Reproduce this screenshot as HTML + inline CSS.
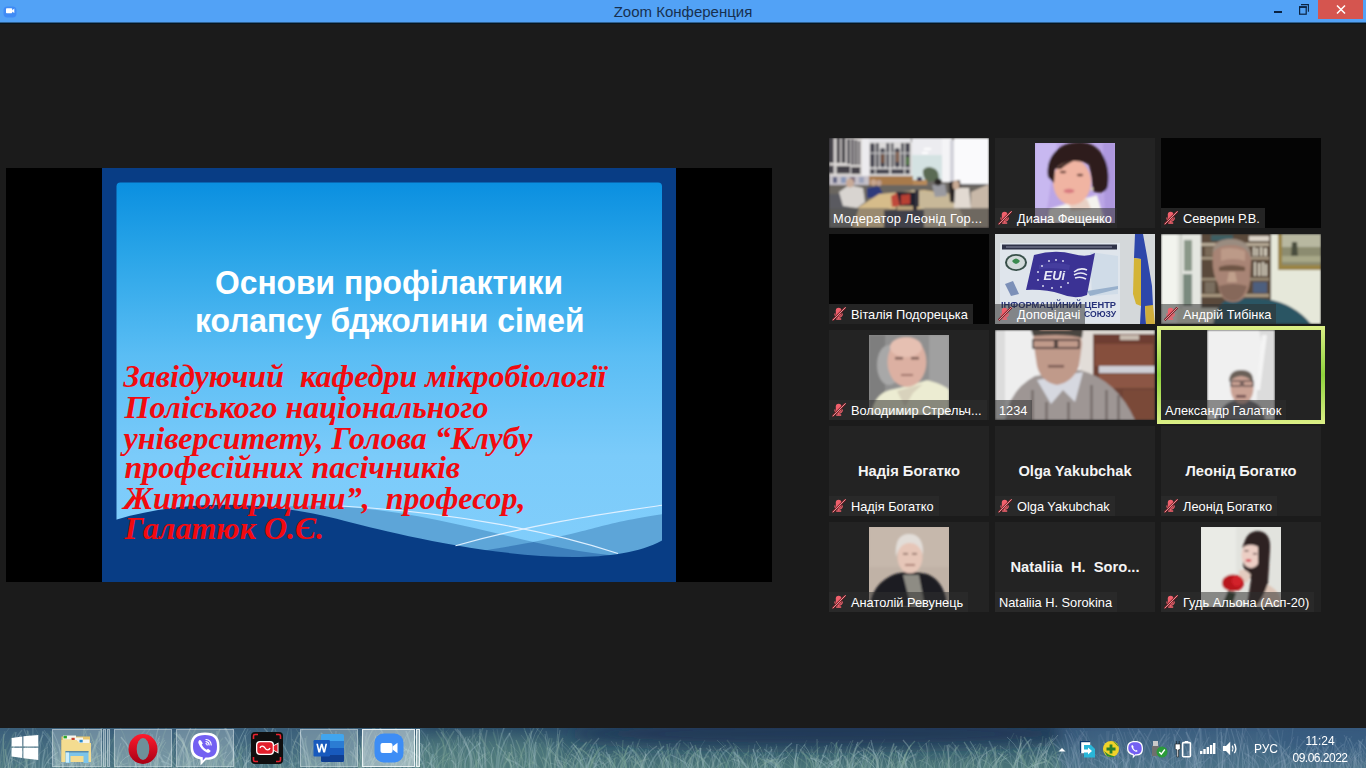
<!DOCTYPE html><html><head><meta charset="utf-8"><style>*{margin:0;padding:0;box-sizing:border-box}
html,body{width:1366px;height:768px;overflow:hidden;background:#1b1b1b;font-family:"Liberation Sans",sans-serif}
.abs{position:absolute}
#title{left:0;top:0;width:1366px;height:22px;background:#52a2f6}
#titleline{left:0;top:22px;width:1366px;height:2px;background:linear-gradient(#30608f 0,#30608f 50%,#061620 50%)}
#ttxt{left:0;top:4px;width:1366px;text-align:center;font-size:15px;color:#17304f;line-height:16px}
#share{left:6px;top:168px;width:766px;height:414px;background:#000}
.tile{position:absolute;width:160px;height:90px;background:#232323;overflow:hidden}
.ph{position:absolute;overflow:hidden}
.lbl{position:absolute;left:0;top:70px;height:20px;background:rgba(48,48,48,.53);color:#fff;font-size:12.8px;line-height:21px;padding-left:22px;padding-right:5px;white-space:nowrap}
.lbl.nomic{padding-left:4px}
.mic{position:absolute;left:3px;top:3px}
.bigname{position:absolute;left:0;top:35.6px;width:160px;text-align:center;color:#f4f4f4;font-weight:bold;font-size:14.7px;line-height:19px}
#active{left:1157px;top:326px;width:168px;height:98px;background:linear-gradient(#dcef86,#8fd33c 50%,#dcef86)}
#taskbar{left:0;top:728px;width:1366px;height:40px;background:#3d6878}
.tbx{position:absolute;top:729px;height:38px;background:rgba(222,234,240,.3);border:1px solid rgba(230,240,245,.42)}
.tbx.act{border:1.5px solid rgba(245,250,252,.85);background:rgba(225,236,238,.5)}
.tray{color:#fff;font-size:12px;line-height:14px}

.lbl.nobg{background:none;letter-spacing:0.22px}
.lbl.blk{background:#242424}
</style></head><body>
<div id="title" class="abs"></div>
<div id="titleline" class="abs"></div>
<div id="ttxt" class="abs">Zoom Конференция</div>
<svg class="abs" style="left:0;top:0" width="24" height="22" viewBox="0 0 24 22">
<rect x="3.5" y="6.5" width="13" height="11" rx="4" fill="#3f8bf5"/>
<rect x="6" y="8.2" width="6.2" height="5" rx="0.8" fill="#fff"/>
<path d="M12 10.5 L14.3 8.6 L14.3 13 L12 11.5 Z" fill="#fff"/>
</svg>
<div class="abs" style="left:1274px;top:11px;width:8px;height:2px;background:#0a2342"></div>
<svg class="abs" style="left:1296px;top:2px" width="14" height="14" viewBox="0 0 14 14">
<rect x="3.6" y="4.9" width="6.6" height="7.3" fill="none" stroke="#0a2342" stroke-width="1.2"/>
<rect x="3" y="4.3" width="7.8" height="1.6" fill="#0a2342"/>
<path d="M5 2.6 H12.4 V9.8" fill="none" stroke="#0a2342" stroke-width="1.1"/>
</svg>
<div class="abs" style="left:1318px;top:0;width:45px;height:19px;background:#d5554f"></div>
<svg class="abs" style="left:1318px;top:0" width="45" height="19" viewBox="0 0 45 19">
<path d="M19 5.5 L27 13.5 M27 5.5 L19 13.5" stroke="#fff" stroke-width="1.5"/>
</svg>

<div id="share" class="abs"></div>
<svg class="abs" style="left:102px;top:168px" width="574" height="414" viewBox="102 168 574 414">
<defs>
<linearGradient id="sg" gradientUnits="userSpaceOnUse" x1="0" y1="182" x2="0" y2="568">
<stop offset="0" stop-color="#0a8fe0"/>
<stop offset="0.19" stop-color="#2aa5e8"/>
<stop offset="0.45" stop-color="#5abdf4"/>
<stop offset="0.71" stop-color="#7bcbfa"/>
<stop offset="1" stop-color="#82cefb"/>
</linearGradient>
</defs>
<rect x="102" y="168" width="574" height="414" fill="#083d85"/>
<rect x="116.5" y="182.5" width="545.5" height="385" rx="4" fill="url(#sg)"/>
<path d="M287.0 506.4 C416.7 499.6 522.5 549.2 620.0 556.0 L640 600 L280 600 Z" fill="#5da5d8"/>
<path d="M455.0 555.0 C607.0 532.0 576.2 527.5 662.0 514.3 L662 600 L455 600 Z" fill="#5da5d8"/>
<clipPath id="cb1"><path d="M287.0 506.4 C416.7 499.6 522.5 549.2 620.0 556.0 L640 600 L280 600 Z"/></clipPath>
<path d="M455.0 555.0 C607.0 532.0 576.2 527.5 662.0 514.3 L662 600 L455 600 Z" fill="#3d7fbc" clip-path="url(#cb1)"/>
<path d="M116.0 519.7 C198.8 495.1 286.3 504.9 344.0 520.7 C386.6 531.4 583.9 583.0 662.0 540.5 L662 582 L116 582 Z" fill="#083d85"/>
<path d="M341.0 506.0 C451.8 512.1 549.6 531.0 618.0 553.5" stroke="#dff0ff" stroke-width="1.1" fill="none"/>
<path d="M455.5 545.7 C536.4 523.0 606.9 513.4 662.0 505.2" stroke="#dff0ff" stroke-width="1.1" fill="none"/>
<text x="215" y="294" textLength="348" lengthAdjust="spacingAndGlyphs" font-family="Liberation Sans" font-weight="bold" font-size="32.5" fill="#fff">Основи профілактики</text>
<text x="195" y="331.7" textLength="389.5" lengthAdjust="spacingAndGlyphs" font-family="Liberation Sans" font-weight="bold" font-size="32.5" fill="#fff">колапсу бджолини сімей</text>
<g font-family="Liberation Serif" font-weight="bold" font-style="italic" font-size="32" fill="#f20a0f">
<text x="123.5" y="387" xml:space="preserve">Завідуючий  кафедри мікробіології</text>
<text x="124.5" y="417.5">Поліського національного</text>
<text x="123.5" y="448.5">університету, Голова “Клубу</text>
<text x="124.5" y="478">професійних пасічників</text>
<text x="123.5" y="508.5" xml:space="preserve">Житомирщини”,  професор,</text>
<text x="124.5" y="539">Галатюк О.Є.</text>
</g>
</svg>

<div class="tile" style="left:829px;top:138px"><svg class="ph" style="left:0;top:0" width="160" height="90" viewBox="0 0 160 90">
<filter id="bmod" x="0" y="0" width="1" height="1"><feGaussianBlur stdDeviation="0.9"/></filter>
<g filter="url(#bmod)">
<rect width="160" height="90" fill="#6e6a66"/>
<rect x="0" y="0" width="33" height="38" fill="#dcd8d6"/>
<g fill="#44424a">
<rect x="0" y="0" width="4.7" height="25"/><rect x="7.6" y="0" width="3.5" height="25"/><rect x="12.6" y="0" width="3.8" height="25"/><rect x="18.2" y="1" width="2.9" height="25"/><rect x="22.3" y="1" width="2.3" height="26"/><rect x="25.8" y="2" width="2.3" height="25"/><rect x="29.3" y="3" width="1.8" height="24"/>
<rect x="0" y="27.5" width="4.7" height="8"/><rect x="7.6" y="28" width="13.5" height="7.5"/><rect x="22.3" y="29" width="9" height="7"/>
</g>
<rect x="33" y="0" width="7" height="38" fill="#ecebee"/>
<rect x="40" y="0" width="42" height="4" fill="#e4e4e8"/>
<rect x="40" y="4" width="43" height="34" fill="#dcdada"/>
<g fill="#4a4a52">
<rect x="41" y="5" width="4.7" height="24.5" rx="2"/><rect x="46.9" y="5" width="2.9" height="24.5"/>
<rect x="51" y="10" width="5.2" height="19.5" rx="2.5"/><rect x="57.4" y="5" width="2.9" height="24.5"/>
<rect x="62.1" y="5" width="2.3" height="24.5"/><rect x="65.6" y="10" width="5.3" height="19.5" rx="2.5"/><rect x="72" y="5" width="3" height="24.5"/><rect x="76.2" y="5" width="4.8" height="24.5"/>
<rect x="41" y="31" width="4.7" height="5"/><rect x="46.9" y="31" width="13.4" height="5"/><rect x="62.1" y="31" width="12.9" height="5"/><rect x="76.2" y="31" width="4.8" height="5"/>
</g>
<rect x="40" y="14.5" width="41" height="1.2" fill="#d0d0d0"/>
<rect x="52" y="16" width="3.5" height="9" fill="#7a5a48"/><rect x="66.5" y="14" width="3.8" height="10" fill="#8a6a5a"/><rect x="76.5" y="19" width="4" height="8" fill="#5a7a50"/>
<rect x="83" y="0" width="30" height="17" fill="#ececf0"/>
<rect x="83" y="17" width="30" height="25" fill="#d4e2e2"/>
<rect x="95" y="10" width="7" height="2" fill="#fff"/><rect x="93" y="14" width="6" height="2" fill="#fff"/>
<path d="M94 32 Q98 27 104 30 Q110 31 110 42 L98 44 Q93 38 94 32Z" fill="#5a6a52"/>
<rect x="113" y="0" width="10" height="44" fill="#f4f4f6"/>
<rect x="121" y="2" width="4" height="42" fill="#d2d2da"/>
<rect x="125" y="0" width="35" height="46" fill="#fafafc"/>
<rect x="0" y="38" width="40" height="9" fill="#c4c0c8"/>
<rect x="4" y="39" width="4" height="6" fill="#5a5e80"/><rect x="12" y="39" width="5" height="6" fill="#8a98b8"/><rect x="21" y="39" width="5" height="6" fill="#7a6a7a"/><rect x="30" y="39" width="5" height="6" fill="#9aa0b8"/>
<rect x="40" y="38" width="44" height="9" fill="#a87a4c"/>
<rect x="84" y="42" width="14" height="6" fill="#b88a5a"/><rect x="88" y="39" width="5" height="4" fill="#40405a"/>
<rect x="126" y="46" width="34" height="10" fill="#3a4052"/>
<rect x="0" y="47" width="160" height="43" fill="#6a6660"/>
<rect x="0" y="56" width="20" height="34" fill="#5a5a60"/>
<path d="M10 54 L20 47 L34 50 L36 64 L28 70 L14 68 Z" fill="#d8d4d0"/>
<ellipse cx="21" cy="45" rx="4" ry="4.5" fill="#c8aa98"/>
<path d="M38 50 L50 48 L54 56 L48 60 L38 60 Z" fill="#2e3a7c"/>
<ellipse cx="44.5" cy="44.5" rx="3" ry="3.2" fill="#c8a68e"/><ellipse cx="50" cy="45" rx="2.6" ry="3" fill="#c0a090"/>
<path d="M27 71 L50 56 L95 52 L122 56 L134 71 Z" fill="#d6bc8a"/>
<path d="M82 52 L122 56 L134 71 L92 71Z" fill="#c8b898"/>
<rect x="67" y="54" width="21" height="20" fill="#24242e"/>
<path d="M62 58 L68 55 L71 68 L63 69Z" fill="#c04a3a"/><path d="M72 57 L81 56 L81 66 L72 67Z" fill="#b84030"/>
<rect x="68" y="68" width="16" height="6" fill="#b8a078"/>
<rect x="86" y="52" width="4" height="17" fill="#30303a"/>
<path d="M103 47 L116 46 L118 58 L106 59Z" fill="#9a9aa0"/>
<ellipse cx="109" cy="44" rx="3.5" ry="3.5" fill="#2a2626"/>
<path d="M120 44 L131 42 L133 66 L121 64Z" fill="#282020"/>
<path d="M126 50 L140 50 L142 70 L125 70Z" fill="#e2dad2"/>
<ellipse cx="127" cy="47" rx="3.5" ry="4.5" fill="#c8aa94"/>
<path d="M142 54 L160 46 V72 L142 72Z" fill="#c8b8a8"/>
<rect x="0" y="72" width="160" height="18" fill="#7a7266"/>
<path d="M0 70 H30 L22 90 H0Z" fill="#585858"/>
<path d="M30 70 H60 L56 90 H24Z" fill="#9a8a70"/>
<rect x="55" y="72" width="40" height="18" fill="#40404a"/>
<path d="M95 70 H130 L140 90 H95Z" fill="#8a8274"/>
<path d="M130 70 H160 V90 H140Z" fill="#6e6860"/>
</g>
</svg>
<div class="lbl nomic nobg">Модератор Леонід Гор...</div></div>
<div class="tile" style="left:995px;top:138px"><svg class="ph" style="left:40px;top:5px" width="80" height="80" viewBox="0 0 80 80">
<filter id="bdi" x="-0.1" y="-0.1" width="1.2" height="1.2"><feGaussianBlur stdDeviation="0.9"/></filter>
<rect width="80" height="80" fill="#bba6e6"/>
<g filter="url(#bdi)">
<path d="M0 0 H22 L10 80 H0Z" fill="#c8b8f0"/>
<path d="M68 0 H80 V80 H70 Z" fill="#ae98de"/>
<path d="M14 66 Q40 58 62 52 L70 80 H12 Z" fill="#f4f3ee"/>
<path d="M34 60 L52 56 L56 66 L36 68Z" fill="#e8d0c4"/>
<ellipse cx="37" cy="39" rx="19" ry="23" fill="#f0b4a2"/>
<path d="M13 34 C10 12 26 -2 46 -1 C66 0 76 20 73 42 C72 50 64 51 58 48 C57 38 56 30 54 22 C46 16 30 16 20 26 L19 40 Z" fill="#2e1e1c"/>
<path d="M20 26 Q30 18 40 17 Q30 22 26 26Z" fill="#3a2824"/>
<ellipse cx="28" cy="29" rx="3.2" ry="1.3" fill="#6a4038"/><ellipse cx="45" cy="32" rx="3.2" ry="1.3" fill="#6a4038"/>
<ellipse cx="34" cy="48" rx="5.5" ry="2.2" fill="#d87a80"/>
<circle cx="57" cy="46" r="1.4" fill="#e8d8b8"/>
</g>
</svg>
<div class="lbl"><svg class="mic" viewBox="0 0 14 14" width="14" height="14"><rect x="3.8" y="0.8" width="5.6" height="8.4" rx="2.8" fill="#f0606c"/><path d="M2.8 6.5 Q2.8 10 6.6 10.2 Q10.4 10 10.4 6.5" stroke="#f0606c" stroke-width="1.1" fill="none"/><rect x="5.9" y="9.5" width="1.5" height="2.2" fill="#f0606c"/><rect x="4.2" y="11.3" width="5" height="1.5" fill="#f0606c"/><path d="M0.6 13.3 L13.6 0.3" stroke="#7a1820" stroke-width="2.2"/><path d="M0.6 13.3 L13.6 0.3" stroke="#f4b4b8" stroke-width="0.9"/></svg>Диана Фещенко</div></div>
<div class="tile" style="left:1161px;top:138px"><div style="position:absolute;inset:0;background:#040404"></div><div class="lbl blk"><svg class="mic" viewBox="0 0 14 14" width="14" height="14"><rect x="3.8" y="0.8" width="5.6" height="8.4" rx="2.8" fill="#f0606c"/><path d="M2.8 6.5 Q2.8 10 6.6 10.2 Q10.4 10 10.4 6.5" stroke="#f0606c" stroke-width="1.1" fill="none"/><rect x="5.9" y="9.5" width="1.5" height="2.2" fill="#f0606c"/><rect x="4.2" y="11.3" width="5" height="1.5" fill="#f0606c"/><path d="M0.6 13.3 L13.6 0.3" stroke="#7a1820" stroke-width="2.2"/><path d="M0.6 13.3 L13.6 0.3" stroke="#f4b4b8" stroke-width="0.9"/></svg>Северин Р.В.</div></div>
<div class="tile" style="left:829px;top:234px"><div style="position:absolute;inset:0;background:#030303"></div><div class="lbl blk"><svg class="mic" viewBox="0 0 14 14" width="14" height="14"><rect x="3.8" y="0.8" width="5.6" height="8.4" rx="2.8" fill="#f0606c"/><path d="M2.8 6.5 Q2.8 10 6.6 10.2 Q10.4 10 10.4 6.5" stroke="#f0606c" stroke-width="1.1" fill="none"/><rect x="5.9" y="9.5" width="1.5" height="2.2" fill="#f0606c"/><rect x="4.2" y="11.3" width="5" height="1.5" fill="#f0606c"/><path d="M0.6 13.3 L13.6 0.3" stroke="#7a1820" stroke-width="2.2"/><path d="M0.6 13.3 L13.6 0.3" stroke="#f4b4b8" stroke-width="0.9"/></svg>Віталія Подорецька</div></div>
<div class="tile" style="left:995px;top:234px"><svg class="ph" style="left:0;top:0" width="160" height="90" viewBox="0 0 160 90">
<filter id="beu" x="0" y="0" width="1" height="1"><feGaussianBlur stdDeviation="0.6"/></filter>
<g filter="url(#beu)">
<rect width="160" height="90" fill="#d4d8da"/>
<rect x="5" y="9" width="120" height="80" fill="#dfe5ec"/>
<rect x="7" y="10.5" width="115" height="5" fill="#2e3248"/>
<rect x="11" y="12" width="106" height="2" fill="#7a7e98" opacity=".6"/>
<path d="M95 18 L123 22 L123 60 L97 62 Z" fill="#d0dce8"/>
<path d="M92 57 L123 52 L123 55 L95 62Z" fill="#98b0cc"/>
<path d="M10 50 L18 47 L24 60 L16 62Z" fill="#7c90b8"/>
<ellipse cx="21" cy="28.5" rx="11" ry="8.5" fill="#38504a"/>
<ellipse cx="21" cy="28.5" rx="9" ry="6.8" fill="#d2dada"/>
<path d="M17 27 Q21 22 25 27 Q21 33 17 27Z" fill="#3a8a50"/>
<path d="M39 21 Q60 15 78 20 Q92 24 100 19 L92 61 Q80 66 66 60 Q50 55 31 56 Z" fill="#3a3394"/>
<path d="M44 31 Q60 27 75 31 L74 36 Q60 33 44 35Z" fill="#4d48a8" opacity=".5"/>
<text x="48.5" y="46" font-family="Liberation Sans" font-weight="bold" font-style="italic" font-size="13" fill="#e8e8f4">EUi</text>
<path d="M79 38 Q85 33 92 36 M79 41 Q86 37 92 41 M80 44 Q86 42 91 45" stroke="#e8e8f4" stroke-width="1.5" fill="none"/>
<g fill="#d8d8ee"><circle cx="54" cy="27" r="1"/><circle cx="61" cy="26" r="1"/><circle cx="68" cy="27" r="1"/><circle cx="47" cy="32" r="1"/><circle cx="43" cy="38" r="1"/><circle cx="43" cy="46" r="1"/><circle cx="48" cy="52" r="1"/><circle cx="57" cy="54" r="1"/><circle cx="66" cy="53" r="1"/><circle cx="73" cy="49" r="1"/></g>
<rect x="6" y="66.5" width="115" height="7" fill="#dfe5ec"/>
<text x="6" y="74" font-family="Liberation Sans" font-weight="bold" font-size="9" textLength="115" lengthAdjust="spacingAndGlyphs" fill="#26327a">ІНФОРМАЦІЙНИЙ ЦЕНТР</text>
<text x="89" y="83" font-family="Liberation Sans" font-weight="bold" font-size="9" textLength="32" lengthAdjust="spacingAndGlyphs" fill="#26327a">СОЮЗУ</text>
<path d="M140 0 H148 L152 22 L157 52 L158 72 L150 72 L151 90 H145 L146 72 L146 25 L139 24 Z" fill="#2e46aa"/>
<path d="M139 24 L146 25 L146 72 L141 70 L138 60Z" fill="#d4b436"/>
<path d="M150 72 L158 71 L160 90 H151Z" fill="#d0ae3a"/>
</g>
</svg>
<div class="lbl"><svg class="mic" viewBox="0 0 14 14" width="14" height="14"><rect x="3.8" y="0.8" width="5.6" height="8.4" rx="2.8" fill="#f0606c"/><path d="M2.8 6.5 Q2.8 10 6.6 10.2 Q10.4 10 10.4 6.5" stroke="#f0606c" stroke-width="1.1" fill="none"/><rect x="5.9" y="9.5" width="1.5" height="2.2" fill="#f0606c"/><rect x="4.2" y="11.3" width="5" height="1.5" fill="#f0606c"/><path d="M0.6 13.3 L13.6 0.3" stroke="#7a1820" stroke-width="2.2"/><path d="M0.6 13.3 L13.6 0.3" stroke="#f4b4b8" stroke-width="0.9"/></svg>Доповідачі</div></div>
<div class="tile" style="left:1161px;top:234px"><svg class="ph" style="left:0;top:0" width="160" height="90" viewBox="0 0 160 90">
<filter id="ban" x="0" y="0" width="1" height="1"><feGaussianBlur stdDeviation="0.9"/></filter>
<g filter="url(#ban)">
<rect width="160" height="90" fill="#e2e4d4"/>
<rect x="0" y="0" width="16" height="90" fill="#f2f4ee"/>
<rect x="16" y="0" width="24" height="75" fill="#e4e6e0"/>
<rect x="19" y="0" width="2" height="75" fill="#c8ccc4"/>
<rect x="23" y="6" width="8" height="31" fill="#8a9888"/><rect x="22" y="40" width="9" height="32" fill="#7a8a7e"/>
<rect x="40" y="0" width="70" height="74" fill="#5a4a3a"/>
<rect x="40" y="9" width="68" height="3" fill="#b8ac98"/><rect x="40" y="23" width="68" height="2.5" fill="#a89a84"/><rect x="40" y="44" width="68" height="2.5" fill="#9a8c76"/><rect x="40" y="60" width="68" height="3" fill="#a89880"/>
<rect x="50" y="1" width="22" height="6" fill="#3e5e64"/><rect x="88" y="2" width="20" height="5" fill="#dcd4c8"/>
<g fill="#cfc8b8"><rect x="92" y="13" width="2" height="9"/><rect x="95" y="14" width="2" height="8"/><rect x="99" y="13" width="2.5" height="9"/><rect x="103" y="14" width="3" height="8"/><rect x="93" y="28" width="2" height="14"/><rect x="97" y="29" width="2.5" height="13"/><rect x="101" y="28" width="2" height="14"/><rect x="104" y="30" width="2" height="12"/></g>
<rect x="92" y="48" width="14" height="11" fill="#4e5e7e"/>
<rect x="44" y="13" width="10" height="9" fill="#7a6a58"/><rect x="44" y="48" width="10" height="11" fill="#7a6e5e"/>
<rect x="110" y="0" width="50" height="90" fill="#e6e8da"/>
<rect x="117" y="0" width="43" height="36" fill="#9a8444"/>
<rect x="121" y="0" width="39" height="31" fill="#8c8c70"/>
<rect x="121" y="0" width="39" height="13" fill="#b8b8a0"/>
<path d="M131 8 L136 8 L137 24 L130 24Z" fill="#4a4e3c"/>
<rect x="121" y="22" width="39" height="6" fill="#a8a888"/>
<path d="M52 90 Q56 66 72 64 L96 64 Q130 66 150 90Z" fill="#2a5464"/>
<path d="M52 17 Q52 5 71 5 Q91 6 90 27 L89 48 Q86 68 72 68 Q59 68 57 50 Q50 38 52 17Z" fill="#a88474"/>
<path d="M52 19 Q52 5 71 5 Q91 6 90 25 Q86 11 71 11 Q56 11 52 19Z" fill="#9a8c80"/>
<path d="M60 15 Q72 12 84 17 L84 27 Q72 23 60 27Z" fill="#bc9a88"/>
<path d="M58 33 Q70 29 84 33 L84 37 L58 37Z" fill="#6e5444"/>
<path d="M68 38 L74 38 L76 48 L66 48Z" fill="#c0a08c"/>
<path d="M58 52 Q72 48 86 52 Q82 67 72 67 Q61 67 58 52Z" fill="#86685a"/>
</g>
</svg>
<div class="lbl"><svg class="mic" viewBox="0 0 14 14" width="14" height="14"><rect x="3.8" y="0.8" width="5.6" height="8.4" rx="2.8" fill="#f0606c"/><path d="M2.8 6.5 Q2.8 10 6.6 10.2 Q10.4 10 10.4 6.5" stroke="#f0606c" stroke-width="1.1" fill="none"/><rect x="5.9" y="9.5" width="1.5" height="2.2" fill="#f0606c"/><rect x="4.2" y="11.3" width="5" height="1.5" fill="#f0606c"/><path d="M0.6 13.3 L13.6 0.3" stroke="#7a1820" stroke-width="2.2"/><path d="M0.6 13.3 L13.6 0.3" stroke="#f4b4b8" stroke-width="0.9"/></svg>Андрій Тибінка</div></div>
<div class="tile" style="left:829px;top:330px"><svg class="ph" style="left:40px;top:5px" width="80" height="80" viewBox="0 0 80 80">
<filter id="bvo" x="-0.1" y="-0.1" width="1.2" height="1.2"><feGaussianBlur stdDeviation="1"/></filter>
<rect width="80" height="80" fill="#909090"/>
<g filter="url(#bvo)">
<rect x="0" y="0" width="16" height="80" fill="#7e7e7e"/>
<rect x="60" y="0" width="20" height="55" fill="#a0a0a0"/>
<ellipse cx="20" cy="30" rx="12" ry="20" fill="#a8a8a8"/>
<path d="M2 80 Q5 60 20 55 L38 51 L58 45 Q76 50 80 55 V80Z" fill="#ececd2"/>
<path d="M28 56 L36 72 L44 58 L54 49 Z" fill="#d8d2bc"/>
<ellipse cx="38" cy="27" rx="19.5" ry="25" fill="#dcb0a2"/>
<ellipse cx="37" cy="12" rx="16" ry="10" fill="#e6c0b2"/>
<rect x="26" y="22" width="8" height="2.4" fill="#7a5a52"/><rect x="42" y="22" width="8" height="2.4" fill="#7a5a52"/>
<rect x="32" y="39" width="12" height="2" fill="#a0746a"/>
</g>
</svg>
<div class="lbl"><svg class="mic" viewBox="0 0 14 14" width="14" height="14"><rect x="3.8" y="0.8" width="5.6" height="8.4" rx="2.8" fill="#f0606c"/><path d="M2.8 6.5 Q2.8 10 6.6 10.2 Q10.4 10 10.4 6.5" stroke="#f0606c" stroke-width="1.1" fill="none"/><rect x="5.9" y="9.5" width="1.5" height="2.2" fill="#f0606c"/><rect x="4.2" y="11.3" width="5" height="1.5" fill="#f0606c"/><path d="M0.6 13.3 L13.6 0.3" stroke="#7a1820" stroke-width="2.2"/><path d="M0.6 13.3 L13.6 0.3" stroke="#f4b4b8" stroke-width="0.9"/></svg>Володимир Стрельч...</div></div>
<div class="tile" style="left:995px;top:330px"><svg class="ph" style="left:0;top:0" width="160" height="90" viewBox="0 0 160 90">
<filter id="b12" x="0" y="0" width="1" height="1"><feGaussianBlur stdDeviation="1.1"/></filter>
<g filter="url(#b12)">
<rect width="160" height="90" fill="#eeeeee"/>
<rect x="0" y="0" width="10" height="90" fill="#dcdcdc"/>
<rect x="85" y="0" width="15" height="45" fill="#e2ddd8"/>
<rect x="98" y="0" width="62" height="90" fill="#6e4234"/>
<rect x="98" y="0" width="62" height="4" fill="#e0dcd6"/>
<rect x="100" y="4" width="58" height="10" fill="#6e3e30"/>
<rect x="125" y="5" width="19" height="5" fill="#c8bcb0"/>
<rect x="100" y="14" width="58" height="22" fill="#86503e"/>
<rect x="104" y="36" width="56" height="7" fill="#cfcfd6"/>
<rect x="104" y="44" width="56" height="14" fill="#8c5644"/>
<rect x="128" y="60" width="32" height="30" fill="#7a4838"/>
<path d="M10 90 Q14 60 40 46 L85 40 Q122 50 140 90Z" fill="#9e9694"/>
<path d="M42 50 L56 74 L68 60 L80 72 L88 42 Z" fill="#d6d8e0"/>
<g fill="#766c6a" opacity=".8"><rect x="36" y="60" width="3" height="30"/><rect x="50" y="72" width="3" height="18"/><rect x="72" y="72" width="3" height="18"/><rect x="95" y="55" width="3" height="35"/><rect x="110" y="60" width="3" height="30"/><rect x="122" y="65" width="3" height="25"/></g>
<path d="M38 10 Q38 -4 62 -3 Q87 -2 87 14 L84 36 Q78 52 62 55 Q46 52 42 36 Z" fill="#c09a8a"/>
<path d="M36 0 H88 L87 8 Q72 3 38 6Z" fill="#4a4440"/>
<path d="M38 10 H60 L60 18 H38Z M62 10 H84 L84 18 H62Z" fill="none" stroke="#3a3030" stroke-width="1.6"/>
<rect x="53" y="35" width="16" height="2.5" fill="#7a5a52"/>
</g>
</svg>
<div class="lbl nomic">1234</div></div>
<div class="abs" id="active"></div>
<div class="tile" style="left:1161px;top:330px"><svg class="ph" style="left:46px;top:0" width="68" height="90" viewBox="0 0 68 90">
<filter id="bga" x="0" y="0" width="1" height="1"><feGaussianBlur stdDeviation="1"/></filter>
<g filter="url(#bga)">
<rect width="68" height="90" fill="#f0f0f0"/>
<rect x="0" y="0" width="68" height="40" fill="#f0f0f0"/>
<path d="M52 0 H68 V90 H50 Q48 50 56 20Z" fill="#dcdcdc"/>
<path d="M55 5 L60 5 L53 60 L49 60Z" fill="#f4f4f4"/>
<path d="M10 90 Q14 72 30 70 L40 70 Q56 72 58 90Z" fill="#6a6a72"/>
<ellipse cx="35" cy="58" rx="11.5" ry="16" fill="#caa294"/>
<path d="M22 52 Q22 40 34 40 Q47 40 46 52 Q40 46 34 46 Q28 46 22 52Z" fill="#6a6058"/>
<path d="M24 51 H34 V56 H24Z M36 51 H46 V56 H36Z" fill="none" stroke="#3a3030" stroke-width="1.1"/>
<rect x="29" y="65" width="10" height="2.5" fill="#6a4848"/>
</g>
</svg>
<div class="lbl nomic">Александр Галатюк</div></div>
<div class="tile" style="left:829px;top:426px"><div class="bigname">Надія Богатко</div><div class="lbl"><svg class="mic" viewBox="0 0 14 14" width="14" height="14"><rect x="3.8" y="0.8" width="5.6" height="8.4" rx="2.8" fill="#f0606c"/><path d="M2.8 6.5 Q2.8 10 6.6 10.2 Q10.4 10 10.4 6.5" stroke="#f0606c" stroke-width="1.1" fill="none"/><rect x="5.9" y="9.5" width="1.5" height="2.2" fill="#f0606c"/><rect x="4.2" y="11.3" width="5" height="1.5" fill="#f0606c"/><path d="M0.6 13.3 L13.6 0.3" stroke="#7a1820" stroke-width="2.2"/><path d="M0.6 13.3 L13.6 0.3" stroke="#f4b4b8" stroke-width="0.9"/></svg>Надія Богатко</div></div>
<div class="tile" style="left:995px;top:426px"><div class="bigname">Olga Yakubchak</div><div class="lbl"><svg class="mic" viewBox="0 0 14 14" width="14" height="14"><rect x="3.8" y="0.8" width="5.6" height="8.4" rx="2.8" fill="#f0606c"/><path d="M2.8 6.5 Q2.8 10 6.6 10.2 Q10.4 10 10.4 6.5" stroke="#f0606c" stroke-width="1.1" fill="none"/><rect x="5.9" y="9.5" width="1.5" height="2.2" fill="#f0606c"/><rect x="4.2" y="11.3" width="5" height="1.5" fill="#f0606c"/><path d="M0.6 13.3 L13.6 0.3" stroke="#7a1820" stroke-width="2.2"/><path d="M0.6 13.3 L13.6 0.3" stroke="#f4b4b8" stroke-width="0.9"/></svg>Olga Yakubchak</div></div>
<div class="tile" style="left:1161px;top:426px"><div class="bigname">Леонід Богатко</div><div class="lbl"><svg class="mic" viewBox="0 0 14 14" width="14" height="14"><rect x="3.8" y="0.8" width="5.6" height="8.4" rx="2.8" fill="#f0606c"/><path d="M2.8 6.5 Q2.8 10 6.6 10.2 Q10.4 10 10.4 6.5" stroke="#f0606c" stroke-width="1.1" fill="none"/><rect x="5.9" y="9.5" width="1.5" height="2.2" fill="#f0606c"/><rect x="4.2" y="11.3" width="5" height="1.5" fill="#f0606c"/><path d="M0.6 13.3 L13.6 0.3" stroke="#7a1820" stroke-width="2.2"/><path d="M0.6 13.3 L13.6 0.3" stroke="#f4b4b8" stroke-width="0.9"/></svg>Леонід Богатко</div></div>
<div class="tile" style="left:829px;top:522px"><svg class="ph" style="left:40px;top:5px" width="80" height="80" viewBox="0 0 80 80">
<filter id="bat" x="-0.1" y="-0.1" width="1.2" height="1.2"><feGaussianBlur stdDeviation="0.9"/></filter>
<rect width="80" height="80" fill="#c0b2a6"/>
<g filter="url(#bat)">
<rect x="0" y="0" width="80" height="40" fill="#c6b8ac"/>
<path d="M1 80 Q3 56 26 47 L40 44 L58 47 Q76 54 78 80Z" fill="#1c1c24"/>
<path d="M34 48 L50 48 L56 80 L42 80Z" fill="#8e8c84"/>
<ellipse cx="41" cy="30" rx="12.5" ry="16.5" fill="#e6c6b8"/>
<path d="M27 30 Q25 7 40 7 Q55 7 54 28 Q50 15 40 16 Q31 16 27 30Z" fill="#e2ddd8"/>
<rect x="34" y="26" width="5" height="1.6" fill="#8a6a60"/><rect x="43" y="26" width="5" height="1.6" fill="#8a6a60"/>
<rect x="36" y="37" width="10" height="1.8" fill="#a87a70"/>
</g>
</svg>
<div class="lbl"><svg class="mic" viewBox="0 0 14 14" width="14" height="14"><rect x="3.8" y="0.8" width="5.6" height="8.4" rx="2.8" fill="#f0606c"/><path d="M2.8 6.5 Q2.8 10 6.6 10.2 Q10.4 10 10.4 6.5" stroke="#f0606c" stroke-width="1.1" fill="none"/><rect x="5.9" y="9.5" width="1.5" height="2.2" fill="#f0606c"/><rect x="4.2" y="11.3" width="5" height="1.5" fill="#f0606c"/><path d="M0.6 13.3 L13.6 0.3" stroke="#7a1820" stroke-width="2.2"/><path d="M0.6 13.3 L13.6 0.3" stroke="#f4b4b8" stroke-width="0.9"/></svg>Анатолій Ревунець</div></div>
<div class="tile" style="left:995px;top:522px"><div class="bigname">Nataliia&nbsp; H.&nbsp; Soro...</div><div class="lbl nomic">Nataliia H. Sorokina</div></div>
<div class="tile" style="left:1161px;top:522px"><svg class="ph" style="left:40px;top:5px" width="80" height="80" viewBox="0 0 80 80">
<filter id="bgu" x="-0.1" y="-0.1" width="1.2" height="1.2"><feGaussianBlur stdDeviation="0.8"/></filter>
<rect width="80" height="80" fill="#e2e3de"/>
<g filter="url(#bgu)">
<rect x="0" y="0" width="35" height="80" fill="#eaebe6"/>
<path d="M62 56 Q76 60 80 72 V80 H56Z" fill="#dec6b8"/>
<path d="M42 22 Q44 4 57 4 Q70 5 69 22 L67 56 Q62 72 54 80 L46 80 L50 52 Q44 46 42 38Z" fill="#2e2222"/>
<ellipse cx="50" cy="28" rx="9.5" ry="13" fill="#eccec4"/>
<path d="M41 21 Q45 9 57 11 L61 24 Q55 15 44 19Z" fill="#2e2222"/>
<path d="M57 13 L64 18 L63 48 L57 44Z" fill="#2e2222"/>
<rect x="43.5" y="23" width="4" height="1.4" fill="#5a4040"/><rect x="52" y="26" width="4" height="1.4" fill="#5a4040"/>
<ellipse cx="47.5" cy="33.5" rx="3" ry="1.3" fill="#d03848"/>
<path d="M38 44 Q44 40 50 48 L46 56 L38 52Z" fill="#e4ccc0"/>
<ellipse cx="32" cy="56" rx="11" ry="8.5" fill="#b8121a"/>
<ellipse cx="36" cy="54" rx="5.5" ry="5.5" fill="#d2202a"/>
<path d="M20 80 L27 64 L35 66 L31 80Z" fill="#30402e"/>
</g>
</svg>
<div class="lbl"><svg class="mic" viewBox="0 0 14 14" width="14" height="14"><rect x="3.8" y="0.8" width="5.6" height="8.4" rx="2.8" fill="#f0606c"/><path d="M2.8 6.5 Q2.8 10 6.6 10.2 Q10.4 10 10.4 6.5" stroke="#f0606c" stroke-width="1.1" fill="none"/><rect x="5.9" y="9.5" width="1.5" height="2.2" fill="#f0606c"/><rect x="4.2" y="11.3" width="5" height="1.5" fill="#f0606c"/><path d="M0.6 13.3 L13.6 0.3" stroke="#7a1820" stroke-width="2.2"/><path d="M0.6 13.3 L13.6 0.3" stroke="#f4b4b8" stroke-width="0.9"/></svg>Гудь Альона (Асп-20)</div></div>
<svg class="abs" style="left:0;top:728px" width="1366" height="40" viewBox="0 0 1366 40">
<defs><linearGradient id="tbg" x1="0" y1="0" x2="0" y2="1"><stop offset="0" stop-color="#2a4c68"/><stop offset="0.5" stop-color="#3a6272"/><stop offset="1" stop-color="#4a7478"/></linearGradient><filter id="tbl" x="-0.5" y="-2" width="2" height="5"><feGaussianBlur stdDeviation="7"/></filter><filter id="tgr" x="0" y="0" width="1" height="1"><feGaussianBlur stdDeviation="0.45"/></filter></defs>
<rect width="1366" height="40" fill="url(#tbg)"/>
<g filter="url(#tbl)"><ellipse cx="830" cy="6" rx="260" ry="14" fill="#17304e" opacity=".7"/><ellipse cx="1340" cy="12" rx="70" ry="18" fill="#1e3c64" opacity=".5"/><rect x="1060" y="-10" width="330" height="60" fill="#4a6e96" opacity=".5"/><ellipse cx="470" cy="24" rx="90" ry="18" fill="#6a988c" opacity=".35"/><rect x="-20" y="-10" width="440" height="60" fill="#4e7890" opacity=".45"/></g>
<g fill="none" filter="url(#tgr)"><path d="M617 42Q619 30 632 22" stroke="#9cbcc4" stroke-opacity="0.31" stroke-width="1.4"/><path d="M649 42Q645 29 638 20" stroke="#a0b8bc" stroke-opacity="0.30" stroke-width="1.2"/><path d="M815 43Q816 33 814 26" stroke="#6e9890" stroke-opacity="0.32" stroke-width="0.7"/><path d="M39 43Q39 19 43 3" stroke="#9cbcc4" stroke-opacity="0.31" stroke-width="1.1"/><path d="M877 42Q877 30 883 23" stroke="#8fb0a4" stroke-opacity="0.42" stroke-width="1.3"/><path d="M427 40Q428 31 419 24" stroke="#7ca494" stroke-opacity="0.26" stroke-width="1.0"/><path d="M1318 41Q1318 23 1300 11" stroke="#8098b0" stroke-opacity="0.17" stroke-width="1.0"/><path d="M91 41Q89 23 101 10" stroke="#acc8cc" stroke-opacity="0.24" stroke-width="1.4"/><path d="M154 40Q154 30 139 23" stroke="#6e9890" stroke-opacity="0.20" stroke-width="0.8"/><path d="M695 42Q696 24 705 12" stroke="#9cbcc4" stroke-opacity="0.26" stroke-width="0.6"/><path d="M1188 44Q1185 18 1191 1" stroke="#8098b0" stroke-opacity="0.12" stroke-width="1.2"/><path d="M129 41Q130 15 119 -3" stroke="#7ca494" stroke-opacity="0.24" stroke-width="1.0"/><path d="M93 40Q93 31 98 25" stroke="#9cbcc4" stroke-opacity="0.32" stroke-width="1.6"/><path d="M660 41Q660 28 674 20" stroke="#6e9890" stroke-opacity="0.40" stroke-width="0.8"/><path d="M253 41Q259 20 269 6" stroke="#6e9890" stroke-opacity="0.39" stroke-width="0.7"/><path d="M56 41Q58 34 56 29" stroke="#acc8cc" stroke-opacity="0.26" stroke-width="1.4"/><path d="M817 43Q811 34 805 28" stroke="#6e9890" stroke-opacity="0.21" stroke-width="1.3"/><path d="M844 44Q844 38 833 34" stroke="#acc8cc" stroke-opacity="0.17" stroke-width="1.0"/><path d="M74 42Q70 34 69 28" stroke="#acc8cc" stroke-opacity="0.25" stroke-width="1.6"/><path d="M901 41Q897 27 904 17" stroke="#7ca494" stroke-opacity="0.15" stroke-width="1.3"/><path d="M1324 42Q1327 37 1329 33" stroke="#90a8c0" stroke-opacity="0.14" stroke-width="0.7"/><path d="M747 43Q751 28 761 19" stroke="#7ca494" stroke-opacity="0.36" stroke-width="1.0"/><path d="M940 42Q944 25 953 14" stroke="#6e9890" stroke-opacity="0.38" stroke-width="0.6"/><path d="M908 40Q902 30 890 24" stroke="#7ca494" stroke-opacity="0.18" stroke-width="1.5"/><path d="M999 42Q1000 32 1008 26" stroke="#8fb0a4" stroke-opacity="0.38" stroke-width="1.1"/><path d="M703 40Q705 31 688 25" stroke="#6e9890" stroke-opacity="0.18" stroke-width="1.3"/><path d="M664 41Q664 24 659 13" stroke="#7ca494" stroke-opacity="0.29" stroke-width="1.3"/><path d="M603 43Q599 26 596 15" stroke="#9cbcc4" stroke-opacity="0.27" stroke-width="1.5"/><path d="M523 41Q522 23 516 12" stroke="#8fb0a4" stroke-opacity="0.38" stroke-width="1.3"/><path d="M1307 42Q1303 33 1295 27" stroke="#a0b8cc" stroke-opacity="0.12" stroke-width="1.0"/><path d="M711 43Q713 30 718 21" stroke="#8fb0a4" stroke-opacity="0.24" stroke-width="0.9"/><path d="M832 41Q832 28 824 18" stroke="#a0b8bc" stroke-opacity="0.30" stroke-width="0.7"/><path d="M620 41Q619 36 632 32" stroke="#a0b8bc" stroke-opacity="0.16" stroke-width="0.7"/><path d="M141 41Q138 25 146 14" stroke="#acc8cc" stroke-opacity="0.20" stroke-width="0.9"/><path d="M980 40Q978 25 981 16" stroke="#6e9890" stroke-opacity="0.36" stroke-width="1.3"/><path d="M711 42Q715 29 721 20" stroke="#8fb0a4" stroke-opacity="0.39" stroke-width="1.0"/><path d="M1227 41Q1230 28 1225 19" stroke="#8098b0" stroke-opacity="0.08" stroke-width="1.2"/><path d="M1209 42Q1212 20 1225 5" stroke="#8098b0" stroke-opacity="0.12" stroke-width="1.5"/><path d="M1096 41Q1094 16 1083 -0" stroke="#a0b8cc" stroke-opacity="0.10" stroke-width="1.1"/><path d="M1086 43Q1087 32 1101 24" stroke="#a0b8cc" stroke-opacity="0.10" stroke-width="0.9"/><path d="M574 41Q579 32 589 27" stroke="#8fb0a4" stroke-opacity="0.27" stroke-width="0.8"/><path d="M454 41Q453 19 441 4" stroke="#a0b8bc" stroke-opacity="0.35" stroke-width="1.3"/><path d="M1301 40Q1301 28 1317 20" stroke="#a0b8cc" stroke-opacity="0.19" stroke-width="1.4"/><path d="M768 44Q766 37 769 32" stroke="#6e9890" stroke-opacity="0.33" stroke-width="0.8"/><path d="M1169 42Q1167 17 1170 -1" stroke="#8098b0" stroke-opacity="0.19" stroke-width="0.6"/><path d="M513 44Q510 27 496 16" stroke="#8fb0a4" stroke-opacity="0.42" stroke-width="1.1"/><path d="M948 42Q952 36 949 32" stroke="#7ca494" stroke-opacity="0.40" stroke-width="0.8"/><path d="M673 44Q679 34 688 28" stroke="#8fb0a4" stroke-opacity="0.29" stroke-width="0.8"/><path d="M846 43Q841 26 833 15" stroke="#9cbcc4" stroke-opacity="0.20" stroke-width="0.6"/><path d="M384 42Q382 22 375 8" stroke="#6e9890" stroke-opacity="0.31" stroke-width="1.2"/><path d="M985 40Q988 26 998 17" stroke="#6e9890" stroke-opacity="0.37" stroke-width="0.8"/><path d="M273 42Q277 24 278 11" stroke="#9cbcc4" stroke-opacity="0.32" stroke-width="0.8"/><path d="M1017 41Q1017 23 1031 11" stroke="#9cbcc4" stroke-opacity="0.40" stroke-width="1.4"/><path d="M260 41Q258 34 274 29" stroke="#acc8cc" stroke-opacity="0.25" stroke-width="1.4"/><path d="M574 42Q574 26 561 16" stroke="#9cbcc4" stroke-opacity="0.15" stroke-width="1.2"/><path d="M486 43Q486 20 481 5" stroke="#a0b8bc" stroke-opacity="0.24" stroke-width="1.4"/><path d="M1103 43Q1101 28 1086 18" stroke="#a0b8cc" stroke-opacity="0.26" stroke-width="0.7"/><path d="M246 44Q251 35 258 29" stroke="#8fb0a4" stroke-opacity="0.18" stroke-width="0.7"/><path d="M934 42Q931 36 919 32" stroke="#9cbcc4" stroke-opacity="0.25" stroke-width="1.2"/><path d="M8 41Q10 21 21 7" stroke="#acc8cc" stroke-opacity="0.35" stroke-width="1.5"/><path d="M828 41Q827 35 839 31" stroke="#a0b8bc" stroke-opacity="0.38" stroke-width="1.5"/><path d="M780 41Q782 34 783 29" stroke="#8fb0a4" stroke-opacity="0.23" stroke-width="1.3"/><path d="M1068 44Q1071 21 1065 6" stroke="#a0b8cc" stroke-opacity="0.22" stroke-width="1.4"/><path d="M552 41Q550 21 537 7" stroke="#7ca494" stroke-opacity="0.15" stroke-width="1.6"/><path d="M1241 44Q1238 38 1233 34" stroke="#a0b8cc" stroke-opacity="0.12" stroke-width="1.2"/><path d="M729 43Q733 33 747 26" stroke="#6e9890" stroke-opacity="0.36" stroke-width="0.6"/><path d="M843 42Q838 27 834 17" stroke="#acc8cc" stroke-opacity="0.20" stroke-width="0.6"/><path d="M348 42Q347 31 343 24" stroke="#8fb0a4" stroke-opacity="0.29" stroke-width="1.2"/><path d="M1112 43Q1109 37 1116 32" stroke="#90a8c0" stroke-opacity="0.27" stroke-width="1.0"/><path d="M1335 42Q1334 24 1336 12" stroke="#a0b8cc" stroke-opacity="0.18" stroke-width="1.1"/><path d="M819 43Q818 33 811 27" stroke="#a0b8bc" stroke-opacity="0.23" stroke-width="1.3"/><path d="M27 43Q27 21 30 7" stroke="#8fb0a4" stroke-opacity="0.33" stroke-width="1.5"/><path d="M1027 44Q1026 38 1045 34" stroke="#acc8cc" stroke-opacity="0.39" stroke-width="1.3"/><path d="M338 40Q338 19 321 5" stroke="#9cbcc4" stroke-opacity="0.40" stroke-width="1.6"/><path d="M1122 42Q1120 25 1108 13" stroke="#90a8c0" stroke-opacity="0.12" stroke-width="1.0"/><path d="M204 42Q203 29 191 21" stroke="#a0b8bc" stroke-opacity="0.32" stroke-width="1.0"/><path d="M1068 44Q1073 28 1086 17" stroke="#90a8c0" stroke-opacity="0.13" stroke-width="1.1"/><path d="M418 41Q420 25 430 15" stroke="#a0b8bc" stroke-opacity="0.35" stroke-width="1.2"/><path d="M867 41Q870 26 856 16" stroke="#a0b8bc" stroke-opacity="0.40" stroke-width="0.6"/><path d="M74 42Q71 32 72 25" stroke="#8fb0a4" stroke-opacity="0.30" stroke-width="1.4"/><path d="M1255 44Q1254 36 1246 30" stroke="#a0b8cc" stroke-opacity="0.15" stroke-width="0.9"/><path d="M1022 40Q1023 22 1007 9" stroke="#9cbcc4" stroke-opacity="0.32" stroke-width="1.0"/><path d="M1026 41Q1027 29 1013 22" stroke="#7ca494" stroke-opacity="0.31" stroke-width="1.1"/><path d="M1024 41Q1020 21 1021 8" stroke="#8fb0a4" stroke-opacity="0.39" stroke-width="1.1"/><path d="M589 42Q593 30 600 21" stroke="#7ca494" stroke-opacity="0.15" stroke-width="0.8"/><path d="M908 43Q908 37 901 33" stroke="#9cbcc4" stroke-opacity="0.23" stroke-width="0.8"/><path d="M901 41Q903 32 916 26" stroke="#a0b8bc" stroke-opacity="0.31" stroke-width="1.5"/><path d="M597 41Q595 26 590 16" stroke="#6e9890" stroke-opacity="0.40" stroke-width="0.8"/><path d="M491 42Q490 29 486 20" stroke="#6e9890" stroke-opacity="0.20" stroke-width="1.0"/><path d="M531 41Q528 33 534 27" stroke="#7ca494" stroke-opacity="0.27" stroke-width="1.4"/><path d="M297 41Q291 35 284 31" stroke="#acc8cc" stroke-opacity="0.38" stroke-width="0.7"/><path d="M748 40Q748 25 733 15" stroke="#8fb0a4" stroke-opacity="0.39" stroke-width="0.6"/><path d="M896 42Q899 36 907 32" stroke="#6e9890" stroke-opacity="0.28" stroke-width="0.9"/><path d="M626 41Q625 32 637 26" stroke="#a0b8bc" stroke-opacity="0.28" stroke-width="0.7"/><path d="M847 44Q847 39 856 35" stroke="#acc8cc" stroke-opacity="0.15" stroke-width="1.4"/><path d="M1222 42Q1224 17 1227 -0" stroke="#a0b8cc" stroke-opacity="0.24" stroke-width="1.5"/><path d="M1259 43Q1259 32 1247 26" stroke="#a0b8cc" stroke-opacity="0.14" stroke-width="1.0"/><path d="M395 41Q389 15 379 -2" stroke="#9cbcc4" stroke-opacity="0.32" stroke-width="1.5"/><path d="M1034 43Q1032 38 1033 35" stroke="#7ca494" stroke-opacity="0.20" stroke-width="0.8"/><path d="M316 41Q314 21 320 7" stroke="#9cbcc4" stroke-opacity="0.23" stroke-width="1.5"/><path d="M1289 42Q1294 24 1305 12" stroke="#a0b8cc" stroke-opacity="0.18" stroke-width="1.5"/><path d="M464 42Q464 25 481 14" stroke="#9cbcc4" stroke-opacity="0.16" stroke-width="1.4"/><path d="M524 41Q528 25 524 14" stroke="#9cbcc4" stroke-opacity="0.33" stroke-width="1.5"/><path d="M1201 41Q1201 17 1200 0" stroke="#a0b8cc" stroke-opacity="0.25" stroke-width="0.8"/><path d="M436 42Q439 32 449 25" stroke="#7ca494" stroke-opacity="0.42" stroke-width="1.1"/><path d="M63 41Q65 24 52 12" stroke="#9cbcc4" stroke-opacity="0.19" stroke-width="0.7"/><path d="M364 42Q362 22 350 8" stroke="#6e9890" stroke-opacity="0.41" stroke-width="1.1"/><path d="M691 41Q691 36 680 32" stroke="#acc8cc" stroke-opacity="0.36" stroke-width="0.8"/><path d="M743 43Q740 32 731 24" stroke="#8fb0a4" stroke-opacity="0.23" stroke-width="1.2"/><path d="M1372 40Q1367 25 1357 15" stroke="#8098b0" stroke-opacity="0.21" stroke-width="1.1"/><path d="M1330 40Q1330 22 1336 10" stroke="#90a8c0" stroke-opacity="0.22" stroke-width="0.9"/><path d="M147 43Q151 22 160 8" stroke="#9cbcc4" stroke-opacity="0.39" stroke-width="0.9"/><path d="M511 41Q509 25 504 14" stroke="#7ca494" stroke-opacity="0.33" stroke-width="0.8"/><path d="M512 41Q511 34 505 29" stroke="#acc8cc" stroke-opacity="0.32" stroke-width="1.4"/><path d="M118 43Q117 35 103 30" stroke="#acc8cc" stroke-opacity="0.20" stroke-width="0.6"/><path d="M632 40Q634 26 618 17" stroke="#8fb0a4" stroke-opacity="0.27" stroke-width="0.9"/><path d="M1131 41Q1126 16 1118 -1" stroke="#a0b8cc" stroke-opacity="0.22" stroke-width="0.9"/><path d="M561 43Q565 38 558 34" stroke="#a0b8bc" stroke-opacity="0.36" stroke-width="1.6"/><path d="M724 41Q722 33 713 27" stroke="#9cbcc4" stroke-opacity="0.30" stroke-width="1.1"/><path d="M1083 41Q1086 18 1087 3" stroke="#8098b0" stroke-opacity="0.26" stroke-width="0.8"/><path d="M838 41Q842 29 841 21" stroke="#a0b8bc" stroke-opacity="0.42" stroke-width="1.4"/><path d="M263 41Q261 16 268 -1" stroke="#6e9890" stroke-opacity="0.22" stroke-width="1.0"/><path d="M452 41Q457 34 466 30" stroke="#a0b8bc" stroke-opacity="0.27" stroke-width="0.7"/><path d="M1243 42Q1241 26 1245 15" stroke="#a0b8cc" stroke-opacity="0.26" stroke-width="1.2"/><path d="M160 44Q157 21 152 6" stroke="#9cbcc4" stroke-opacity="0.30" stroke-width="0.8"/><path d="M749 41Q751 35 732 31" stroke="#a0b8bc" stroke-opacity="0.40" stroke-width="0.7"/><path d="M1038 42Q1041 23 1053 11" stroke="#9cbcc4" stroke-opacity="0.36" stroke-width="0.8"/><path d="M639 42Q635 36 635 31" stroke="#7ca494" stroke-opacity="0.29" stroke-width="0.8"/><path d="M1281 43Q1285 37 1292 33" stroke="#a0b8cc" stroke-opacity="0.16" stroke-width="1.2"/><path d="M641 43Q644 33 646 26" stroke="#acc8cc" stroke-opacity="0.35" stroke-width="1.5"/><path d="M632 43Q630 27 639 15" stroke="#6e9890" stroke-opacity="0.18" stroke-width="0.9"/><path d="M712 44Q707 33 695 26" stroke="#acc8cc" stroke-opacity="0.32" stroke-width="1.3"/><path d="M818 42Q814 28 811 18" stroke="#acc8cc" stroke-opacity="0.18" stroke-width="0.8"/><path d="M1200 40Q1203 15 1199 -3" stroke="#8098b0" stroke-opacity="0.19" stroke-width="1.0"/><path d="M317 44Q320 38 332 33" stroke="#acc8cc" stroke-opacity="0.38" stroke-width="1.2"/><path d="M217 40Q214 22 215 9" stroke="#9cbcc4" stroke-opacity="0.29" stroke-width="0.7"/><path d="M735 41Q731 24 717 12" stroke="#8fb0a4" stroke-opacity="0.24" stroke-width="1.0"/><path d="M614 43Q610 31 601 23" stroke="#acc8cc" stroke-opacity="0.23" stroke-width="1.5"/><path d="M417 44Q419 28 432 18" stroke="#7ca494" stroke-opacity="0.21" stroke-width="1.5"/><path d="M950 43Q952 38 943 34" stroke="#a0b8bc" stroke-opacity="0.15" stroke-width="1.5"/><path d="M1370 41Q1373 33 1374 28" stroke="#90a8c0" stroke-opacity="0.09" stroke-width="0.9"/><path d="M1123 42Q1125 16 1115 -1" stroke="#a0b8cc" stroke-opacity="0.15" stroke-width="1.0"/><path d="M225 43Q221 19 211 4" stroke="#6e9890" stroke-opacity="0.34" stroke-width="1.3"/><path d="M1086 44Q1087 31 1091 22" stroke="#a0b8cc" stroke-opacity="0.13" stroke-width="1.5"/><path d="M240 43Q238 33 227 27" stroke="#6e9890" stroke-opacity="0.17" stroke-width="0.7"/><path d="M1248 42Q1248 37 1251 34" stroke="#90a8c0" stroke-opacity="0.19" stroke-width="0.9"/><path d="M1037 42Q1034 33 1029 27" stroke="#8fb0a4" stroke-opacity="0.39" stroke-width="1.2"/><path d="M1260 44Q1254 26 1242 15" stroke="#8098b0" stroke-opacity="0.09" stroke-width="1.5"/><path d="M435 41Q435 26 418 16" stroke="#6e9890" stroke-opacity="0.32" stroke-width="1.3"/><path d="M727 40Q728 28 737 19" stroke="#6e9890" stroke-opacity="0.33" stroke-width="1.4"/><path d="M1080 42Q1077 20 1071 5" stroke="#a0b8cc" stroke-opacity="0.20" stroke-width="0.9"/><path d="M271 42Q271 16 255 -1" stroke="#6e9890" stroke-opacity="0.24" stroke-width="0.6"/><path d="M678 41Q680 31 676 23" stroke="#9cbcc4" stroke-opacity="0.17" stroke-width="1.2"/><path d="M743 41Q740 25 733 15" stroke="#7ca494" stroke-opacity="0.16" stroke-width="1.4"/><path d="M1014 42Q1016 24 1023 12" stroke="#acc8cc" stroke-opacity="0.29" stroke-width="0.9"/><path d="M211 43Q210 23 223 10" stroke="#7ca494" stroke-opacity="0.26" stroke-width="1.3"/><path d="M965 43Q964 26 952 14" stroke="#a0b8bc" stroke-opacity="0.19" stroke-width="1.1"/><path d="M1022 44Q1018 38 1013 34" stroke="#7ca494" stroke-opacity="0.26" stroke-width="1.1"/><path d="M1287 43Q1291 17 1293 -0" stroke="#a0b8cc" stroke-opacity="0.20" stroke-width="0.9"/><path d="M755 44Q754 36 754 30" stroke="#6e9890" stroke-opacity="0.24" stroke-width="0.8"/><path d="M212 43Q216 26 230 14" stroke="#6e9890" stroke-opacity="0.40" stroke-width="1.5"/><path d="M236 41Q237 17 251 2" stroke="#acc8cc" stroke-opacity="0.16" stroke-width="0.9"/><path d="M244 41Q240 24 232 13" stroke="#7ca494" stroke-opacity="0.28" stroke-width="1.1"/><path d="M669 42Q668 29 658 20" stroke="#8fb0a4" stroke-opacity="0.26" stroke-width="1.3"/><path d="M493 41Q488 30 476 23" stroke="#a0b8bc" stroke-opacity="0.26" stroke-width="1.3"/><path d="M362 44Q359 31 350 23" stroke="#a0b8bc" stroke-opacity="0.36" stroke-width="1.4"/><path d="M155 42Q160 15 167 -2" stroke="#7ca494" stroke-opacity="0.25" stroke-width="1.4"/><path d="M710 41Q706 35 706 32" stroke="#6e9890" stroke-opacity="0.19" stroke-width="0.7"/><path d="M279 43Q279 29 278 20" stroke="#7ca494" stroke-opacity="0.30" stroke-width="1.3"/><path d="M913 41Q913 34 903 30" stroke="#acc8cc" stroke-opacity="0.26" stroke-width="1.1"/><path d="M483 42Q479 35 478 31" stroke="#a0b8bc" stroke-opacity="0.38" stroke-width="1.2"/><path d="M774 41Q778 26 792 15" stroke="#9cbcc4" stroke-opacity="0.40" stroke-width="1.2"/><path d="M480 41Q484 34 490 29" stroke="#acc8cc" stroke-opacity="0.22" stroke-width="0.7"/><path d="M673 41Q677 30 689 22" stroke="#acc8cc" stroke-opacity="0.21" stroke-width="0.8"/><path d="M1055 42Q1058 31 1062 24" stroke="#9cbcc4" stroke-opacity="0.40" stroke-width="1.1"/><path d="M346 44Q348 20 339 5" stroke="#8fb0a4" stroke-opacity="0.18" stroke-width="1.5"/><path d="M367 41Q371 28 379 20" stroke="#8fb0a4" stroke-opacity="0.39" stroke-width="0.6"/><path d="M471 41Q473 17 473 1" stroke="#acc8cc" stroke-opacity="0.20" stroke-width="1.0"/><path d="M463 43Q458 19 446 3" stroke="#8fb0a4" stroke-opacity="0.17" stroke-width="1.2"/><path d="M560 43Q561 30 552 20" stroke="#acc8cc" stroke-opacity="0.25" stroke-width="0.6"/><path d="M178 41Q181 26 171 15" stroke="#9cbcc4" stroke-opacity="0.19" stroke-width="0.9"/><path d="M348 44Q352 34 349 28" stroke="#6e9890" stroke-opacity="0.15" stroke-width="1.1"/><path d="M891 42Q894 30 896 22" stroke="#7ca494" stroke-opacity="0.41" stroke-width="0.9"/><path d="M134 41Q135 36 145 32" stroke="#9cbcc4" stroke-opacity="0.19" stroke-width="1.4"/><path d="M211 42Q210 24 211 12" stroke="#a0b8bc" stroke-opacity="0.23" stroke-width="1.3"/><path d="M681 43Q683 29 676 21" stroke="#8fb0a4" stroke-opacity="0.35" stroke-width="1.6"/><path d="M1124 43Q1123 19 1117 4" stroke="#90a8c0" stroke-opacity="0.22" stroke-width="0.8"/><path d="M1191 41Q1188 17 1175 2" stroke="#a0b8cc" stroke-opacity="0.24" stroke-width="0.9"/><path d="M870 41Q874 31 876 25" stroke="#6e9890" stroke-opacity="0.21" stroke-width="1.4"/><path d="M777 42Q780 32 784 25" stroke="#9cbcc4" stroke-opacity="0.37" stroke-width="0.8"/><path d="M851 44Q852 35 856 29" stroke="#9cbcc4" stroke-opacity="0.34" stroke-width="0.9"/><path d="M366 42Q368 31 372 24" stroke="#9cbcc4" stroke-opacity="0.19" stroke-width="1.3"/><path d="M154 43Q157 37 146 33" stroke="#7ca494" stroke-opacity="0.18" stroke-width="1.5"/><path d="M1144 40Q1142 17 1132 1" stroke="#8098b0" stroke-opacity="0.25" stroke-width="0.9"/><path d="M533 44Q533 26 542 14" stroke="#6e9890" stroke-opacity="0.34" stroke-width="0.9"/><path d="M1191 42Q1196 28 1203 18" stroke="#a0b8cc" stroke-opacity="0.26" stroke-width="0.7"/><path d="M439 41Q440 35 441 32" stroke="#9cbcc4" stroke-opacity="0.22" stroke-width="0.7"/><path d="M269 41Q265 24 271 13" stroke="#a0b8bc" stroke-opacity="0.36" stroke-width="0.7"/><path d="M243 41Q249 26 261 15" stroke="#acc8cc" stroke-opacity="0.28" stroke-width="1.0"/><path d="M766 42Q767 30 756 22" stroke="#9cbcc4" stroke-opacity="0.22" stroke-width="1.5"/><path d="M1188 43Q1190 17 1186 -0" stroke="#90a8c0" stroke-opacity="0.12" stroke-width="1.5"/><path d="M737 40Q736 26 729 17" stroke="#acc8cc" stroke-opacity="0.17" stroke-width="0.6"/><path d="M281 42Q281 17 264 -0" stroke="#a0b8bc" stroke-opacity="0.36" stroke-width="1.1"/><path d="M417 43Q420 27 423 16" stroke="#acc8cc" stroke-opacity="0.40" stroke-width="1.0"/><path d="M967 40Q970 32 982 27" stroke="#acc8cc" stroke-opacity="0.21" stroke-width="1.3"/><path d="M692 43Q694 34 709 28" stroke="#8fb0a4" stroke-opacity="0.23" stroke-width="1.5"/><path d="M436 43Q433 36 430 32" stroke="#6e9890" stroke-opacity="0.35" stroke-width="0.9"/><path d="M275 41Q271 29 263 21" stroke="#acc8cc" stroke-opacity="0.16" stroke-width="1.1"/><path d="M549 44Q547 32 550 24" stroke="#7ca494" stroke-opacity="0.39" stroke-width="0.7"/><path d="M806 42Q809 29 800 21" stroke="#a0b8bc" stroke-opacity="0.28" stroke-width="1.5"/><path d="M1116 44Q1119 37 1112 33" stroke="#8098b0" stroke-opacity="0.24" stroke-width="1.6"/><path d="M195 43Q192 24 191 12" stroke="#acc8cc" stroke-opacity="0.32" stroke-width="1.5"/><path d="M861 40Q864 29 864 21" stroke="#acc8cc" stroke-opacity="0.34" stroke-width="1.0"/><path d="M638 42Q638 26 638 15" stroke="#8fb0a4" stroke-opacity="0.16" stroke-width="1.1"/><path d="M616 40Q612 32 600 26" stroke="#7ca494" stroke-opacity="0.29" stroke-width="1.6"/><path d="M1013 44Q1013 34 1021 27" stroke="#9cbcc4" stroke-opacity="0.38" stroke-width="1.4"/><path d="M1234 44Q1234 36 1222 32" stroke="#90a8c0" stroke-opacity="0.11" stroke-width="1.4"/><path d="M699 43Q698 26 683 14" stroke="#7ca494" stroke-opacity="0.22" stroke-width="1.1"/><path d="M733 41Q733 25 722 14" stroke="#6e9890" stroke-opacity="0.17" stroke-width="1.0"/><path d="M1039 42Q1033 22 1024 9" stroke="#8fb0a4" stroke-opacity="0.38" stroke-width="1.4"/><path d="M200 40Q197 27 186 19" stroke="#7ca494" stroke-opacity="0.38" stroke-width="0.7"/><path d="M242 42Q247 29 254 20" stroke="#a0b8bc" stroke-opacity="0.17" stroke-width="0.8"/><path d="M862 41Q865 24 870 14" stroke="#8fb0a4" stroke-opacity="0.27" stroke-width="1.4"/><path d="M960 43Q960 27 976 16" stroke="#9cbcc4" stroke-opacity="0.21" stroke-width="0.8"/><path d="M795 41Q792 36 787 32" stroke="#7ca494" stroke-opacity="0.32" stroke-width="0.8"/><path d="M1369 41Q1369 26 1377 15" stroke="#90a8c0" stroke-opacity="0.16" stroke-width="0.7"/><path d="M358 41Q356 28 363 20" stroke="#8fb0a4" stroke-opacity="0.18" stroke-width="0.9"/><path d="M965 41Q969 33 968 28" stroke="#8fb0a4" stroke-opacity="0.23" stroke-width="1.3"/><path d="M621 43Q621 26 616 14" stroke="#8fb0a4" stroke-opacity="0.27" stroke-width="1.0"/><path d="M452 41Q454 24 458 12" stroke="#6e9890" stroke-opacity="0.15" stroke-width="0.8"/><path d="M560 41Q562 34 575 30" stroke="#6e9890" stroke-opacity="0.24" stroke-width="0.7"/><path d="M901 43Q896 32 891 25" stroke="#6e9890" stroke-opacity="0.16" stroke-width="1.3"/><path d="M467 40Q470 16 483 -0" stroke="#7ca494" stroke-opacity="0.28" stroke-width="0.8"/><path d="M691 40Q690 29 696 22" stroke="#acc8cc" stroke-opacity="0.16" stroke-width="1.0"/><path d="M309 40Q311 24 295 13" stroke="#a0b8bc" stroke-opacity="0.33" stroke-width="1.5"/><path d="M708 43Q708 31 708 22" stroke="#8fb0a4" stroke-opacity="0.18" stroke-width="0.6"/><path d="M1318 44Q1321 28 1329 18" stroke="#a0b8cc" stroke-opacity="0.27" stroke-width="1.4"/><path d="M156 43Q157 29 138 19" stroke="#8fb0a4" stroke-opacity="0.39" stroke-width="0.7"/><path d="M562 43Q562 31 579 23" stroke="#6e9890" stroke-opacity="0.42" stroke-width="0.7"/><path d="M777 42Q773 36 762 31" stroke="#9cbcc4" stroke-opacity="0.36" stroke-width="1.2"/><path d="M636 41Q634 23 640 11" stroke="#8fb0a4" stroke-opacity="0.19" stroke-width="1.4"/><path d="M688 41Q690 34 691 30" stroke="#a0b8bc" stroke-opacity="0.41" stroke-width="1.6"/><path d="M563 43Q563 38 550 35" stroke="#9cbcc4" stroke-opacity="0.34" stroke-width="0.9"/><path d="M847 44Q848 34 847 27" stroke="#8fb0a4" stroke-opacity="0.36" stroke-width="1.0"/><path d="M405 43Q405 33 406 27" stroke="#9cbcc4" stroke-opacity="0.39" stroke-width="1.3"/><path d="M1219 42Q1223 17 1221 -0" stroke="#a0b8cc" stroke-opacity="0.16" stroke-width="0.9"/><path d="M821 43Q818 35 806 30" stroke="#7ca494" stroke-opacity="0.33" stroke-width="1.1"/><path d="M59 42Q57 19 43 4" stroke="#9cbcc4" stroke-opacity="0.26" stroke-width="1.3"/><path d="M978 44Q978 39 973 35" stroke="#a0b8bc" stroke-opacity="0.29" stroke-width="0.6"/><path d="M554 42Q555 17 536 -0" stroke="#6e9890" stroke-opacity="0.25" stroke-width="1.3"/><path d="M1154 40Q1153 31 1164 25" stroke="#a0b8cc" stroke-opacity="0.10" stroke-width="0.7"/><path d="M119 43Q117 33 110 26" stroke="#acc8cc" stroke-opacity="0.38" stroke-width="0.7"/><path d="M783 41Q781 35 779 31" stroke="#9cbcc4" stroke-opacity="0.16" stroke-width="1.4"/><path d="M1083 43Q1077 24 1067 12" stroke="#8098b0" stroke-opacity="0.20" stroke-width="0.7"/><path d="M461 43Q460 22 466 9" stroke="#a0b8bc" stroke-opacity="0.30" stroke-width="1.1"/><path d="M455 43Q455 25 470 13" stroke="#a0b8bc" stroke-opacity="0.17" stroke-width="1.4"/><path d="M514 40Q512 26 511 16" stroke="#8fb0a4" stroke-opacity="0.35" stroke-width="1.4"/><path d="M1316 43Q1319 32 1328 26" stroke="#8098b0" stroke-opacity="0.16" stroke-width="1.6"/><path d="M766 42Q765 25 756 13" stroke="#8fb0a4" stroke-opacity="0.38" stroke-width="0.8"/><path d="M370 44Q370 30 384 21" stroke="#acc8cc" stroke-opacity="0.34" stroke-width="1.1"/><path d="M946 40Q949 30 956 24" stroke="#6e9890" stroke-opacity="0.19" stroke-width="0.9"/><path d="M10 42Q14 19 16 4" stroke="#acc8cc" stroke-opacity="0.33" stroke-width="1.2"/><path d="M1157 42Q1162 29 1160 21" stroke="#8098b0" stroke-opacity="0.15" stroke-width="1.1"/><path d="M866 40Q869 31 863 24" stroke="#7ca494" stroke-opacity="0.37" stroke-width="1.0"/><path d="M983 42Q987 32 987 25" stroke="#acc8cc" stroke-opacity="0.40" stroke-width="1.0"/><path d="M153 43Q154 34 157 28" stroke="#a0b8bc" stroke-opacity="0.19" stroke-width="1.0"/><path d="M211 42Q215 26 211 16" stroke="#7ca494" stroke-opacity="0.25" stroke-width="0.7"/><path d="M1077 42Q1076 33 1066 26" stroke="#90a8c0" stroke-opacity="0.10" stroke-width="1.2"/><path d="M1237 41Q1241 17 1243 0" stroke="#a0b8cc" stroke-opacity="0.22" stroke-width="1.2"/><path d="M1141 41Q1137 15 1127 -2" stroke="#8098b0" stroke-opacity="0.26" stroke-width="0.9"/><path d="M340 41Q339 33 340 28" stroke="#6e9890" stroke-opacity="0.22" stroke-width="0.8"/><path d="M530 41Q527 18 532 3" stroke="#9cbcc4" stroke-opacity="0.37" stroke-width="1.1"/><path d="M905 41Q903 24 915 13" stroke="#7ca494" stroke-opacity="0.40" stroke-width="1.3"/><path d="M742 41Q741 30 749 23" stroke="#7ca494" stroke-opacity="0.32" stroke-width="1.2"/><path d="M473 40Q479 31 490 24" stroke="#8fb0a4" stroke-opacity="0.33" stroke-width="0.9"/><path d="M-6 41Q-5 16 10 -1" stroke="#9cbcc4" stroke-opacity="0.25" stroke-width="0.7"/><path d="M914 42Q915 37 897 33" stroke="#6e9890" stroke-opacity="0.33" stroke-width="1.1"/><path d="M595 43Q594 29 580 20" stroke="#a0b8bc" stroke-opacity="0.40" stroke-width="0.7"/><path d="M183 40Q188 31 190 25" stroke="#8fb0a4" stroke-opacity="0.39" stroke-width="0.7"/><path d="M406 44Q411 32 413 24" stroke="#9cbcc4" stroke-opacity="0.41" stroke-width="1.5"/><path d="M1286 42Q1287 37 1285 34" stroke="#8098b0" stroke-opacity="0.20" stroke-width="0.9"/><path d="M225 44Q220 22 213 8" stroke="#7ca494" stroke-opacity="0.23" stroke-width="1.6"/><path d="M23 43Q25 37 35 34" stroke="#a0b8bc" stroke-opacity="0.31" stroke-width="1.4"/><path d="M-9 44Q-5 38 2 33" stroke="#7ca494" stroke-opacity="0.26" stroke-width="0.8"/><path d="M533 40Q531 16 524 -0" stroke="#6e9890" stroke-opacity="0.35" stroke-width="1.3"/><path d="M620 41Q620 33 634 28" stroke="#acc8cc" stroke-opacity="0.22" stroke-width="0.8"/><path d="M1263 42Q1265 34 1270 28" stroke="#8098b0" stroke-opacity="0.19" stroke-width="1.5"/><path d="M246 41Q246 32 239 25" stroke="#9cbcc4" stroke-opacity="0.33" stroke-width="1.1"/><path d="M99 41Q97 20 90 5" stroke="#7ca494" stroke-opacity="0.42" stroke-width="1.3"/><path d="M87 44Q88 38 99 33" stroke="#9cbcc4" stroke-opacity="0.33" stroke-width="0.9"/><path d="M1086 42Q1086 29 1078 21" stroke="#90a8c0" stroke-opacity="0.18" stroke-width="0.7"/><path d="M36 41Q32 15 33 -2" stroke="#acc8cc" stroke-opacity="0.19" stroke-width="1.6"/><path d="M1281 41Q1285 28 1297 20" stroke="#90a8c0" stroke-opacity="0.27" stroke-width="0.8"/><path d="M962 44Q966 36 975 30" stroke="#a0b8bc" stroke-opacity="0.25" stroke-width="0.7"/><path d="M368 41Q365 16 353 -1" stroke="#7ca494" stroke-opacity="0.16" stroke-width="0.9"/><path d="M797 43Q797 35 798 29" stroke="#7ca494" stroke-opacity="0.37" stroke-width="1.5"/><path d="M103 41Q103 32 88 25" stroke="#6e9890" stroke-opacity="0.40" stroke-width="0.8"/><path d="M1328 42Q1329 27 1313 17" stroke="#a0b8cc" stroke-opacity="0.20" stroke-width="1.2"/><path d="M1163 44Q1165 29 1151 19" stroke="#8098b0" stroke-opacity="0.08" stroke-width="1.0"/><path d="M62 43Q58 35 50 29" stroke="#9cbcc4" stroke-opacity="0.16" stroke-width="1.0"/><path d="M1323 40Q1319 26 1307 16" stroke="#90a8c0" stroke-opacity="0.11" stroke-width="0.9"/><path d="M1165 41Q1168 24 1172 13" stroke="#90a8c0" stroke-opacity="0.11" stroke-width="1.5"/><path d="M795 42Q794 32 797 25" stroke="#9cbcc4" stroke-opacity="0.40" stroke-width="1.3"/><path d="M852 42Q853 25 858 14" stroke="#9cbcc4" stroke-opacity="0.40" stroke-width="1.5"/><path d="M425 43Q423 26 421 15" stroke="#a0b8bc" stroke-opacity="0.32" stroke-width="1.3"/><path d="M471 44Q471 27 471 16" stroke="#8fb0a4" stroke-opacity="0.25" stroke-width="1.3"/><path d="M546 42Q544 27 558 16" stroke="#a0b8bc" stroke-opacity="0.24" stroke-width="1.1"/><path d="M879 42Q874 24 871 12" stroke="#9cbcc4" stroke-opacity="0.37" stroke-width="1.2"/><path d="M542 43Q538 37 531 33" stroke="#8fb0a4" stroke-opacity="0.25" stroke-width="1.5"/><path d="M669 43Q668 32 661 25" stroke="#9cbcc4" stroke-opacity="0.24" stroke-width="1.2"/><path d="M946 43Q942 32 939 25" stroke="#a0b8bc" stroke-opacity="0.22" stroke-width="1.3"/><path d="M1112 43Q1109 21 1100 6" stroke="#90a8c0" stroke-opacity="0.13" stroke-width="1.6"/><path d="M902 43Q902 32 907 24" stroke="#8fb0a4" stroke-opacity="0.40" stroke-width="1.6"/><path d="M211 42Q208 31 204 24" stroke="#7ca494" stroke-opacity="0.31" stroke-width="1.6"/><path d="M853 40Q857 34 861 29" stroke="#8fb0a4" stroke-opacity="0.36" stroke-width="1.2"/><path d="M1298 42Q1296 23 1297 11" stroke="#90a8c0" stroke-opacity="0.08" stroke-width="1.1"/><path d="M1347 40Q1345 32 1351 26" stroke="#a0b8cc" stroke-opacity="0.17" stroke-width="0.9"/><path d="M250 44Q249 25 256 12" stroke="#8fb0a4" stroke-opacity="0.40" stroke-width="0.9"/><path d="M1310 43Q1311 29 1326 19" stroke="#8098b0" stroke-opacity="0.14" stroke-width="1.6"/><path d="M81 40Q84 33 89 29" stroke="#7ca494" stroke-opacity="0.29" stroke-width="0.8"/><path d="M795 40Q790 32 789 27" stroke="#6e9890" stroke-opacity="0.25" stroke-width="1.5"/><path d="M1177 44Q1178 27 1167 17" stroke="#90a8c0" stroke-opacity="0.26" stroke-width="0.7"/><path d="M590 42Q593 28 600 19" stroke="#7ca494" stroke-opacity="0.40" stroke-width="1.2"/><path d="M572 41Q573 36 557 32" stroke="#9cbcc4" stroke-opacity="0.32" stroke-width="1.2"/><path d="M368 41Q371 21 376 7" stroke="#a0b8bc" stroke-opacity="0.32" stroke-width="0.7"/><path d="M74 41Q75 15 90 -2" stroke="#6e9890" stroke-opacity="0.39" stroke-width="0.7"/><path d="M363 41Q362 21 361 8" stroke="#a0b8bc" stroke-opacity="0.30" stroke-width="0.8"/><path d="M1119 42Q1118 32 1133 25" stroke="#90a8c0" stroke-opacity="0.19" stroke-width="0.7"/><path d="M646 42Q644 37 631 33" stroke="#9cbcc4" stroke-opacity="0.18" stroke-width="1.5"/><path d="M664 44Q660 31 658 23" stroke="#9cbcc4" stroke-opacity="0.23" stroke-width="1.4"/><path d="M989 43Q988 31 998 23" stroke="#8fb0a4" stroke-opacity="0.16" stroke-width="1.3"/><path d="M611 42Q610 32 609 26" stroke="#acc8cc" stroke-opacity="0.32" stroke-width="1.5"/><path d="M852 43Q854 37 861 33" stroke="#a0b8bc" stroke-opacity="0.33" stroke-width="1.5"/><path d="M1343 43Q1345 26 1340 14" stroke="#8098b0" stroke-opacity="0.14" stroke-width="1.2"/><path d="M819 41Q817 23 817 11" stroke="#8fb0a4" stroke-opacity="0.31" stroke-width="1.1"/><path d="M1348 40Q1349 30 1356 23" stroke="#a0b8cc" stroke-opacity="0.23" stroke-width="0.7"/><path d="M516 44Q517 20 509 5" stroke="#acc8cc" stroke-opacity="0.27" stroke-width="1.2"/><path d="M1128 42Q1129 19 1124 4" stroke="#8098b0" stroke-opacity="0.23" stroke-width="1.0"/><path d="M653 42Q651 33 659 28" stroke="#6e9890" stroke-opacity="0.16" stroke-width="0.9"/><path d="M997 42Q996 25 989 13" stroke="#9cbcc4" stroke-opacity="0.28" stroke-width="1.5"/><path d="M1090 44Q1093 28 1089 18" stroke="#90a8c0" stroke-opacity="0.22" stroke-width="1.2"/><path d="M628 42Q634 30 646 23" stroke="#8fb0a4" stroke-opacity="0.25" stroke-width="0.7"/><path d="M406 43Q406 24 413 10" stroke="#7ca494" stroke-opacity="0.22" stroke-width="1.2"/><path d="M702 42Q704 30 698 22" stroke="#6e9890" stroke-opacity="0.32" stroke-width="0.8"/><path d="M237 43Q236 36 222 31" stroke="#acc8cc" stroke-opacity="0.22" stroke-width="0.7"/><path d="M797 41Q797 28 790 19" stroke="#7ca494" stroke-opacity="0.25" stroke-width="0.9"/><path d="M1207 41Q1207 32 1207 25" stroke="#8098b0" stroke-opacity="0.24" stroke-width="0.9"/><path d="M690 42Q689 33 692 27" stroke="#7ca494" stroke-opacity="0.32" stroke-width="1.4"/><path d="M1219 42Q1219 34 1208 28" stroke="#8098b0" stroke-opacity="0.17" stroke-width="1.3"/><path d="M289 41Q290 17 303 1" stroke="#a0b8bc" stroke-opacity="0.21" stroke-width="1.3"/><path d="M1168 43Q1173 22 1178 8" stroke="#a0b8cc" stroke-opacity="0.08" stroke-width="0.6"/><path d="M479 43Q476 17 483 -0" stroke="#8fb0a4" stroke-opacity="0.18" stroke-width="1.5"/><path d="M842 41Q841 29 825 20" stroke="#7ca494" stroke-opacity="0.16" stroke-width="0.8"/><path d="M18 44Q14 34 1 27" stroke="#7ca494" stroke-opacity="0.15" stroke-width="0.9"/><path d="M811 43Q808 35 797 29" stroke="#7ca494" stroke-opacity="0.29" stroke-width="1.1"/><path d="M1210 42Q1213 18 1221 2" stroke="#a0b8cc" stroke-opacity="0.13" stroke-width="1.0"/><path d="M358 44Q361 30 361 20" stroke="#7ca494" stroke-opacity="0.38" stroke-width="0.6"/><path d="M407 42Q407 37 418 33" stroke="#6e9890" stroke-opacity="0.20" stroke-width="1.3"/><path d="M949 42Q949 27 947 17" stroke="#a0b8bc" stroke-opacity="0.39" stroke-width="1.5"/><path d="M1148 44Q1147 37 1139 33" stroke="#a0b8cc" stroke-opacity="0.18" stroke-width="0.6"/><path d="M391 42Q390 30 407 21" stroke="#acc8cc" stroke-opacity="0.38" stroke-width="1.3"/><path d="M1031 44Q1034 31 1048 23" stroke="#8fb0a4" stroke-opacity="0.30" stroke-width="1.2"/><path d="M230 43Q230 28 244 18" stroke="#6e9890" stroke-opacity="0.27" stroke-width="1.4"/><path d="M1362 40Q1364 21 1366 8" stroke="#8098b0" stroke-opacity="0.26" stroke-width="0.7"/><path d="M1046 42Q1045 32 1062 25" stroke="#7ca494" stroke-opacity="0.32" stroke-width="0.8"/><path d="M1094 41Q1094 32 1082 25" stroke="#90a8c0" stroke-opacity="0.22" stroke-width="1.2"/><path d="M1016 44Q1019 24 1021 11" stroke="#a0b8bc" stroke-opacity="0.39" stroke-width="0.8"/><path d="M870 40Q873 27 886 19" stroke="#a0b8bc" stroke-opacity="0.25" stroke-width="0.9"/><path d="M981 44Q979 37 981 32" stroke="#9cbcc4" stroke-opacity="0.23" stroke-width="1.3"/><path d="M81 41Q83 32 72 26" stroke="#a0b8bc" stroke-opacity="0.34" stroke-width="1.3"/><path d="M860 42Q858 32 868 26" stroke="#acc8cc" stroke-opacity="0.28" stroke-width="0.7"/><path d="M341 42Q341 35 336 30" stroke="#6e9890" stroke-opacity="0.26" stroke-width="1.2"/><path d="M833 43Q831 35 815 30" stroke="#acc8cc" stroke-opacity="0.32" stroke-width="0.8"/><path d="M994 40Q994 34 1007 30" stroke="#acc8cc" stroke-opacity="0.28" stroke-width="1.2"/><path d="M1024 40Q1027 23 1032 11" stroke="#9cbcc4" stroke-opacity="0.19" stroke-width="1.2"/><path d="M1232 41Q1235 31 1237 24" stroke="#a0b8cc" stroke-opacity="0.11" stroke-width="1.2"/><path d="M1260 41Q1255 36 1246 32" stroke="#90a8c0" stroke-opacity="0.10" stroke-width="0.7"/><path d="M714 43Q715 37 726 34" stroke="#a0b8bc" stroke-opacity="0.25" stroke-width="1.1"/><path d="M528 42Q523 27 511 17" stroke="#8fb0a4" stroke-opacity="0.24" stroke-width="1.0"/><path d="M1083 41Q1083 18 1076 2" stroke="#8098b0" stroke-opacity="0.11" stroke-width="1.5"/><path d="M1271 41Q1271 34 1277 29" stroke="#90a8c0" stroke-opacity="0.13" stroke-width="1.3"/><path d="M1272 43Q1273 35 1268 29" stroke="#90a8c0" stroke-opacity="0.10" stroke-width="1.3"/><path d="M1190 44Q1194 31 1194 23" stroke="#a0b8cc" stroke-opacity="0.20" stroke-width="1.6"/><path d="M1153 41Q1155 22 1170 9" stroke="#90a8c0" stroke-opacity="0.19" stroke-width="1.4"/><path d="M899 41Q903 30 901 23" stroke="#7ca494" stroke-opacity="0.26" stroke-width="1.0"/><path d="M1178 41Q1178 15 1170 -2" stroke="#a0b8cc" stroke-opacity="0.12" stroke-width="0.8"/><path d="M762 40Q755 31 744 25" stroke="#7ca494" stroke-opacity="0.24" stroke-width="1.1"/><path d="M693 44Q695 39 690 35" stroke="#acc8cc" stroke-opacity="0.20" stroke-width="1.5"/><path d="M1286 42Q1284 28 1280 18" stroke="#a0b8cc" stroke-opacity="0.23" stroke-width="1.1"/><path d="M848 44Q845 27 853 16" stroke="#a0b8bc" stroke-opacity="0.31" stroke-width="0.6"/><path d="M564 42Q566 35 572 30" stroke="#8fb0a4" stroke-opacity="0.41" stroke-width="1.0"/><path d="M1284 41Q1283 33 1290 28" stroke="#a0b8cc" stroke-opacity="0.17" stroke-width="1.5"/><path d="M70 40Q70 22 69 9" stroke="#9cbcc4" stroke-opacity="0.38" stroke-width="1.1"/><path d="M168 41Q166 24 179 12" stroke="#a0b8bc" stroke-opacity="0.33" stroke-width="1.0"/><path d="M581 40Q580 27 571 18" stroke="#acc8cc" stroke-opacity="0.24" stroke-width="1.4"/><path d="M867 42Q863 31 849 24" stroke="#6e9890" stroke-opacity="0.31" stroke-width="0.8"/><path d="M359 41Q355 25 354 14" stroke="#a0b8bc" stroke-opacity="0.41" stroke-width="0.9"/><path d="M622 42Q627 30 633 22" stroke="#acc8cc" stroke-opacity="0.28" stroke-width="1.3"/><path d="M1175 43Q1173 36 1161 32" stroke="#90a8c0" stroke-opacity="0.27" stroke-width="1.0"/><path d="M778 41Q778 34 769 30" stroke="#acc8cc" stroke-opacity="0.23" stroke-width="1.5"/><path d="M286 42Q285 37 299 34" stroke="#a0b8bc" stroke-opacity="0.19" stroke-width="1.3"/><path d="M775 41Q778 34 769 29" stroke="#8fb0a4" stroke-opacity="0.23" stroke-width="0.9"/><path d="M189 40Q189 18 175 4" stroke="#9cbcc4" stroke-opacity="0.28" stroke-width="1.4"/><path d="M1253 41Q1252 33 1253 27" stroke="#90a8c0" stroke-opacity="0.23" stroke-width="1.0"/><path d="M208 40Q206 26 196 16" stroke="#8fb0a4" stroke-opacity="0.40" stroke-width="1.4"/><path d="M321 42Q319 19 321 4" stroke="#6e9890" stroke-opacity="0.20" stroke-width="0.9"/><path d="M223 41Q224 20 233 7" stroke="#a0b8bc" stroke-opacity="0.34" stroke-width="0.8"/><path d="M77 41Q75 25 67 15" stroke="#acc8cc" stroke-opacity="0.38" stroke-width="1.0"/><path d="M501 42Q501 34 518 28" stroke="#6e9890" stroke-opacity="0.34" stroke-width="1.1"/><path d="M1347 43Q1348 25 1357 14" stroke="#a0b8cc" stroke-opacity="0.13" stroke-width="1.5"/><path d="M1074 42Q1073 34 1065 29" stroke="#8098b0" stroke-opacity="0.13" stroke-width="1.3"/><path d="M1159 41Q1159 28 1164 19" stroke="#90a8c0" stroke-opacity="0.10" stroke-width="1.5"/><path d="M410 41Q409 28 396 19" stroke="#8fb0a4" stroke-opacity="0.39" stroke-width="1.1"/><path d="M1068 40Q1067 25 1053 15" stroke="#a0b8cc" stroke-opacity="0.27" stroke-width="1.5"/><path d="M1107 41Q1108 29 1106 22" stroke="#a0b8cc" stroke-opacity="0.24" stroke-width="0.8"/><path d="M156 42Q154 36 167 32" stroke="#6e9890" stroke-opacity="0.27" stroke-width="1.1"/><path d="M432 41Q428 25 429 14" stroke="#a0b8bc" stroke-opacity="0.32" stroke-width="1.2"/><path d="M165 42Q159 20 150 5" stroke="#acc8cc" stroke-opacity="0.17" stroke-width="1.2"/><path d="M405 41Q400 30 397 22" stroke="#8fb0a4" stroke-opacity="0.27" stroke-width="1.1"/><path d="M1068 42Q1065 23 1056 10" stroke="#8098b0" stroke-opacity="0.18" stroke-width="1.5"/><path d="M833 42Q837 26 842 16" stroke="#9cbcc4" stroke-opacity="0.35" stroke-width="1.6"/><path d="M1069 41Q1067 33 1056 29" stroke="#8098b0" stroke-opacity="0.21" stroke-width="0.9"/><path d="M1162 42Q1156 20 1144 5" stroke="#90a8c0" stroke-opacity="0.26" stroke-width="0.9"/><path d="M888 41Q888 27 897 18" stroke="#acc8cc" stroke-opacity="0.33" stroke-width="1.1"/><path d="M347 41Q342 21 332 8" stroke="#6e9890" stroke-opacity="0.29" stroke-width="1.1"/><path d="M1322 43Q1323 34 1328 29" stroke="#a0b8cc" stroke-opacity="0.21" stroke-width="0.8"/><path d="M1038 41Q1037 22 1054 10" stroke="#9cbcc4" stroke-opacity="0.19" stroke-width="1.5"/><path d="M116 44Q114 39 128 35" stroke="#a0b8bc" stroke-opacity="0.23" stroke-width="1.1"/><path d="M472 43Q472 18 455 1" stroke="#a0b8bc" stroke-opacity="0.29" stroke-width="1.5"/><path d="M1337 42Q1335 26 1324 16" stroke="#8098b0" stroke-opacity="0.27" stroke-width="0.7"/><path d="M580 40Q580 23 592 11" stroke="#7ca494" stroke-opacity="0.25" stroke-width="1.4"/><path d="M72 41Q70 22 76 9" stroke="#acc8cc" stroke-opacity="0.24" stroke-width="1.4"/><path d="M310 40Q309 20 320 6" stroke="#8fb0a4" stroke-opacity="0.24" stroke-width="1.3"/><path d="M410 42Q411 27 405 18" stroke="#8fb0a4" stroke-opacity="0.22" stroke-width="1.5"/><path d="M823 41Q829 23 839 12" stroke="#9cbcc4" stroke-opacity="0.20" stroke-width="0.7"/><path d="M410 43Q409 28 422 19" stroke="#6e9890" stroke-opacity="0.39" stroke-width="0.6"/><path d="M400 42Q398 17 411 1" stroke="#acc8cc" stroke-opacity="0.38" stroke-width="0.7"/><path d="M330 41Q326 20 325 7" stroke="#acc8cc" stroke-opacity="0.16" stroke-width="0.9"/><path d="M395 41Q395 17 396 0" stroke="#6e9890" stroke-opacity="0.16" stroke-width="1.1"/><path d="M514 41Q509 31 497 23" stroke="#8fb0a4" stroke-opacity="0.18" stroke-width="1.4"/><path d="M815 40Q812 26 798 16" stroke="#acc8cc" stroke-opacity="0.19" stroke-width="0.7"/><path d="M1078 41Q1080 25 1078 13" stroke="#8098b0" stroke-opacity="0.18" stroke-width="1.5"/><path d="M996 42Q996 28 995 19" stroke="#8fb0a4" stroke-opacity="0.29" stroke-width="1.4"/><path d="M1135 44Q1136 27 1137 16" stroke="#90a8c0" stroke-opacity="0.11" stroke-width="1.5"/><path d="M218 43Q216 26 205 15" stroke="#7ca494" stroke-opacity="0.35" stroke-width="1.4"/><path d="M588 42Q592 32 602 26" stroke="#8fb0a4" stroke-opacity="0.36" stroke-width="1.0"/><path d="M630 43Q627 26 633 14" stroke="#9cbcc4" stroke-opacity="0.27" stroke-width="0.9"/><path d="M135 40Q137 17 150 1" stroke="#a0b8bc" stroke-opacity="0.22" stroke-width="1.1"/><path d="M242 42Q239 29 243 20" stroke="#8fb0a4" stroke-opacity="0.23" stroke-width="1.5"/><path d="M1248 41Q1246 18 1238 3" stroke="#8098b0" stroke-opacity="0.21" stroke-width="1.3"/><path d="M900 41Q904 32 905 26" stroke="#8fb0a4" stroke-opacity="0.42" stroke-width="1.3"/><path d="M128 43Q126 36 113 31" stroke="#7ca494" stroke-opacity="0.27" stroke-width="1.6"/><path d="M983 43Q985 32 992 25" stroke="#6e9890" stroke-opacity="0.22" stroke-width="1.2"/><path d="M961 41Q962 26 948 17" stroke="#a0b8bc" stroke-opacity="0.20" stroke-width="1.6"/><path d="M1307 43Q1311 24 1319 11" stroke="#90a8c0" stroke-opacity="0.19" stroke-width="1.5"/><path d="M1286 42Q1283 21 1270 7" stroke="#90a8c0" stroke-opacity="0.23" stroke-width="1.5"/><path d="M1363 43Q1366 31 1369 23" stroke="#8098b0" stroke-opacity="0.15" stroke-width="1.6"/><path d="M1045 42Q1050 30 1053 23" stroke="#acc8cc" stroke-opacity="0.19" stroke-width="1.3"/><path d="M750 42Q745 35 732 31" stroke="#9cbcc4" stroke-opacity="0.21" stroke-width="1.6"/><path d="M1127 43Q1126 26 1114 14" stroke="#90a8c0" stroke-opacity="0.22" stroke-width="1.3"/><path d="M841 40Q841 31 835 24" stroke="#a0b8bc" stroke-opacity="0.16" stroke-width="1.1"/><path d="M63 40Q66 25 62 15" stroke="#acc8cc" stroke-opacity="0.37" stroke-width="1.1"/><path d="M10 43Q12 25 15 13" stroke="#8fb0a4" stroke-opacity="0.25" stroke-width="1.2"/><path d="M439 41Q435 25 438 15" stroke="#9cbcc4" stroke-opacity="0.31" stroke-width="1.1"/><path d="M1234 41Q1230 28 1216 19" stroke="#a0b8cc" stroke-opacity="0.28" stroke-width="0.9"/><path d="M80 43Q82 19 82 3" stroke="#6e9890" stroke-opacity="0.17" stroke-width="1.0"/><path d="M1102 41Q1104 29 1119 21" stroke="#90a8c0" stroke-opacity="0.13" stroke-width="1.1"/><path d="M567 43Q567 30 562 20" stroke="#7ca494" stroke-opacity="0.34" stroke-width="0.7"/><path d="M474 43Q478 32 486 25" stroke="#7ca494" stroke-opacity="0.31" stroke-width="1.3"/><path d="M67 43Q72 36 76 31" stroke="#9cbcc4" stroke-opacity="0.36" stroke-width="1.4"/><path d="M140 42Q139 27 139 18" stroke="#8fb0a4" stroke-opacity="0.41" stroke-width="1.6"/><path d="M523 41Q522 35 529 31" stroke="#6e9890" stroke-opacity="0.23" stroke-width="1.0"/><path d="M1164 41Q1167 15 1166 -2" stroke="#a0b8cc" stroke-opacity="0.22" stroke-width="0.7"/><path d="M796 44Q791 38 782 34" stroke="#6e9890" stroke-opacity="0.34" stroke-width="1.2"/><path d="M1134 43Q1137 35 1146 30" stroke="#a0b8cc" stroke-opacity="0.25" stroke-width="0.6"/><path d="M960 44Q962 38 961 35" stroke="#a0b8bc" stroke-opacity="0.18" stroke-width="0.8"/><path d="M564 41Q566 26 577 17" stroke="#7ca494" stroke-opacity="0.38" stroke-width="1.3"/><path d="M397 41Q399 34 393 30" stroke="#8fb0a4" stroke-opacity="0.18" stroke-width="1.4"/><path d="M1351 41Q1345 27 1335 17" stroke="#8098b0" stroke-opacity="0.20" stroke-width="1.0"/><path d="M1371 40Q1371 31 1356 25" stroke="#8098b0" stroke-opacity="0.11" stroke-width="1.0"/><path d="M500 43Q499 18 493 1" stroke="#8fb0a4" stroke-opacity="0.18" stroke-width="1.0"/><path d="M849 41Q846 29 839 21" stroke="#a0b8bc" stroke-opacity="0.38" stroke-width="0.8"/><path d="M399 40Q397 25 399 14" stroke="#7ca494" stroke-opacity="0.28" stroke-width="1.5"/><path d="M290 40Q294 32 296 26" stroke="#7ca494" stroke-opacity="0.38" stroke-width="0.6"/><path d="M1304 41Q1305 32 1317 27" stroke="#90a8c0" stroke-opacity="0.14" stroke-width="1.0"/><path d="M1110 41Q1111 31 1121 24" stroke="#90a8c0" stroke-opacity="0.24" stroke-width="1.1"/><path d="M511 41Q510 31 509 24" stroke="#8fb0a4" stroke-opacity="0.41" stroke-width="1.1"/><path d="M380 43Q377 26 365 15" stroke="#8fb0a4" stroke-opacity="0.16" stroke-width="0.7"/><path d="M865 44Q864 33 873 26" stroke="#acc8cc" stroke-opacity="0.17" stroke-width="1.5"/><path d="M279 40Q280 35 266 32" stroke="#acc8cc" stroke-opacity="0.31" stroke-width="1.0"/><path d="M1316 40Q1313 35 1308 32" stroke="#8098b0" stroke-opacity="0.26" stroke-width="0.7"/><path d="M411 40Q414 32 411 27" stroke="#a0b8bc" stroke-opacity="0.33" stroke-width="1.1"/><path d="M1254 43Q1254 20 1266 5" stroke="#90a8c0" stroke-opacity="0.15" stroke-width="1.0"/><path d="M626 41Q626 30 613 23" stroke="#7ca494" stroke-opacity="0.41" stroke-width="1.4"/><path d="M1213 42Q1208 18 1205 1" stroke="#8098b0" stroke-opacity="0.22" stroke-width="1.1"/><path d="M192 42Q186 25 176 13" stroke="#9cbcc4" stroke-opacity="0.26" stroke-width="1.3"/><path d="M1173 40Q1175 26 1171 16" stroke="#a0b8cc" stroke-opacity="0.19" stroke-width="1.4"/><path d="M932 42Q931 28 919 18" stroke="#8fb0a4" stroke-opacity="0.18" stroke-width="1.4"/><path d="M835 41Q834 24 837 14" stroke="#6e9890" stroke-opacity="0.38" stroke-width="1.5"/><path d="M781 41Q776 29 764 21" stroke="#9cbcc4" stroke-opacity="0.35" stroke-width="1.2"/><path d="M350 42Q353 36 352 32" stroke="#9cbcc4" stroke-opacity="0.21" stroke-width="0.8"/><path d="M561 42Q564 36 573 32" stroke="#7ca494" stroke-opacity="0.24" stroke-width="0.8"/><path d="M842 41Q844 24 851 13" stroke="#9cbcc4" stroke-opacity="0.23" stroke-width="0.9"/><path d="M1195 41Q1201 22 1209 9" stroke="#a0b8cc" stroke-opacity="0.20" stroke-width="1.4"/><path d="M42 42Q41 22 52 8" stroke="#9cbcc4" stroke-opacity="0.17" stroke-width="1.4"/><path d="M187 41Q189 20 179 6" stroke="#a0b8bc" stroke-opacity="0.37" stroke-width="1.6"/><path d="M827 42Q826 25 831 14" stroke="#6e9890" stroke-opacity="0.25" stroke-width="0.9"/><path d="M1362 43Q1361 33 1350 25" stroke="#90a8c0" stroke-opacity="0.13" stroke-width="1.0"/><path d="M1163 42Q1164 26 1164 15" stroke="#8098b0" stroke-opacity="0.22" stroke-width="1.4"/><path d="M816 41Q814 33 819 27" stroke="#8fb0a4" stroke-opacity="0.40" stroke-width="1.2"/><path d="M708 43Q703 32 697 25" stroke="#7ca494" stroke-opacity="0.21" stroke-width="1.4"/><path d="M0 43Q-1 24 -11 11" stroke="#6e9890" stroke-opacity="0.33" stroke-width="1.4"/><path d="M643 42Q643 35 643 31" stroke="#8fb0a4" stroke-opacity="0.22" stroke-width="1.2"/><path d="M1341 43Q1339 29 1343 19" stroke="#a0b8cc" stroke-opacity="0.15" stroke-width="1.1"/><path d="M1225 41Q1225 24 1220 13" stroke="#a0b8cc" stroke-opacity="0.18" stroke-width="1.2"/><path d="M523 42Q522 36 506 31" stroke="#acc8cc" stroke-opacity="0.32" stroke-width="1.6"/><path d="M664 41Q668 26 670 15" stroke="#a0b8bc" stroke-opacity="0.22" stroke-width="1.1"/><path d="M59 43Q60 28 67 18" stroke="#7ca494" stroke-opacity="0.32" stroke-width="0.8"/><path d="M1222 41Q1223 32 1229 26" stroke="#90a8c0" stroke-opacity="0.28" stroke-width="1.3"/><path d="M617 44Q612 32 606 24" stroke="#9cbcc4" stroke-opacity="0.36" stroke-width="1.5"/><path d="M502 42Q507 31 512 24" stroke="#8fb0a4" stroke-opacity="0.37" stroke-width="1.4"/><path d="M821 42Q821 33 837 27" stroke="#6e9890" stroke-opacity="0.30" stroke-width="0.6"/><path d="M888 41Q885 29 880 22" stroke="#acc8cc" stroke-opacity="0.27" stroke-width="1.0"/><path d="M1221 43Q1225 28 1226 18" stroke="#8098b0" stroke-opacity="0.12" stroke-width="1.6"/><path d="M747 43Q745 34 738 27" stroke="#7ca494" stroke-opacity="0.33" stroke-width="1.2"/><path d="M853 42Q855 32 871 25" stroke="#6e9890" stroke-opacity="0.19" stroke-width="1.0"/><path d="M315 41Q310 33 304 28" stroke="#7ca494" stroke-opacity="0.29" stroke-width="1.6"/><path d="M1083 42Q1085 17 1069 0" stroke="#8098b0" stroke-opacity="0.15" stroke-width="0.7"/><path d="M427 43Q432 27 444 17" stroke="#8fb0a4" stroke-opacity="0.31" stroke-width="1.3"/><path d="M323 40Q326 28 322 19" stroke="#9cbcc4" stroke-opacity="0.28" stroke-width="0.8"/><path d="M1033 40Q1033 27 1024 19" stroke="#7ca494" stroke-opacity="0.16" stroke-width="1.1"/><path d="M943 42Q946 35 950 29" stroke="#7ca494" stroke-opacity="0.42" stroke-width="0.8"/><path d="M658 41Q661 34 663 29" stroke="#8fb0a4" stroke-opacity="0.42" stroke-width="0.7"/><path d="M50 43Q53 38 65 34" stroke="#acc8cc" stroke-opacity="0.24" stroke-width="1.3"/><path d="M1369 42Q1370 28 1367 18" stroke="#8098b0" stroke-opacity="0.25" stroke-width="0.8"/><path d="M1071 42Q1067 35 1058 30" stroke="#a0b8cc" stroke-opacity="0.19" stroke-width="0.6"/><path d="M504 43Q503 18 512 2" stroke="#acc8cc" stroke-opacity="0.15" stroke-width="0.9"/><path d="M552 42Q547 20 545 6" stroke="#acc8cc" stroke-opacity="0.38" stroke-width="0.8"/><path d="M481 43Q479 21 474 7" stroke="#acc8cc" stroke-opacity="0.31" stroke-width="0.6"/><path d="M433 42Q434 26 440 15" stroke="#a0b8bc" stroke-opacity="0.25" stroke-width="0.7"/><path d="M672 44Q671 36 665 30" stroke="#9cbcc4" stroke-opacity="0.35" stroke-width="1.2"/><path d="M1243 43Q1242 30 1255 21" stroke="#a0b8cc" stroke-opacity="0.19" stroke-width="1.0"/><path d="M8 40Q11 20 13 6" stroke="#9cbcc4" stroke-opacity="0.17" stroke-width="0.6"/><path d="M689 40Q690 25 688 14" stroke="#6e9890" stroke-opacity="0.20" stroke-width="0.8"/><path d="M84 42Q84 34 85 28" stroke="#6e9890" stroke-opacity="0.32" stroke-width="1.2"/><path d="M653 41Q653 31 665 23" stroke="#a0b8bc" stroke-opacity="0.17" stroke-width="1.5"/><path d="M722 41Q720 29 706 20" stroke="#acc8cc" stroke-opacity="0.19" stroke-width="1.2"/><path d="M585 43Q587 35 578 30" stroke="#7ca494" stroke-opacity="0.24" stroke-width="1.1"/><path d="M82 40Q85 23 97 11" stroke="#6e9890" stroke-opacity="0.39" stroke-width="1.6"/><path d="M612 41Q615 31 617 23" stroke="#6e9890" stroke-opacity="0.26" stroke-width="1.4"/><path d="M585 43Q587 34 596 28" stroke="#8fb0a4" stroke-opacity="0.36" stroke-width="1.5"/><path d="M1338 40Q1340 23 1330 12" stroke="#a0b8cc" stroke-opacity="0.09" stroke-width="0.9"/><path d="M880 44Q883 32 884 24" stroke="#acc8cc" stroke-opacity="0.39" stroke-width="0.8"/><path d="M452 44Q452 23 458 9" stroke="#6e9890" stroke-opacity="0.36" stroke-width="1.2"/><path d="M901 42Q897 29 900 21" stroke="#9cbcc4" stroke-opacity="0.30" stroke-width="1.1"/><path d="M1028 41Q1030 36 1041 32" stroke="#7ca494" stroke-opacity="0.42" stroke-width="1.1"/><path d="M275 43Q276 22 280 8" stroke="#acc8cc" stroke-opacity="0.22" stroke-width="0.8"/><path d="M50 43Q47 26 47 15" stroke="#a0b8bc" stroke-opacity="0.26" stroke-width="1.1"/><path d="M1012 42Q1016 31 1027 23" stroke="#7ca494" stroke-opacity="0.23" stroke-width="1.3"/><path d="M972 42Q969 34 970 29" stroke="#7ca494" stroke-opacity="0.18" stroke-width="1.0"/><path d="M515 41Q513 29 510 21" stroke="#7ca494" stroke-opacity="0.18" stroke-width="0.9"/><path d="M235 40Q233 16 224 -1" stroke="#acc8cc" stroke-opacity="0.22" stroke-width="1.5"/><path d="M563 41Q559 29 547 20" stroke="#8fb0a4" stroke-opacity="0.32" stroke-width="1.6"/><path d="M667 43Q661 28 649 17" stroke="#a0b8bc" stroke-opacity="0.17" stroke-width="0.9"/><path d="M943 43Q941 36 945 32" stroke="#7ca494" stroke-opacity="0.29" stroke-width="0.9"/><path d="M327 44Q324 27 333 17" stroke="#a0b8bc" stroke-opacity="0.24" stroke-width="1.4"/><path d="M1130 42Q1133 22 1142 9" stroke="#90a8c0" stroke-opacity="0.16" stroke-width="0.8"/><path d="M388 42Q387 35 371 30" stroke="#8fb0a4" stroke-opacity="0.19" stroke-width="1.5"/><path d="M662 41Q662 29 668 21" stroke="#a0b8bc" stroke-opacity="0.29" stroke-width="1.1"/><path d="M509 42Q513 36 520 33" stroke="#acc8cc" stroke-opacity="0.18" stroke-width="1.1"/><path d="M1200 43Q1198 23 1198 10" stroke="#90a8c0" stroke-opacity="0.17" stroke-width="1.3"/><path d="M823 43Q821 31 812 24" stroke="#8fb0a4" stroke-opacity="0.33" stroke-width="0.6"/><path d="M780 41Q778 26 776 16" stroke="#7ca494" stroke-opacity="0.24" stroke-width="0.9"/><path d="M638 42Q641 32 645 25" stroke="#8fb0a4" stroke-opacity="0.23" stroke-width="1.1"/><path d="M935 42Q934 36 932 32" stroke="#7ca494" stroke-opacity="0.33" stroke-width="1.0"/><path d="M926 41Q929 25 926 15" stroke="#a0b8bc" stroke-opacity="0.34" stroke-width="1.3"/><path d="M220 42Q225 27 238 17" stroke="#a0b8bc" stroke-opacity="0.36" stroke-width="1.0"/><path d="M538 42Q534 21 521 7" stroke="#a0b8bc" stroke-opacity="0.30" stroke-width="0.7"/><path d="M104 44Q100 25 102 13" stroke="#acc8cc" stroke-opacity="0.37" stroke-width="0.9"/><path d="M57 44Q56 19 51 3" stroke="#6e9890" stroke-opacity="0.41" stroke-width="1.3"/><path d="M531 40Q533 15 530 -1" stroke="#9cbcc4" stroke-opacity="0.20" stroke-width="0.8"/><path d="M360 40Q359 31 348 25" stroke="#7ca494" stroke-opacity="0.33" stroke-width="1.3"/><path d="M916 40Q914 23 903 12" stroke="#a0b8bc" stroke-opacity="0.41" stroke-width="1.3"/><path d="M417 43Q419 37 425 32" stroke="#a0b8bc" stroke-opacity="0.18" stroke-width="0.9"/><path d="M38 43Q40 23 26 10" stroke="#6e9890" stroke-opacity="0.35" stroke-width="0.7"/><path d="M43 43Q43 29 56 20" stroke="#acc8cc" stroke-opacity="0.17" stroke-width="1.3"/><path d="M277 41Q273 20 259 6" stroke="#8fb0a4" stroke-opacity="0.41" stroke-width="1.3"/><path d="M510 41Q509 31 508 25" stroke="#7ca494" stroke-opacity="0.17" stroke-width="1.5"/><path d="M775 43Q778 37 783 33" stroke="#6e9890" stroke-opacity="0.36" stroke-width="1.1"/><path d="M-1 44Q-4 30 -13 21" stroke="#9cbcc4" stroke-opacity="0.27" stroke-width="0.9"/><path d="M1232 40Q1232 16 1227 0" stroke="#8098b0" stroke-opacity="0.20" stroke-width="1.2"/><path d="M994 43Q991 28 982 18" stroke="#7ca494" stroke-opacity="0.21" stroke-width="1.6"/><path d="M1259 44Q1260 33 1244 25" stroke="#90a8c0" stroke-opacity="0.21" stroke-width="1.4"/><path d="M78 41Q80 30 76 23" stroke="#8fb0a4" stroke-opacity="0.21" stroke-width="1.0"/><path d="M594 42Q596 35 600 30" stroke="#acc8cc" stroke-opacity="0.42" stroke-width="1.2"/><path d="M715 41Q713 32 705 26" stroke="#6e9890" stroke-opacity="0.25" stroke-width="1.6"/><path d="M1350 41Q1354 34 1348 28" stroke="#8098b0" stroke-opacity="0.27" stroke-width="1.3"/><path d="M1098 44Q1103 28 1113 17" stroke="#a0b8cc" stroke-opacity="0.15" stroke-width="1.0"/><path d="M181 43Q187 17 196 -0" stroke="#6e9890" stroke-opacity="0.36" stroke-width="1.4"/><path d="M727 40Q723 31 720 25" stroke="#7ca494" stroke-opacity="0.39" stroke-width="1.2"/><path d="M588 41Q591 32 590 26" stroke="#7ca494" stroke-opacity="0.39" stroke-width="1.1"/><path d="M887 41Q891 36 902 33" stroke="#8fb0a4" stroke-opacity="0.17" stroke-width="1.3"/><path d="M635 43Q634 36 639 31" stroke="#8fb0a4" stroke-opacity="0.23" stroke-width="1.1"/><path d="M1074 41Q1072 22 1077 10" stroke="#a0b8cc" stroke-opacity="0.10" stroke-width="1.0"/><path d="M990 40Q986 28 986 19" stroke="#acc8cc" stroke-opacity="0.28" stroke-width="0.8"/><path d="M815 41Q811 29 811 21" stroke="#7ca494" stroke-opacity="0.34" stroke-width="0.6"/><path d="M654 43Q649 28 639 18" stroke="#acc8cc" stroke-opacity="0.31" stroke-width="0.8"/><path d="M625 40Q623 35 626 32" stroke="#6e9890" stroke-opacity="0.29" stroke-width="1.2"/><path d="M675 44Q674 29 671 19" stroke="#9cbcc4" stroke-opacity="0.31" stroke-width="0.8"/><path d="M393 44Q389 25 379 13" stroke="#8fb0a4" stroke-opacity="0.26" stroke-width="1.2"/><path d="M242 44Q240 26 241 14" stroke="#6e9890" stroke-opacity="0.32" stroke-width="0.8"/><path d="M827 43Q828 35 810 30" stroke="#9cbcc4" stroke-opacity="0.37" stroke-width="1.4"/><path d="M934 41Q937 29 934 21" stroke="#acc8cc" stroke-opacity="0.26" stroke-width="0.7"/><path d="M70 44Q71 26 55 15" stroke="#6e9890" stroke-opacity="0.19" stroke-width="1.2"/><path d="M-2 41Q-6 28 -7 19" stroke="#8fb0a4" stroke-opacity="0.22" stroke-width="0.6"/><path d="M835 42Q834 33 843 27" stroke="#acc8cc" stroke-opacity="0.42" stroke-width="1.0"/><path d="M1033 43Q1031 25 1028 13" stroke="#acc8cc" stroke-opacity="0.20" stroke-width="1.0"/><path d="M395 43Q391 38 394 34" stroke="#8fb0a4" stroke-opacity="0.29" stroke-width="1.3"/><path d="M950 44Q952 29 957 19" stroke="#6e9890" stroke-opacity="0.33" stroke-width="1.1"/><path d="M498 40Q497 24 489 13" stroke="#7ca494" stroke-opacity="0.21" stroke-width="1.2"/><path d="M-7 42Q-5 32 -3 26" stroke="#8fb0a4" stroke-opacity="0.28" stroke-width="1.5"/><path d="M531 42Q534 30 533 22" stroke="#a0b8bc" stroke-opacity="0.19" stroke-width="1.1"/><path d="M1361 43Q1362 25 1359 13" stroke="#90a8c0" stroke-opacity="0.24" stroke-width="1.6"/><path d="M42 43Q43 30 45 22" stroke="#9cbcc4" stroke-opacity="0.39" stroke-width="1.3"/><path d="M803 40Q809 24 819 13" stroke="#6e9890" stroke-opacity="0.23" stroke-width="0.6"/><path d="M664 41Q661 29 657 22" stroke="#a0b8bc" stroke-opacity="0.29" stroke-width="0.9"/><path d="M371 41Q376 25 381 15" stroke="#a0b8bc" stroke-opacity="0.23" stroke-width="1.2"/><path d="M437 43Q438 35 422 29" stroke="#6e9890" stroke-opacity="0.18" stroke-width="0.6"/><path d="M369 40Q372 34 375 29" stroke="#6e9890" stroke-opacity="0.29" stroke-width="1.3"/><path d="M465 40Q464 25 481 15" stroke="#9cbcc4" stroke-opacity="0.32" stroke-width="1.1"/><path d="M1369 41Q1368 36 1360 32" stroke="#90a8c0" stroke-opacity="0.20" stroke-width="1.2"/><path d="M994 41Q991 35 980 31" stroke="#9cbcc4" stroke-opacity="0.24" stroke-width="1.2"/><path d="M2 42Q8 36 13 32" stroke="#a0b8bc" stroke-opacity="0.29" stroke-width="1.0"/><path d="M1164 44Q1168 26 1168 14" stroke="#a0b8cc" stroke-opacity="0.11" stroke-width="0.8"/><path d="M1366 43Q1364 24 1348 10" stroke="#8098b0" stroke-opacity="0.16" stroke-width="0.7"/><path d="M362 43Q362 27 346 16" stroke="#6e9890" stroke-opacity="0.18" stroke-width="1.0"/><path d="M96 44Q94 27 80 17" stroke="#acc8cc" stroke-opacity="0.27" stroke-width="0.9"/><path d="M475 41Q474 32 484 26" stroke="#acc8cc" stroke-opacity="0.20" stroke-width="1.1"/><path d="M878 41Q880 28 868 19" stroke="#acc8cc" stroke-opacity="0.37" stroke-width="1.3"/><path d="M107 41Q104 27 98 17" stroke="#6e9890" stroke-opacity="0.20" stroke-width="1.0"/><path d="M292 43Q290 20 299 4" stroke="#8fb0a4" stroke-opacity="0.40" stroke-width="0.7"/><path d="M250 43Q253 32 251 24" stroke="#8fb0a4" stroke-opacity="0.38" stroke-width="0.7"/><path d="M1287 41Q1287 33 1281 27" stroke="#8098b0" stroke-opacity="0.08" stroke-width="0.8"/><path d="M432 40Q433 32 444 26" stroke="#9cbcc4" stroke-opacity="0.21" stroke-width="0.7"/><path d="M164 40Q169 29 173 21" stroke="#9cbcc4" stroke-opacity="0.31" stroke-width="1.1"/><path d="M550 41Q550 34 542 29" stroke="#8fb0a4" stroke-opacity="0.29" stroke-width="1.6"/><path d="M839 44Q840 39 829 35" stroke="#a0b8bc" stroke-opacity="0.35" stroke-width="1.3"/><path d="M1367 43Q1366 28 1361 17" stroke="#8098b0" stroke-opacity="0.10" stroke-width="1.4"/><path d="M537 41Q533 18 525 3" stroke="#acc8cc" stroke-opacity="0.16" stroke-width="1.2"/><path d="M994 41Q999 30 1004 23" stroke="#7ca494" stroke-opacity="0.36" stroke-width="1.5"/><path d="M554 42Q557 16 558 -1" stroke="#acc8cc" stroke-opacity="0.24" stroke-width="1.0"/><path d="M1195 43Q1193 23 1196 10" stroke="#a0b8cc" stroke-opacity="0.28" stroke-width="1.4"/><path d="M1214 44Q1215 36 1228 31" stroke="#8098b0" stroke-opacity="0.24" stroke-width="1.5"/><path d="M791 41Q788 28 786 18" stroke="#6e9890" stroke-opacity="0.37" stroke-width="0.7"/><path d="M422 41Q418 33 407 28" stroke="#6e9890" stroke-opacity="0.36" stroke-width="1.0"/><path d="M1116 43Q1117 36 1124 31" stroke="#8098b0" stroke-opacity="0.27" stroke-width="0.7"/><path d="M680 43Q679 36 664 32" stroke="#6e9890" stroke-opacity="0.31" stroke-width="1.5"/><path d="M1172 43Q1170 17 1180 -0" stroke="#a0b8cc" stroke-opacity="0.16" stroke-width="1.4"/><path d="M1256 44Q1251 36 1242 30" stroke="#a0b8cc" stroke-opacity="0.12" stroke-width="1.5"/><path d="M869 40Q869 30 857 23" stroke="#acc8cc" stroke-opacity="0.32" stroke-width="0.8"/><path d="M333 43Q333 32 336 25" stroke="#7ca494" stroke-opacity="0.36" stroke-width="0.7"/><path d="M978 41Q976 30 991 22" stroke="#a0b8bc" stroke-opacity="0.40" stroke-width="1.3"/><path d="M482 41Q480 23 468 11" stroke="#acc8cc" stroke-opacity="0.32" stroke-width="1.2"/><path d="M529 43Q531 17 543 0" stroke="#8fb0a4" stroke-opacity="0.42" stroke-width="0.7"/><path d="M1248 41Q1249 21 1247 8" stroke="#8098b0" stroke-opacity="0.23" stroke-width="0.9"/><path d="M518 43Q522 17 534 -0" stroke="#8fb0a4" stroke-opacity="0.24" stroke-width="1.6"/><path d="M77 41Q78 24 93 12" stroke="#8fb0a4" stroke-opacity="0.33" stroke-width="0.8"/><path d="M128 42Q133 29 143 21" stroke="#7ca494" stroke-opacity="0.20" stroke-width="0.7"/><path d="M1200 44Q1195 34 1195 27" stroke="#90a8c0" stroke-opacity="0.22" stroke-width="1.6"/><path d="M510 42Q515 32 528 24" stroke="#6e9890" stroke-opacity="0.28" stroke-width="1.0"/><path d="M339 43Q340 20 354 5" stroke="#6e9890" stroke-opacity="0.28" stroke-width="1.1"/><path d="M1357 42Q1358 27 1346 18" stroke="#8098b0" stroke-opacity="0.09" stroke-width="1.4"/><path d="M1140 43Q1134 28 1123 19" stroke="#90a8c0" stroke-opacity="0.19" stroke-width="0.7"/><path d="M1307 41Q1307 20 1322 7" stroke="#90a8c0" stroke-opacity="0.26" stroke-width="1.3"/><path d="M616 42Q621 32 626 25" stroke="#6e9890" stroke-opacity="0.17" stroke-width="1.5"/><path d="M1237 43Q1240 17 1246 0" stroke="#8098b0" stroke-opacity="0.16" stroke-width="1.6"/><path d="M601 43Q601 37 591 34" stroke="#acc8cc" stroke-opacity="0.23" stroke-width="1.5"/><path d="M1038 43Q1035 35 1045 29" stroke="#acc8cc" stroke-opacity="0.40" stroke-width="0.7"/><path d="M130 41Q132 34 135 29" stroke="#a0b8bc" stroke-opacity="0.18" stroke-width="0.6"/><path d="M946 42Q950 27 959 17" stroke="#8fb0a4" stroke-opacity="0.26" stroke-width="1.5"/><path d="M725 42Q728 28 736 18" stroke="#7ca494" stroke-opacity="0.38" stroke-width="0.8"/><path d="M32 41Q36 21 43 7" stroke="#9cbcc4" stroke-opacity="0.35" stroke-width="1.3"/><path d="M1368 42Q1374 31 1385 24" stroke="#8098b0" stroke-opacity="0.18" stroke-width="1.5"/><path d="M157 44Q157 24 159 10" stroke="#9cbcc4" stroke-opacity="0.26" stroke-width="1.5"/><path d="M139 43Q136 25 143 13" stroke="#a0b8bc" stroke-opacity="0.23" stroke-width="1.5"/><path d="M436 40Q438 23 432 11" stroke="#7ca494" stroke-opacity="0.28" stroke-width="0.6"/><path d="M216 40Q214 30 227 24" stroke="#acc8cc" stroke-opacity="0.25" stroke-width="1.2"/><path d="M154 42Q154 33 161 26" stroke="#a0b8bc" stroke-opacity="0.27" stroke-width="0.7"/><path d="M641 42Q642 32 640 25" stroke="#6e9890" stroke-opacity="0.26" stroke-width="1.1"/><path d="M73 40Q70 27 71 18" stroke="#6e9890" stroke-opacity="0.38" stroke-width="1.5"/><path d="M1327 43Q1326 27 1322 17" stroke="#8098b0" stroke-opacity="0.27" stroke-width="1.5"/><path d="M1157 43Q1157 20 1170 5" stroke="#8098b0" stroke-opacity="0.19" stroke-width="1.4"/><path d="M276 44Q275 31 267 23" stroke="#9cbcc4" stroke-opacity="0.27" stroke-width="1.5"/><path d="M687 40Q686 34 683 30" stroke="#acc8cc" stroke-opacity="0.27" stroke-width="1.0"/><path d="M456 43Q457 36 451 32" stroke="#acc8cc" stroke-opacity="0.39" stroke-width="1.5"/><path d="M689 41Q686 33 671 27" stroke="#9cbcc4" stroke-opacity="0.38" stroke-width="1.1"/><path d="M1045 42Q1046 21 1053 7" stroke="#a0b8bc" stroke-opacity="0.18" stroke-width="1.1"/><path d="M967 40Q965 30 949 23" stroke="#6e9890" stroke-opacity="0.29" stroke-width="0.6"/><path d="M634 43Q635 34 636 27" stroke="#acc8cc" stroke-opacity="0.40" stroke-width="0.6"/><path d="M753 43Q758 30 758 21" stroke="#acc8cc" stroke-opacity="0.24" stroke-width="1.1"/><path d="M1252 42Q1254 19 1263 4" stroke="#90a8c0" stroke-opacity="0.14" stroke-width="0.7"/><path d="M445 44Q446 32 434 25" stroke="#6e9890" stroke-opacity="0.23" stroke-width="1.0"/><path d="M1247 44Q1247 21 1236 6" stroke="#8098b0" stroke-opacity="0.15" stroke-width="0.9"/><path d="M562 42Q561 24 563 12" stroke="#acc8cc" stroke-opacity="0.22" stroke-width="1.0"/><path d="M981 42Q977 28 966 19" stroke="#9cbcc4" stroke-opacity="0.32" stroke-width="1.2"/><path d="M1096 43Q1094 35 1094 30" stroke="#8098b0" stroke-opacity="0.09" stroke-width="1.4"/><path d="M532 41Q535 27 537 17" stroke="#a0b8bc" stroke-opacity="0.40" stroke-width="0.7"/><path d="M1259 42Q1256 33 1246 26" stroke="#8098b0" stroke-opacity="0.12" stroke-width="1.4"/><path d="M358 42Q360 16 347 -1" stroke="#6e9890" stroke-opacity="0.25" stroke-width="1.4"/><path d="M642 40Q639 27 628 18" stroke="#9cbcc4" stroke-opacity="0.33" stroke-width="1.4"/><path d="M846 42Q846 30 863 22" stroke="#a0b8bc" stroke-opacity="0.24" stroke-width="1.2"/><path d="M211 43Q211 28 223 18" stroke="#a0b8bc" stroke-opacity="0.16" stroke-width="1.5"/><path d="M137 42Q133 22 121 9" stroke="#acc8cc" stroke-opacity="0.41" stroke-width="1.2"/><path d="M1047 42Q1045 23 1046 10" stroke="#9cbcc4" stroke-opacity="0.25" stroke-width="1.0"/><path d="M721 42Q720 32 714 26" stroke="#6e9890" stroke-opacity="0.20" stroke-width="0.7"/><path d="M1270 40Q1269 33 1256 27" stroke="#a0b8cc" stroke-opacity="0.27" stroke-width="0.9"/><path d="M568 43Q565 33 557 26" stroke="#6e9890" stroke-opacity="0.30" stroke-width="1.6"/><path d="M84 42Q87 33 101 27" stroke="#8fb0a4" stroke-opacity="0.40" stroke-width="1.5"/><path d="M30 42Q29 31 33 24" stroke="#6e9890" stroke-opacity="0.25" stroke-width="1.0"/><path d="M955 43Q957 28 955 17" stroke="#a0b8bc" stroke-opacity="0.26" stroke-width="1.3"/><path d="M995 40Q998 30 994 24" stroke="#6e9890" stroke-opacity="0.21" stroke-width="0.6"/><path d="M683 42Q683 33 683 27" stroke="#9cbcc4" stroke-opacity="0.27" stroke-width="1.3"/><path d="M375 41Q373 32 366 26" stroke="#6e9890" stroke-opacity="0.29" stroke-width="1.6"/><path d="M352 40Q353 29 353 21" stroke="#6e9890" stroke-opacity="0.16" stroke-width="1.1"/><path d="M174 41Q173 26 161 17" stroke="#7ca494" stroke-opacity="0.17" stroke-width="1.3"/><path d="M1015 41Q1015 30 1029 23" stroke="#6e9890" stroke-opacity="0.30" stroke-width="0.9"/><path d="M897 42Q900 30 903 22" stroke="#acc8cc" stroke-opacity="0.33" stroke-width="1.2"/><path d="M1297 41Q1294 36 1291 33" stroke="#8098b0" stroke-opacity="0.23" stroke-width="0.8"/><path d="M828 41Q831 36 839 32" stroke="#9cbcc4" stroke-opacity="0.40" stroke-width="1.2"/><path d="M691 44Q692 33 694 27" stroke="#acc8cc" stroke-opacity="0.35" stroke-width="1.4"/><path d="M459 40Q462 16 460 1" stroke="#a0b8bc" stroke-opacity="0.33" stroke-width="0.7"/><path d="M712 41Q715 31 715 24" stroke="#9cbcc4" stroke-opacity="0.28" stroke-width="0.9"/><path d="M1220 42Q1224 25 1222 14" stroke="#8098b0" stroke-opacity="0.19" stroke-width="1.4"/><path d="M665 44Q669 39 679 35" stroke="#a0b8bc" stroke-opacity="0.22" stroke-width="0.6"/><path d="M910 41Q911 35 925 31" stroke="#7ca494" stroke-opacity="0.30" stroke-width="0.9"/><path d="M35 41Q38 26 36 16" stroke="#9cbcc4" stroke-opacity="0.20" stroke-width="0.9"/><path d="M881 41Q881 32 881 25" stroke="#8fb0a4" stroke-opacity="0.33" stroke-width="0.9"/><path d="M780 42Q785 30 793 21" stroke="#acc8cc" stroke-opacity="0.40" stroke-width="0.7"/><path d="M890 42Q894 31 901 23" stroke="#a0b8bc" stroke-opacity="0.26" stroke-width="0.7"/><path d="M19 41Q25 20 37 6" stroke="#a0b8bc" stroke-opacity="0.33" stroke-width="0.7"/><path d="M435 44Q436 19 421 2" stroke="#9cbcc4" stroke-opacity="0.19" stroke-width="1.3"/><path d="M1030 41Q1034 29 1044 21" stroke="#acc8cc" stroke-opacity="0.24" stroke-width="0.6"/><path d="M538 44Q542 39 553 35" stroke="#6e9890" stroke-opacity="0.15" stroke-width="0.9"/><path d="M892 40Q890 26 894 16" stroke="#8fb0a4" stroke-opacity="0.35" stroke-width="1.4"/><path d="M1177 42Q1180 30 1191 22" stroke="#90a8c0" stroke-opacity="0.18" stroke-width="1.0"/><path d="M1139 42Q1137 20 1127 4" stroke="#90a8c0" stroke-opacity="0.10" stroke-width="0.9"/><path d="M838 44Q842 38 854 35" stroke="#a0b8bc" stroke-opacity="0.19" stroke-width="0.8"/><path d="M693 41Q694 30 682 22" stroke="#6e9890" stroke-opacity="0.25" stroke-width="1.3"/><path d="M546 43Q545 26 539 15" stroke="#7ca494" stroke-opacity="0.36" stroke-width="1.0"/><path d="M359 42Q362 18 363 2" stroke="#8fb0a4" stroke-opacity="0.42" stroke-width="1.5"/><path d="M49 43Q46 17 35 -0" stroke="#6e9890" stroke-opacity="0.22" stroke-width="1.0"/><path d="M1027 42Q1031 26 1040 15" stroke="#acc8cc" stroke-opacity="0.18" stroke-width="1.4"/><path d="M465 42Q467 26 457 15" stroke="#acc8cc" stroke-opacity="0.22" stroke-width="0.9"/><path d="M996 42Q998 33 1011 28" stroke="#acc8cc" stroke-opacity="0.21" stroke-width="0.8"/><path d="M676 44Q675 27 680 15" stroke="#8fb0a4" stroke-opacity="0.26" stroke-width="1.4"/><path d="M171 42Q170 28 178 19" stroke="#7ca494" stroke-opacity="0.16" stroke-width="1.1"/><path d="M157 41Q158 25 166 14" stroke="#8fb0a4" stroke-opacity="0.38" stroke-width="0.9"/><path d="M794 42Q796 27 797 16" stroke="#acc8cc" stroke-opacity="0.34" stroke-width="1.4"/><path d="M1335 40Q1334 35 1350 32" stroke="#90a8c0" stroke-opacity="0.17" stroke-width="0.7"/><path d="M1159 42Q1163 36 1160 33" stroke="#90a8c0" stroke-opacity="0.20" stroke-width="1.1"/><path d="M157 41Q156 22 164 10" stroke="#acc8cc" stroke-opacity="0.16" stroke-width="1.4"/><path d="M390 44Q392 35 379 29" stroke="#7ca494" stroke-opacity="0.26" stroke-width="1.4"/><path d="M15 43Q19 22 29 7" stroke="#acc8cc" stroke-opacity="0.21" stroke-width="0.8"/><path d="M1015 43Q1010 32 998 25" stroke="#9cbcc4" stroke-opacity="0.39" stroke-width="1.1"/><path d="M1032 43Q1031 37 1047 33" stroke="#7ca494" stroke-opacity="0.37" stroke-width="1.5"/><path d="M220 41Q217 32 215 26" stroke="#8fb0a4" stroke-opacity="0.35" stroke-width="0.8"/><path d="M797 43Q795 27 805 16" stroke="#9cbcc4" stroke-opacity="0.33" stroke-width="1.0"/><path d="M1362 43Q1362 34 1351 28" stroke="#8098b0" stroke-opacity="0.22" stroke-width="1.3"/><path d="M1341 43Q1344 30 1347 21" stroke="#90a8c0" stroke-opacity="0.22" stroke-width="1.1"/><path d="M1308 41Q1311 30 1324 22" stroke="#8098b0" stroke-opacity="0.19" stroke-width="1.0"/><path d="M1190 41Q1192 16 1200 0" stroke="#8098b0" stroke-opacity="0.26" stroke-width="1.6"/><path d="M102 42Q98 30 95 22" stroke="#6e9890" stroke-opacity="0.22" stroke-width="1.0"/><path d="M85 42Q86 35 102 29" stroke="#7ca494" stroke-opacity="0.27" stroke-width="0.9"/><path d="M63 41Q61 19 53 4" stroke="#9cbcc4" stroke-opacity="0.35" stroke-width="1.1"/><path d="M714 40Q712 26 709 17" stroke="#a0b8bc" stroke-opacity="0.37" stroke-width="0.8"/><path d="M193 42Q192 22 191 8" stroke="#6e9890" stroke-opacity="0.19" stroke-width="1.0"/><path d="M286 44Q281 34 276 27" stroke="#8fb0a4" stroke-opacity="0.19" stroke-width="0.8"/><path d="M400 41Q402 33 413 28" stroke="#9cbcc4" stroke-opacity="0.36" stroke-width="1.2"/><path d="M806 43Q808 29 820 19" stroke="#7ca494" stroke-opacity="0.29" stroke-width="1.1"/><path d="M680 44Q685 30 688 22" stroke="#6e9890" stroke-opacity="0.41" stroke-width="1.3"/><path d="M1099 43Q1096 34 1088 28" stroke="#8098b0" stroke-opacity="0.08" stroke-width="0.9"/><path d="M295 40Q298 22 300 10" stroke="#7ca494" stroke-opacity="0.30" stroke-width="1.0"/><path d="M769 41Q772 27 777 18" stroke="#9cbcc4" stroke-opacity="0.19" stroke-width="1.3"/><path d="M648 42Q653 28 664 18" stroke="#9cbcc4" stroke-opacity="0.40" stroke-width="1.6"/><path d="M607 41Q602 30 590 22" stroke="#9cbcc4" stroke-opacity="0.32" stroke-width="0.6"/><path d="M43 43Q46 32 58 24" stroke="#acc8cc" stroke-opacity="0.39" stroke-width="1.1"/><path d="M780 43Q776 36 767 32" stroke="#9cbcc4" stroke-opacity="0.33" stroke-width="1.5"/><path d="M504 41Q502 27 501 18" stroke="#9cbcc4" stroke-opacity="0.18" stroke-width="0.6"/><path d="M237 40Q239 17 248 1" stroke="#9cbcc4" stroke-opacity="0.42" stroke-width="0.7"/><path d="M87 42Q92 18 103 2" stroke="#acc8cc" stroke-opacity="0.17" stroke-width="1.4"/><path d="M1164 43Q1163 33 1179 26" stroke="#90a8c0" stroke-opacity="0.26" stroke-width="1.2"/><path d="M401 41Q402 16 412 -0" stroke="#7ca494" stroke-opacity="0.16" stroke-width="1.3"/><path d="M478 42Q480 17 480 1" stroke="#acc8cc" stroke-opacity="0.30" stroke-width="1.3"/><path d="M496 41Q498 14 505 -3" stroke="#9cbcc4" stroke-opacity="0.32" stroke-width="1.5"/><path d="M1114 42Q1110 21 1113 6" stroke="#a0b8cc" stroke-opacity="0.27" stroke-width="1.1"/><path d="M1265 40Q1266 19 1271 5" stroke="#a0b8cc" stroke-opacity="0.11" stroke-width="0.8"/><path d="M718 41Q717 28 731 19" stroke="#9cbcc4" stroke-opacity="0.26" stroke-width="1.6"/><path d="M932 42Q926 31 919 24" stroke="#9cbcc4" stroke-opacity="0.21" stroke-width="0.7"/><path d="M716 43Q719 38 723 35" stroke="#7ca494" stroke-opacity="0.36" stroke-width="1.5"/><path d="M1163 41Q1163 15 1153 -2" stroke="#8098b0" stroke-opacity="0.09" stroke-width="1.3"/><path d="M1331 40Q1327 31 1322 25" stroke="#a0b8cc" stroke-opacity="0.16" stroke-width="0.6"/><path d="M281 41Q278 19 267 5" stroke="#9cbcc4" stroke-opacity="0.41" stroke-width="1.6"/><path d="M336 44Q335 19 336 3" stroke="#a0b8bc" stroke-opacity="0.21" stroke-width="1.6"/><path d="M597 41Q593 32 591 27" stroke="#a0b8bc" stroke-opacity="0.24" stroke-width="1.1"/><path d="M584 42Q583 27 574 17" stroke="#8fb0a4" stroke-opacity="0.22" stroke-width="1.6"/><path d="M753 43Q751 37 765 34" stroke="#7ca494" stroke-opacity="0.23" stroke-width="1.1"/><path d="M235 41Q235 15 224 -3" stroke="#a0b8bc" stroke-opacity="0.42" stroke-width="1.3"/><path d="M395 40Q399 26 400 16" stroke="#a0b8bc" stroke-opacity="0.37" stroke-width="1.3"/><path d="M31 41Q32 17 24 1" stroke="#a0b8bc" stroke-opacity="0.30" stroke-width="1.2"/><path d="M1355 44Q1354 28 1349 18" stroke="#8098b0" stroke-opacity="0.11" stroke-width="1.6"/><path d="M1139 40Q1143 20 1134 6" stroke="#90a8c0" stroke-opacity="0.09" stroke-width="1.5"/><path d="M450 44Q452 35 440 28" stroke="#7ca494" stroke-opacity="0.17" stroke-width="0.9"/><path d="M363 44Q363 20 381 4" stroke="#9cbcc4" stroke-opacity="0.34" stroke-width="0.7"/><path d="M26 41Q23 35 10 30" stroke="#a0b8bc" stroke-opacity="0.33" stroke-width="1.1"/><path d="M1225 43Q1224 38 1225 34" stroke="#a0b8cc" stroke-opacity="0.11" stroke-width="1.5"/><path d="M179 43Q175 34 163 27" stroke="#9cbcc4" stroke-opacity="0.34" stroke-width="1.1"/><path d="M577 43Q576 27 586 15" stroke="#8fb0a4" stroke-opacity="0.27" stroke-width="1.3"/><path d="M847 42Q847 34 859 29" stroke="#6e9890" stroke-opacity="0.29" stroke-width="1.2"/><path d="M1345 44Q1343 31 1340 23" stroke="#a0b8cc" stroke-opacity="0.26" stroke-width="0.9"/><path d="M1026 43Q1023 22 1016 7" stroke="#7ca494" stroke-opacity="0.15" stroke-width="1.2"/><path d="M899 42Q896 27 895 18" stroke="#7ca494" stroke-opacity="0.32" stroke-width="1.1"/><path d="M313 41Q318 36 325 33" stroke="#acc8cc" stroke-opacity="0.36" stroke-width="0.7"/><path d="M282 43Q280 34 299 28" stroke="#6e9890" stroke-opacity="0.15" stroke-width="1.2"/><path d="M668 41Q668 23 681 12" stroke="#acc8cc" stroke-opacity="0.19" stroke-width="1.5"/><path d="M1001 40Q1002 26 1000 17" stroke="#6e9890" stroke-opacity="0.38" stroke-width="0.7"/><path d="M86 42Q83 17 84 1" stroke="#8fb0a4" stroke-opacity="0.42" stroke-width="1.0"/><path d="M418 41Q415 31 415 23" stroke="#7ca494" stroke-opacity="0.30" stroke-width="1.3"/><path d="M83 42Q81 31 74 23" stroke="#9cbcc4" stroke-opacity="0.18" stroke-width="1.5"/><path d="M740 43Q738 30 737 21" stroke="#acc8cc" stroke-opacity="0.35" stroke-width="1.1"/><path d="M382 41Q378 19 374 4" stroke="#6e9890" stroke-opacity="0.22" stroke-width="1.1"/><path d="M1001 41Q999 28 992 20" stroke="#6e9890" stroke-opacity="0.23" stroke-width="1.5"/><path d="M1030 41Q1025 36 1016 32" stroke="#acc8cc" stroke-opacity="0.31" stroke-width="0.9"/><path d="M1116 41Q1117 25 1103 14" stroke="#90a8c0" stroke-opacity="0.26" stroke-width="1.5"/><path d="M248 42Q248 19 255 4" stroke="#acc8cc" stroke-opacity="0.37" stroke-width="0.7"/><path d="M1051 43Q1046 29 1038 19" stroke="#a0b8bc" stroke-opacity="0.34" stroke-width="1.0"/><path d="M500 43Q501 31 506 23" stroke="#a0b8bc" stroke-opacity="0.29" stroke-width="1.5"/><path d="M505 41Q507 20 501 5" stroke="#6e9890" stroke-opacity="0.29" stroke-width="1.2"/><path d="M1128 41Q1126 32 1116 26" stroke="#a0b8cc" stroke-opacity="0.26" stroke-width="0.9"/><path d="M418 41Q419 24 413 13" stroke="#7ca494" stroke-opacity="0.35" stroke-width="1.5"/><path d="M411 44Q412 39 424 35" stroke="#8fb0a4" stroke-opacity="0.33" stroke-width="1.1"/><path d="M869 44Q863 38 853 34" stroke="#7ca494" stroke-opacity="0.26" stroke-width="1.5"/><path d="M730 41Q727 29 720 21" stroke="#acc8cc" stroke-opacity="0.23" stroke-width="1.2"/><path d="M561 41Q559 28 548 19" stroke="#9cbcc4" stroke-opacity="0.24" stroke-width="1.0"/><path d="M74 41Q72 34 76 30" stroke="#acc8cc" stroke-opacity="0.37" stroke-width="0.6"/><path d="M167 41Q171 19 178 4" stroke="#8fb0a4" stroke-opacity="0.19" stroke-width="1.3"/><path d="M1069 40Q1066 23 1062 12" stroke="#90a8c0" stroke-opacity="0.15" stroke-width="1.1"/><path d="M752 40Q752 26 755 16" stroke="#acc8cc" stroke-opacity="0.20" stroke-width="1.0"/><path d="M966 43Q966 35 973 29" stroke="#acc8cc" stroke-opacity="0.25" stroke-width="1.1"/><path d="M800 41Q802 25 806 15" stroke="#8fb0a4" stroke-opacity="0.23" stroke-width="0.6"/><path d="M298 42Q301 23 292 11" stroke="#a0b8bc" stroke-opacity="0.30" stroke-width="0.9"/><path d="M1322 42Q1319 21 1312 8" stroke="#a0b8cc" stroke-opacity="0.28" stroke-width="0.8"/><path d="M583 42Q584 36 599 32" stroke="#6e9890" stroke-opacity="0.30" stroke-width="1.5"/><path d="M586 40Q587 22 599 10" stroke="#a0b8bc" stroke-opacity="0.31" stroke-width="1.3"/><path d="M1348 41Q1341 24 1331 12" stroke="#a0b8cc" stroke-opacity="0.21" stroke-width="1.3"/><path d="M910 42Q914 30 918 22" stroke="#acc8cc" stroke-opacity="0.19" stroke-width="1.3"/><path d="M354 43Q357 28 356 19" stroke="#a0b8bc" stroke-opacity="0.37" stroke-width="1.6"/><path d="M873 42Q874 29 873 21" stroke="#acc8cc" stroke-opacity="0.24" stroke-width="1.1"/><path d="M593 43Q596 32 600 24" stroke="#9cbcc4" stroke-opacity="0.34" stroke-width="1.3"/><path d="M56 41Q57 18 44 2" stroke="#9cbcc4" stroke-opacity="0.26" stroke-width="1.0"/><path d="M1200 41Q1197 28 1200 20" stroke="#90a8c0" stroke-opacity="0.20" stroke-width="1.5"/><path d="M409 41Q405 16 395 -1" stroke="#6e9890" stroke-opacity="0.28" stroke-width="1.5"/><path d="M10 43Q6 29 5 21" stroke="#8fb0a4" stroke-opacity="0.42" stroke-width="1.6"/><path d="M889 41Q891 33 888 28" stroke="#8fb0a4" stroke-opacity="0.26" stroke-width="1.0"/><path d="M882 43Q881 31 868 24" stroke="#8fb0a4" stroke-opacity="0.32" stroke-width="0.7"/><path d="M1313 44Q1312 28 1297 18" stroke="#90a8c0" stroke-opacity="0.24" stroke-width="0.9"/><path d="M62 42Q62 26 75 15" stroke="#acc8cc" stroke-opacity="0.29" stroke-width="1.1"/><path d="M601 40Q601 32 618 26" stroke="#8fb0a4" stroke-opacity="0.38" stroke-width="0.6"/><path d="M869 43Q871 30 884 21" stroke="#7ca494" stroke-opacity="0.22" stroke-width="0.9"/><path d="M131 42Q126 22 121 9" stroke="#7ca494" stroke-opacity="0.30" stroke-width="0.8"/><path d="M292 41Q287 21 277 8" stroke="#a0b8bc" stroke-opacity="0.23" stroke-width="0.9"/><path d="M223 40Q219 24 206 14" stroke="#7ca494" stroke-opacity="0.25" stroke-width="1.3"/><path d="M764 41Q767 29 772 21" stroke="#9cbcc4" stroke-opacity="0.38" stroke-width="1.3"/><path d="M762 42Q760 36 774 32" stroke="#6e9890" stroke-opacity="0.35" stroke-width="1.1"/><path d="M643 43Q646 30 646 21" stroke="#acc8cc" stroke-opacity="0.36" stroke-width="0.7"/><path d="M1201 40Q1202 14 1191 -4" stroke="#a0b8cc" stroke-opacity="0.10" stroke-width="0.9"/><path d="M344 41Q339 15 327 -3" stroke="#a0b8bc" stroke-opacity="0.37" stroke-width="1.0"/><path d="M380 43Q383 17 381 -0" stroke="#6e9890" stroke-opacity="0.32" stroke-width="0.6"/><path d="M1092 42Q1094 18 1080 2" stroke="#8098b0" stroke-opacity="0.28" stroke-width="1.4"/><path d="M208 41Q213 17 220 1" stroke="#8fb0a4" stroke-opacity="0.37" stroke-width="1.5"/><path d="M119 41Q119 32 130 27" stroke="#acc8cc" stroke-opacity="0.36" stroke-width="1.0"/><path d="M1070 40Q1071 18 1084 3" stroke="#90a8c0" stroke-opacity="0.17" stroke-width="1.2"/><path d="M988 42Q990 35 997 30" stroke="#acc8cc" stroke-opacity="0.29" stroke-width="1.0"/><path d="M837 43Q840 26 836 15" stroke="#7ca494" stroke-opacity="0.29" stroke-width="1.5"/><path d="M564 40Q563 23 580 11" stroke="#a0b8bc" stroke-opacity="0.16" stroke-width="1.2"/><path d="M1250 41Q1250 19 1242 5" stroke="#8098b0" stroke-opacity="0.28" stroke-width="0.8"/><path d="M148 44Q153 25 165 12" stroke="#8fb0a4" stroke-opacity="0.34" stroke-width="1.1"/><path d="M225 44Q228 36 234 31" stroke="#acc8cc" stroke-opacity="0.38" stroke-width="1.4"/><path d="M114 44Q118 29 124 18" stroke="#7ca494" stroke-opacity="0.36" stroke-width="1.4"/><path d="M684 43Q688 30 699 22" stroke="#8fb0a4" stroke-opacity="0.41" stroke-width="1.2"/><path d="M1342 40Q1343 21 1352 8" stroke="#90a8c0" stroke-opacity="0.18" stroke-width="0.8"/><path d="M5 41Q8 18 22 2" stroke="#acc8cc" stroke-opacity="0.25" stroke-width="1.3"/><path d="M458 43Q460 21 458 7" stroke="#acc8cc" stroke-opacity="0.30" stroke-width="1.1"/><path d="M1262 43Q1257 17 1245 0" stroke="#8098b0" stroke-opacity="0.18" stroke-width="0.9"/><path d="M518 41Q520 21 531 9" stroke="#7ca494" stroke-opacity="0.25" stroke-width="1.2"/><path d="M1273 43Q1277 28 1290 18" stroke="#8098b0" stroke-opacity="0.19" stroke-width="1.1"/><path d="M437 40Q438 34 452 30" stroke="#7ca494" stroke-opacity="0.38" stroke-width="1.1"/><path d="M1175 40Q1177 29 1192 22" stroke="#8098b0" stroke-opacity="0.18" stroke-width="1.4"/><path d="M247 42Q243 16 231 -2" stroke="#9cbcc4" stroke-opacity="0.16" stroke-width="1.2"/><path d="M752 41Q759 30 770 23" stroke="#9cbcc4" stroke-opacity="0.25" stroke-width="0.8"/><path d="M375 41Q370 21 365 8" stroke="#7ca494" stroke-opacity="0.24" stroke-width="1.1"/><path d="M361 43Q358 18 353 2" stroke="#a0b8bc" stroke-opacity="0.20" stroke-width="0.7"/><path d="M1116 41Q1117 33 1100 27" stroke="#a0b8cc" stroke-opacity="0.26" stroke-width="1.4"/><path d="M551 40Q550 18 546 3" stroke="#acc8cc" stroke-opacity="0.17" stroke-width="1.4"/><path d="M1142 43Q1140 19 1129 4" stroke="#90a8c0" stroke-opacity="0.12" stroke-width="1.4"/><path d="M610 41Q609 29 616 22" stroke="#6e9890" stroke-opacity="0.26" stroke-width="1.3"/><path d="M627 44Q627 31 618 22" stroke="#7ca494" stroke-opacity="0.37" stroke-width="1.1"/><path d="M1002 41Q1005 20 1014 5" stroke="#6e9890" stroke-opacity="0.30" stroke-width="0.8"/><path d="M582 40Q584 25 571 14" stroke="#7ca494" stroke-opacity="0.28" stroke-width="1.3"/><path d="M942 41Q943 26 945 17" stroke="#8fb0a4" stroke-opacity="0.23" stroke-width="1.3"/><path d="M270 40Q269 19 260 5" stroke="#6e9890" stroke-opacity="0.20" stroke-width="1.6"/><path d="M896 43Q902 34 911 28" stroke="#6e9890" stroke-opacity="0.38" stroke-width="1.5"/><path d="M1300 41Q1305 23 1312 10" stroke="#a0b8cc" stroke-opacity="0.22" stroke-width="1.0"/><path d="M834 40Q837 31 838 25" stroke="#7ca494" stroke-opacity="0.18" stroke-width="1.5"/><path d="M1080 42Q1075 21 1069 7" stroke="#90a8c0" stroke-opacity="0.23" stroke-width="0.8"/><path d="M604 43Q601 37 610 33" stroke="#9cbcc4" stroke-opacity="0.32" stroke-width="1.2"/><path d="M1246 42Q1241 18 1236 1" stroke="#a0b8cc" stroke-opacity="0.22" stroke-width="1.0"/><path d="M105 41Q100 18 99 3" stroke="#acc8cc" stroke-opacity="0.23" stroke-width="1.6"/><path d="M877 40Q875 27 882 18" stroke="#a0b8bc" stroke-opacity="0.28" stroke-width="1.5"/><path d="M814 41Q812 26 804 17" stroke="#acc8cc" stroke-opacity="0.42" stroke-width="0.8"/><path d="M869 41Q872 32 864 27" stroke="#acc8cc" stroke-opacity="0.25" stroke-width="1.4"/><path d="M822 42Q817 31 806 24" stroke="#7ca494" stroke-opacity="0.37" stroke-width="0.9"/><path d="M347 43Q345 20 356 4" stroke="#7ca494" stroke-opacity="0.30" stroke-width="0.6"/><path d="M1073 42Q1071 20 1084 6" stroke="#8098b0" stroke-opacity="0.22" stroke-width="1.5"/><path d="M643 43Q638 34 631 28" stroke="#8fb0a4" stroke-opacity="0.40" stroke-width="1.5"/><path d="M354 42Q351 28 355 19" stroke="#9cbcc4" stroke-opacity="0.25" stroke-width="1.0"/><path d="M1209 44Q1213 20 1209 4" stroke="#8098b0" stroke-opacity="0.08" stroke-width="1.4"/><path d="M1059 43Q1060 34 1053 28" stroke="#8fb0a4" stroke-opacity="0.33" stroke-width="1.2"/><path d="M1234 42Q1233 26 1236 15" stroke="#8098b0" stroke-opacity="0.27" stroke-width="1.0"/><path d="M-9 42Q-10 37 -7 33" stroke="#9cbcc4" stroke-opacity="0.21" stroke-width="1.3"/><path d="M742 43Q739 31 734 23" stroke="#6e9890" stroke-opacity="0.25" stroke-width="1.0"/><path d="M284 41Q279 20 280 6" stroke="#acc8cc" stroke-opacity="0.20" stroke-width="1.1"/><path d="M593 41Q594 28 578 20" stroke="#7ca494" stroke-opacity="0.32" stroke-width="1.5"/><path d="M907 40Q906 30 896 23" stroke="#9cbcc4" stroke-opacity="0.39" stroke-width="1.5"/><path d="M271 42Q269 35 256 30" stroke="#9cbcc4" stroke-opacity="0.29" stroke-width="1.0"/><path d="M927 41Q925 25 918 14" stroke="#6e9890" stroke-opacity="0.22" stroke-width="1.5"/><path d="M1239 42Q1237 18 1231 1" stroke="#a0b8cc" stroke-opacity="0.23" stroke-width="1.1"/><path d="M1161 43Q1157 30 1152 22" stroke="#a0b8cc" stroke-opacity="0.19" stroke-width="1.1"/><path d="M396 43Q398 25 390 13" stroke="#7ca494" stroke-opacity="0.37" stroke-width="0.7"/><path d="M364 44Q364 24 369 12" stroke="#8fb0a4" stroke-opacity="0.17" stroke-width="0.7"/><path d="M903 42Q898 30 898 22" stroke="#9cbcc4" stroke-opacity="0.32" stroke-width="1.3"/><path d="M293 43Q292 18 291 1" stroke="#9cbcc4" stroke-opacity="0.32" stroke-width="0.7"/><path d="M777 42Q777 30 794 21" stroke="#6e9890" stroke-opacity="0.19" stroke-width="0.9"/><path d="M166 43Q165 29 151 21" stroke="#a0b8bc" stroke-opacity="0.27" stroke-width="1.5"/><path d="M444 44Q447 23 441 9" stroke="#7ca494" stroke-opacity="0.20" stroke-width="1.4"/><path d="M877 44Q873 35 861 29" stroke="#acc8cc" stroke-opacity="0.42" stroke-width="1.0"/><path d="M364 40Q362 30 367 23" stroke="#a0b8bc" stroke-opacity="0.23" stroke-width="0.9"/><path d="M498 41Q499 19 510 5" stroke="#9cbcc4" stroke-opacity="0.36" stroke-width="1.4"/><path d="M331 42Q331 31 318 24" stroke="#7ca494" stroke-opacity="0.30" stroke-width="1.6"/><path d="M460 43Q463 20 476 5" stroke="#8fb0a4" stroke-opacity="0.20" stroke-width="1.4"/><path d="M189 41Q191 19 174 5" stroke="#8fb0a4" stroke-opacity="0.40" stroke-width="1.4"/><path d="M1155 43Q1152 38 1148 34" stroke="#90a8c0" stroke-opacity="0.11" stroke-width="1.6"/><path d="M1359 40Q1354 32 1346 27" stroke="#8098b0" stroke-opacity="0.15" stroke-width="1.4"/><path d="M241 41Q237 27 242 18" stroke="#7ca494" stroke-opacity="0.20" stroke-width="0.7"/><path d="M482 43Q485 25 477 13" stroke="#acc8cc" stroke-opacity="0.37" stroke-width="1.0"/><path d="M1265 42Q1268 17 1257 -0" stroke="#8098b0" stroke-opacity="0.14" stroke-width="1.4"/><path d="M603 43Q599 28 594 19" stroke="#6e9890" stroke-opacity="0.42" stroke-width="1.2"/><path d="M1069 43Q1072 31 1076 24" stroke="#a0b8cc" stroke-opacity="0.14" stroke-width="1.1"/><path d="M285 41Q284 16 289 -1" stroke="#9cbcc4" stroke-opacity="0.26" stroke-width="0.8"/><path d="M423 44Q423 33 435 27" stroke="#6e9890" stroke-opacity="0.29" stroke-width="0.7"/><path d="M310 44Q307 24 305 10" stroke="#acc8cc" stroke-opacity="0.23" stroke-width="1.5"/><path d="M614 41Q610 35 608 30" stroke="#8fb0a4" stroke-opacity="0.30" stroke-width="1.2"/><path d="M492 40Q491 28 484 19" stroke="#7ca494" stroke-opacity="0.29" stroke-width="0.7"/><path d="M32 43Q34 18 27 2" stroke="#9cbcc4" stroke-opacity="0.23" stroke-width="1.6"/><path d="M1304 40Q1302 20 1316 7" stroke="#90a8c0" stroke-opacity="0.17" stroke-width="0.8"/><path d="M1274 41Q1272 17 1268 1" stroke="#a0b8cc" stroke-opacity="0.15" stroke-width="1.6"/><path d="M83 43Q88 32 90 25" stroke="#acc8cc" stroke-opacity="0.35" stroke-width="1.1"/><path d="M1059 43Q1054 31 1043 22" stroke="#acc8cc" stroke-opacity="0.19" stroke-width="1.4"/><path d="M470 42Q472 17 457 1" stroke="#acc8cc" stroke-opacity="0.29" stroke-width="1.3"/><path d="M643 41Q642 29 632 21" stroke="#8fb0a4" stroke-opacity="0.34" stroke-width="1.3"/><path d="M1091 42Q1085 21 1079 7" stroke="#8098b0" stroke-opacity="0.27" stroke-width="0.9"/><path d="M765 42Q765 27 767 16" stroke="#9cbcc4" stroke-opacity="0.19" stroke-width="1.3"/><path d="M736 40Q737 29 723 21" stroke="#acc8cc" stroke-opacity="0.41" stroke-width="0.8"/><path d="M857 43Q860 36 851 31" stroke="#a0b8bc" stroke-opacity="0.15" stroke-width="1.0"/><path d="M408 41Q411 18 418 3" stroke="#9cbcc4" stroke-opacity="0.39" stroke-width="1.2"/><path d="M233 43Q232 34 246 28" stroke="#acc8cc" stroke-opacity="0.24" stroke-width="0.8"/><path d="M549 40Q550 34 542 30" stroke="#acc8cc" stroke-opacity="0.18" stroke-width="0.7"/><path d="M1117 42Q1119 28 1118 18" stroke="#90a8c0" stroke-opacity="0.27" stroke-width="1.5"/><path d="M106 43Q106 22 115 8" stroke="#7ca494" stroke-opacity="0.26" stroke-width="1.4"/><path d="M1281 44Q1285 23 1294 9" stroke="#8098b0" stroke-opacity="0.27" stroke-width="1.0"/><path d="M312 42Q309 17 296 1" stroke="#8fb0a4" stroke-opacity="0.31" stroke-width="0.7"/><path d="M1128 43Q1127 24 1134 11" stroke="#8098b0" stroke-opacity="0.22" stroke-width="1.3"/><path d="M1278 42Q1279 24 1280 12" stroke="#90a8c0" stroke-opacity="0.15" stroke-width="1.1"/><path d="M241 43Q236 23 225 9" stroke="#9cbcc4" stroke-opacity="0.36" stroke-width="1.6"/><path d="M746 44Q742 35 741 29" stroke="#8fb0a4" stroke-opacity="0.20" stroke-width="1.3"/><path d="M575 41Q574 34 587 30" stroke="#9cbcc4" stroke-opacity="0.29" stroke-width="1.1"/><path d="M1255 40Q1257 19 1257 4" stroke="#8098b0" stroke-opacity="0.11" stroke-width="1.5"/><path d="M25 43Q28 21 35 6" stroke="#9cbcc4" stroke-opacity="0.33" stroke-width="0.7"/><path d="M914 42Q913 24 930 12" stroke="#8fb0a4" stroke-opacity="0.32" stroke-width="0.7"/><path d="M2 44Q-2 25 6 13" stroke="#8fb0a4" stroke-opacity="0.23" stroke-width="0.7"/><path d="M644 42Q638 27 630 17" stroke="#6e9890" stroke-opacity="0.31" stroke-width="1.1"/><path d="M282 42Q277 36 269 32" stroke="#7ca494" stroke-opacity="0.39" stroke-width="1.5"/><path d="M601 43Q605 33 611 26" stroke="#7ca494" stroke-opacity="0.29" stroke-width="0.9"/><path d="M587 42Q588 34 592 29" stroke="#9cbcc4" stroke-opacity="0.25" stroke-width="1.3"/><path d="M213 40Q217 18 217 3" stroke="#9cbcc4" stroke-opacity="0.31" stroke-width="1.4"/><path d="M1295 44Q1296 22 1298 8" stroke="#90a8c0" stroke-opacity="0.18" stroke-width="1.1"/><path d="M555 43Q559 20 558 6" stroke="#7ca494" stroke-opacity="0.33" stroke-width="1.0"/><path d="M1104 44Q1103 23 1119 10" stroke="#90a8c0" stroke-opacity="0.21" stroke-width="1.0"/><path d="M1196 41Q1193 33 1196 27" stroke="#90a8c0" stroke-opacity="0.18" stroke-width="0.7"/><path d="M1189 41Q1189 30 1192 22" stroke="#90a8c0" stroke-opacity="0.21" stroke-width="1.0"/><path d="M850 43Q847 28 847 18" stroke="#6e9890" stroke-opacity="0.23" stroke-width="1.0"/><path d="M1354 42Q1356 29 1355 20" stroke="#90a8c0" stroke-opacity="0.20" stroke-width="1.2"/><path d="M726 40Q727 32 740 27" stroke="#6e9890" stroke-opacity="0.40" stroke-width="1.3"/><path d="M1165 41Q1167 33 1151 27" stroke="#a0b8cc" stroke-opacity="0.17" stroke-width="1.0"/><path d="M384 43Q389 25 400 12" stroke="#8fb0a4" stroke-opacity="0.37" stroke-width="0.8"/><path d="M785 43Q783 35 785 30" stroke="#6e9890" stroke-opacity="0.36" stroke-width="0.8"/><path d="M1138 42Q1140 22 1140 9" stroke="#90a8c0" stroke-opacity="0.17" stroke-width="1.6"/><path d="M903 41Q903 27 911 17" stroke="#8fb0a4" stroke-opacity="0.32" stroke-width="1.3"/><path d="M1117 42Q1114 31 1106 24" stroke="#90a8c0" stroke-opacity="0.23" stroke-width="0.9"/><path d="M1181 41Q1176 20 1174 6" stroke="#a0b8cc" stroke-opacity="0.20" stroke-width="1.3"/><path d="M896 43Q892 36 889 32" stroke="#a0b8bc" stroke-opacity="0.35" stroke-width="1.1"/><path d="M175 42Q178 27 184 16" stroke="#8fb0a4" stroke-opacity="0.40" stroke-width="1.3"/><path d="M666 42Q668 35 666 31" stroke="#9cbcc4" stroke-opacity="0.28" stroke-width="1.1"/><path d="M473 43Q470 22 467 8" stroke="#acc8cc" stroke-opacity="0.18" stroke-width="0.8"/><path d="M474 40Q476 30 490 23" stroke="#a0b8bc" stroke-opacity="0.18" stroke-width="0.7"/><path d="M1177 40Q1177 29 1172 21" stroke="#8098b0" stroke-opacity="0.09" stroke-width="1.5"/><path d="M530 42Q531 36 525 33" stroke="#9cbcc4" stroke-opacity="0.19" stroke-width="1.4"/><path d="M1270 42Q1271 30 1256 21" stroke="#90a8c0" stroke-opacity="0.22" stroke-width="1.3"/><path d="M864 42Q861 32 850 25" stroke="#acc8cc" stroke-opacity="0.24" stroke-width="1.2"/><path d="M1079 41Q1077 18 1066 2" stroke="#a0b8cc" stroke-opacity="0.15" stroke-width="1.4"/><path d="M253 43Q254 26 242 15" stroke="#6e9890" stroke-opacity="0.26" stroke-width="0.6"/><path d="M226 43Q222 27 221 16" stroke="#8fb0a4" stroke-opacity="0.17" stroke-width="1.2"/><path d="M826 42Q825 34 813 30" stroke="#6e9890" stroke-opacity="0.27" stroke-width="1.2"/><path d="M581 41Q582 33 578 28" stroke="#acc8cc" stroke-opacity="0.32" stroke-width="0.7"/><path d="M758 44Q757 30 753 21" stroke="#acc8cc" stroke-opacity="0.42" stroke-width="1.4"/><path d="M411 40Q413 28 427 20" stroke="#a0b8bc" stroke-opacity="0.25" stroke-width="0.6"/><path d="M1348 42Q1349 30 1362 23" stroke="#8098b0" stroke-opacity="0.23" stroke-width="1.1"/><path d="M362 40Q365 16 373 -0" stroke="#9cbcc4" stroke-opacity="0.32" stroke-width="0.7"/><path d="M797 41Q795 35 794 31" stroke="#6e9890" stroke-opacity="0.26" stroke-width="0.7"/><path d="M1222 42Q1223 20 1221 4" stroke="#a0b8cc" stroke-opacity="0.24" stroke-width="1.5"/><path d="M1023 43Q1019 31 1021 22" stroke="#acc8cc" stroke-opacity="0.25" stroke-width="0.8"/><path d="M103 44Q102 34 106 27" stroke="#6e9890" stroke-opacity="0.23" stroke-width="0.9"/><path d="M244 43Q242 37 250 32" stroke="#acc8cc" stroke-opacity="0.40" stroke-width="1.4"/><path d="M457 44Q461 22 470 8" stroke="#acc8cc" stroke-opacity="0.27" stroke-width="0.8"/><path d="M758 43Q761 28 771 18" stroke="#7ca494" stroke-opacity="0.19" stroke-width="1.0"/><path d="M877 42Q877 33 859 26" stroke="#acc8cc" stroke-opacity="0.28" stroke-width="1.0"/><path d="M342 41Q338 33 339 28" stroke="#9cbcc4" stroke-opacity="0.23" stroke-width="1.4"/><path d="M573 41Q574 33 573 28" stroke="#6e9890" stroke-opacity="0.23" stroke-width="1.2"/><path d="M169 40Q164 32 156 27" stroke="#9cbcc4" stroke-opacity="0.22" stroke-width="1.1"/><path d="M675 40Q674 25 677 15" stroke="#a0b8bc" stroke-opacity="0.18" stroke-width="1.6"/><path d="M226 43Q226 37 239 33" stroke="#a0b8bc" stroke-opacity="0.19" stroke-width="0.8"/><path d="M982 44Q978 38 969 35" stroke="#6e9890" stroke-opacity="0.33" stroke-width="1.1"/><path d="M584 43Q582 33 571 26" stroke="#acc8cc" stroke-opacity="0.36" stroke-width="1.4"/><path d="M871 44Q869 36 873 30" stroke="#7ca494" stroke-opacity="0.42" stroke-width="0.7"/><path d="M1122 42Q1127 33 1131 27" stroke="#90a8c0" stroke-opacity="0.19" stroke-width="1.4"/><path d="M476 44Q477 26 477 14" stroke="#7ca494" stroke-opacity="0.40" stroke-width="1.1"/><path d="M544 42Q548 35 546 30" stroke="#6e9890" stroke-opacity="0.39" stroke-width="1.3"/><path d="M535 43Q535 34 551 27" stroke="#6e9890" stroke-opacity="0.19" stroke-width="0.7"/><path d="M648 41Q650 25 647 15" stroke="#9cbcc4" stroke-opacity="0.17" stroke-width="0.7"/><path d="M961 44Q966 32 972 24" stroke="#7ca494" stroke-opacity="0.27" stroke-width="1.3"/><path d="M613 40Q616 34 614 30" stroke="#7ca494" stroke-opacity="0.39" stroke-width="1.5"/><path d="M1351 40Q1346 31 1341 25" stroke="#a0b8cc" stroke-opacity="0.24" stroke-width="0.7"/><path d="M954 42Q954 34 950 29" stroke="#acc8cc" stroke-opacity="0.17" stroke-width="0.9"/><path d="M705 41Q705 28 695 19" stroke="#7ca494" stroke-opacity="0.19" stroke-width="1.3"/><path d="M1152 41Q1151 33 1145 29" stroke="#90a8c0" stroke-opacity="0.13" stroke-width="0.8"/><path d="M529 43Q528 29 523 20" stroke="#7ca494" stroke-opacity="0.36" stroke-width="1.0"/><path d="M994 40Q995 27 995 18" stroke="#8fb0a4" stroke-opacity="0.20" stroke-width="1.5"/><path d="M307 43Q305 20 300 4" stroke="#acc8cc" stroke-opacity="0.40" stroke-width="1.4"/><path d="M709 41Q709 26 726 17" stroke="#acc8cc" stroke-opacity="0.29" stroke-width="0.8"/><path d="M1003 44Q1000 30 991 21" stroke="#a0b8bc" stroke-opacity="0.19" stroke-width="0.9"/><path d="M720 42Q722 27 713 18" stroke="#8fb0a4" stroke-opacity="0.36" stroke-width="0.8"/><path d="M986 42Q987 34 1002 30" stroke="#7ca494" stroke-opacity="0.16" stroke-width="1.3"/><path d="M1353 42Q1355 33 1356 26" stroke="#90a8c0" stroke-opacity="0.23" stroke-width="0.6"/><path d="M1125 40Q1120 19 1116 5" stroke="#90a8c0" stroke-opacity="0.25" stroke-width="1.4"/><path d="M194 41Q198 34 198 29" stroke="#a0b8bc" stroke-opacity="0.41" stroke-width="0.7"/><path d="M362 42Q361 27 359 17" stroke="#9cbcc4" stroke-opacity="0.41" stroke-width="1.4"/><path d="M469 41Q464 35 452 30" stroke="#6e9890" stroke-opacity="0.21" stroke-width="0.7"/><path d="M696 43Q700 28 695 17" stroke="#7ca494" stroke-opacity="0.37" stroke-width="1.5"/><path d="M339 42Q342 26 333 15" stroke="#a0b8bc" stroke-opacity="0.39" stroke-width="1.3"/><path d="M1198 41Q1195 19 1186 4" stroke="#a0b8cc" stroke-opacity="0.27" stroke-width="1.6"/><path d="M253 40Q253 19 266 5" stroke="#8fb0a4" stroke-opacity="0.39" stroke-width="0.8"/><path d="M1169 43Q1167 34 1156 28" stroke="#90a8c0" stroke-opacity="0.17" stroke-width="0.8"/><path d="M1059 42Q1062 34 1057 29" stroke="#a0b8bc" stroke-opacity="0.33" stroke-width="0.6"/><path d="M814 43Q817 34 826 27" stroke="#9cbcc4" stroke-opacity="0.31" stroke-width="0.9"/><path d="M270 42Q275 34 284 29" stroke="#6e9890" stroke-opacity="0.34" stroke-width="0.8"/><path d="M974 40Q973 25 964 14" stroke="#8fb0a4" stroke-opacity="0.41" stroke-width="1.2"/><path d="M565 41Q562 24 557 13" stroke="#7ca494" stroke-opacity="0.29" stroke-width="1.6"/><path d="M977 41Q982 28 987 19" stroke="#acc8cc" stroke-opacity="0.25" stroke-width="1.2"/><path d="M1298 42Q1299 36 1302 31" stroke="#8098b0" stroke-opacity="0.23" stroke-width="1.0"/><path d="M948 42Q947 26 938 15" stroke="#6e9890" stroke-opacity="0.34" stroke-width="0.8"/><path d="M635 44Q631 30 623 21" stroke="#8fb0a4" stroke-opacity="0.31" stroke-width="0.9"/><path d="M1330 42Q1329 26 1344 16" stroke="#90a8c0" stroke-opacity="0.24" stroke-width="1.5"/><path d="M1194 42Q1193 28 1192 19" stroke="#90a8c0" stroke-opacity="0.16" stroke-width="1.2"/><path d="M339 41Q339 23 329 10" stroke="#6e9890" stroke-opacity="0.38" stroke-width="1.6"/><path d="M866 42Q867 29 854 20" stroke="#acc8cc" stroke-opacity="0.17" stroke-width="0.8"/><path d="M33 42Q35 31 33 23" stroke="#acc8cc" stroke-opacity="0.16" stroke-width="1.3"/><path d="M495 44Q491 22 479 8" stroke="#7ca494" stroke-opacity="0.35" stroke-width="1.5"/><path d="M551 42Q549 23 552 10" stroke="#7ca494" stroke-opacity="0.27" stroke-width="1.2"/><path d="M879 44Q879 29 863 20" stroke="#8fb0a4" stroke-opacity="0.35" stroke-width="1.4"/><path d="M1362 41Q1356 31 1344 25" stroke="#90a8c0" stroke-opacity="0.12" stroke-width="1.0"/><path d="M1137 43Q1141 30 1142 21" stroke="#a0b8cc" stroke-opacity="0.26" stroke-width="1.4"/><path d="M316 40Q318 34 311 30" stroke="#6e9890" stroke-opacity="0.41" stroke-width="1.3"/><path d="M170 44Q175 25 184 12" stroke="#8fb0a4" stroke-opacity="0.25" stroke-width="0.7"/><path d="M606 42Q608 37 599 33" stroke="#a0b8bc" stroke-opacity="0.31" stroke-width="1.4"/><path d="M1355 41Q1356 22 1349 10" stroke="#a0b8cc" stroke-opacity="0.23" stroke-width="1.3"/><path d="M26 40Q26 22 29 9" stroke="#acc8cc" stroke-opacity="0.31" stroke-width="0.9"/><path d="M1167 40Q1167 18 1179 2" stroke="#90a8c0" stroke-opacity="0.19" stroke-width="0.6"/><path d="M276 41Q275 26 274 15" stroke="#8fb0a4" stroke-opacity="0.17" stroke-width="0.6"/><path d="M1321 44Q1321 36 1306 31" stroke="#8098b0" stroke-opacity="0.10" stroke-width="1.5"/><path d="M449 42Q448 19 436 3" stroke="#7ca494" stroke-opacity="0.27" stroke-width="1.4"/><path d="M818 44Q823 28 827 17" stroke="#9cbcc4" stroke-opacity="0.39" stroke-width="1.4"/><path d="M246 42Q248 21 245 7" stroke="#acc8cc" stroke-opacity="0.38" stroke-width="1.1"/><path d="M145 41Q148 25 160 14" stroke="#acc8cc" stroke-opacity="0.37" stroke-width="0.8"/><path d="M435 42Q434 37 427 34" stroke="#a0b8bc" stroke-opacity="0.37" stroke-width="1.4"/><path d="M1028 42Q1024 30 1014 23" stroke="#7ca494" stroke-opacity="0.32" stroke-width="1.4"/><path d="M930 42Q928 24 929 12" stroke="#6e9890" stroke-opacity="0.17" stroke-width="1.6"/><path d="M991 43Q993 38 979 34" stroke="#6e9890" stroke-opacity="0.18" stroke-width="1.2"/><path d="M1126 40Q1126 31 1110 25" stroke="#90a8c0" stroke-opacity="0.27" stroke-width="0.8"/><path d="M1205 43Q1202 18 1201 1" stroke="#90a8c0" stroke-opacity="0.18" stroke-width="1.5"/><path d="M479 41Q480 35 472 30" stroke="#7ca494" stroke-opacity="0.19" stroke-width="0.8"/><path d="M1076 40Q1075 25 1079 14" stroke="#a0b8cc" stroke-opacity="0.17" stroke-width="0.8"/><path d="M58 40Q54 24 48 13" stroke="#acc8cc" stroke-opacity="0.28" stroke-width="0.8"/><path d="M1317 43Q1316 26 1319 15" stroke="#a0b8cc" stroke-opacity="0.16" stroke-width="0.9"/><path d="M622 41Q622 24 623 12" stroke="#7ca494" stroke-opacity="0.42" stroke-width="0.9"/><path d="M92 40Q90 16 84 -1" stroke="#7ca494" stroke-opacity="0.36" stroke-width="1.0"/><path d="M384 41Q388 35 395 32" stroke="#6e9890" stroke-opacity="0.21" stroke-width="0.9"/><path d="M1111 43Q1107 19 1109 3" stroke="#8098b0" stroke-opacity="0.20" stroke-width="1.5"/><path d="M1107 41Q1107 18 1107 3" stroke="#a0b8cc" stroke-opacity="0.28" stroke-width="0.7"/><path d="M1196 43Q1192 35 1187 31" stroke="#a0b8cc" stroke-opacity="0.23" stroke-width="0.9"/><path d="M1040 41Q1044 22 1050 10" stroke="#acc8cc" stroke-opacity="0.15" stroke-width="0.7"/><path d="M1095 42Q1096 29 1083 19" stroke="#8098b0" stroke-opacity="0.16" stroke-width="0.7"/><path d="M663 44Q660 33 671 26" stroke="#7ca494" stroke-opacity="0.38" stroke-width="1.3"/><path d="M123 42Q119 32 121 26" stroke="#6e9890" stroke-opacity="0.29" stroke-width="0.6"/><path d="M361 41Q362 15 376 -2" stroke="#7ca494" stroke-opacity="0.33" stroke-width="1.2"/><path d="M993 41Q991 30 976 23" stroke="#7ca494" stroke-opacity="0.19" stroke-width="1.3"/><path d="M1048 41Q1042 26 1032 16" stroke="#a0b8bc" stroke-opacity="0.15" stroke-width="1.0"/><path d="M1112 43Q1111 38 1119 35" stroke="#a0b8cc" stroke-opacity="0.08" stroke-width="1.0"/><path d="M1317 41Q1317 26 1309 17" stroke="#8098b0" stroke-opacity="0.28" stroke-width="1.0"/><path d="M455 43Q458 30 449 20" stroke="#a0b8bc" stroke-opacity="0.30" stroke-width="1.6"/><path d="M1366 41Q1361 30 1355 22" stroke="#a0b8cc" stroke-opacity="0.16" stroke-width="1.1"/><path d="M1356 42Q1352 25 1341 15" stroke="#8098b0" stroke-opacity="0.17" stroke-width="0.7"/><path d="M739 41Q738 30 735 23" stroke="#a0b8bc" stroke-opacity="0.18" stroke-width="1.5"/><path d="M423 43Q420 38 423 35" stroke="#8fb0a4" stroke-opacity="0.26" stroke-width="1.5"/><path d="M705 42Q701 29 700 20" stroke="#acc8cc" stroke-opacity="0.39" stroke-width="1.4"/><path d="M820 44Q822 36 812 30" stroke="#acc8cc" stroke-opacity="0.36" stroke-width="0.7"/><path d="M269 43Q268 27 254 16" stroke="#7ca494" stroke-opacity="0.36" stroke-width="0.8"/><path d="M935 43Q936 36 940 32" stroke="#6e9890" stroke-opacity="0.27" stroke-width="0.8"/><path d="M59 42Q61 27 59 16" stroke="#a0b8bc" stroke-opacity="0.24" stroke-width="1.3"/><path d="M329 43Q332 34 328 27" stroke="#6e9890" stroke-opacity="0.29" stroke-width="1.0"/><path d="M247 41Q244 34 243 30" stroke="#a0b8bc" stroke-opacity="0.40" stroke-width="0.7"/><path d="M699 42Q696 25 690 14" stroke="#a0b8bc" stroke-opacity="0.36" stroke-width="0.9"/><path d="M442 44Q448 27 458 16" stroke="#acc8cc" stroke-opacity="0.39" stroke-width="0.7"/><path d="M626 42Q622 25 611 13" stroke="#9cbcc4" stroke-opacity="0.32" stroke-width="0.6"/><path d="M68 41Q66 30 70 23" stroke="#a0b8bc" stroke-opacity="0.41" stroke-width="0.6"/><path d="M671 41Q672 33 667 28" stroke="#8fb0a4" stroke-opacity="0.22" stroke-width="0.8"/><path d="M398 41Q395 22 385 10" stroke="#6e9890" stroke-opacity="0.33" stroke-width="1.2"/><path d="M387 41Q386 25 404 13" stroke="#acc8cc" stroke-opacity="0.16" stroke-width="1.5"/><path d="M518 40Q518 31 516 25" stroke="#acc8cc" stroke-opacity="0.32" stroke-width="0.6"/><path d="M712 43Q715 36 716 30" stroke="#9cbcc4" stroke-opacity="0.24" stroke-width="0.6"/><path d="M399 42Q401 34 406 29" stroke="#8fb0a4" stroke-opacity="0.17" stroke-width="0.8"/><path d="M624 41Q625 33 613 28" stroke="#8fb0a4" stroke-opacity="0.19" stroke-width="0.9"/><path d="M672 42Q668 27 667 16" stroke="#6e9890" stroke-opacity="0.41" stroke-width="1.5"/><path d="M-0 42Q1 19 5 3" stroke="#8fb0a4" stroke-opacity="0.17" stroke-width="1.2"/><path d="M92 40Q93 14 104 -4" stroke="#8fb0a4" stroke-opacity="0.35" stroke-width="1.6"/><path d="M818 42Q814 30 818 22" stroke="#acc8cc" stroke-opacity="0.17" stroke-width="1.4"/><path d="M-4 43Q-9 28 -10 18" stroke="#8fb0a4" stroke-opacity="0.33" stroke-width="1.6"/><path d="M775 41Q776 34 787 29" stroke="#acc8cc" stroke-opacity="0.40" stroke-width="1.2"/><path d="M578 43Q578 28 595 18" stroke="#6e9890" stroke-opacity="0.30" stroke-width="1.1"/><path d="M467 43Q463 29 453 20" stroke="#7ca494" stroke-opacity="0.29" stroke-width="0.8"/><path d="M115 43Q114 29 116 19" stroke="#8fb0a4" stroke-opacity="0.24" stroke-width="1.5"/><path d="M280 40Q282 17 275 1" stroke="#8fb0a4" stroke-opacity="0.29" stroke-width="1.0"/><path d="M47 41Q49 28 54 19" stroke="#a0b8bc" stroke-opacity="0.21" stroke-width="0.8"/><path d="M577 41Q575 35 565 31" stroke="#acc8cc" stroke-opacity="0.16" stroke-width="1.4"/><path d="M776 43Q779 31 775 23" stroke="#7ca494" stroke-opacity="0.19" stroke-width="1.1"/><path d="M632 43Q634 25 633 13" stroke="#6e9890" stroke-opacity="0.28" stroke-width="0.9"/><path d="M1359 40Q1357 23 1363 11" stroke="#a0b8cc" stroke-opacity="0.23" stroke-width="1.3"/><path d="M435 43Q432 26 420 15" stroke="#acc8cc" stroke-opacity="0.23" stroke-width="1.0"/><path d="M738 41Q737 23 727 12" stroke="#8fb0a4" stroke-opacity="0.21" stroke-width="1.3"/><path d="M1105 43Q1106 35 1118 29" stroke="#90a8c0" stroke-opacity="0.21" stroke-width="0.7"/><path d="M745 44Q746 37 728 32" stroke="#9cbcc4" stroke-opacity="0.18" stroke-width="0.9"/><path d="M1199 41Q1200 27 1214 17" stroke="#8098b0" stroke-opacity="0.21" stroke-width="1.5"/><path d="M1320 41Q1320 32 1336 26" stroke="#a0b8cc" stroke-opacity="0.18" stroke-width="1.3"/><path d="M365 44Q360 20 356 3" stroke="#7ca494" stroke-opacity="0.35" stroke-width="1.3"/><path d="M1153 42Q1150 34 1151 29" stroke="#a0b8cc" stroke-opacity="0.14" stroke-width="1.3"/><path d="M73 41Q70 30 62 22" stroke="#6e9890" stroke-opacity="0.16" stroke-width="1.4"/><path d="M1187 44Q1188 27 1177 15" stroke="#90a8c0" stroke-opacity="0.26" stroke-width="1.0"/><path d="M1187 41Q1189 27 1186 18" stroke="#a0b8cc" stroke-opacity="0.13" stroke-width="0.8"/><path d="M751 40Q754 32 751 26" stroke="#8fb0a4" stroke-opacity="0.39" stroke-width="1.0"/><path d="M546 43Q545 23 550 10" stroke="#8fb0a4" stroke-opacity="0.24" stroke-width="1.3"/><path d="M283 43Q284 25 266 12" stroke="#8fb0a4" stroke-opacity="0.17" stroke-width="0.9"/><path d="M660 40Q657 35 649 32" stroke="#8fb0a4" stroke-opacity="0.22" stroke-width="0.8"/><path d="M1162 41Q1160 32 1152 26" stroke="#90a8c0" stroke-opacity="0.23" stroke-width="1.5"/><path d="M228 43Q225 34 212 27" stroke="#6e9890" stroke-opacity="0.31" stroke-width="1.4"/><path d="M14 41Q18 35 31 31" stroke="#6e9890" stroke-opacity="0.38" stroke-width="1.4"/><path d="M6 44Q2 21 4 6" stroke="#8fb0a4" stroke-opacity="0.42" stroke-width="1.2"/><path d="M492 44Q491 33 485 26" stroke="#6e9890" stroke-opacity="0.34" stroke-width="0.7"/><path d="M1053 42Q1054 35 1042 30" stroke="#7ca494" stroke-opacity="0.33" stroke-width="1.5"/><path d="M665 42Q663 31 657 23" stroke="#6e9890" stroke-opacity="0.15" stroke-width="0.7"/><path d="M1342 41Q1338 36 1325 32" stroke="#a0b8cc" stroke-opacity="0.22" stroke-width="0.6"/><path d="M115 43Q112 21 114 6" stroke="#6e9890" stroke-opacity="0.40" stroke-width="0.9"/><path d="M265 42Q265 29 257 21" stroke="#6e9890" stroke-opacity="0.36" stroke-width="1.5"/><path d="M760 43Q755 32 753 25" stroke="#a0b8bc" stroke-opacity="0.16" stroke-width="1.2"/><path d="M98 44Q92 31 83 23" stroke="#8fb0a4" stroke-opacity="0.29" stroke-width="1.1"/><path d="M795 42Q797 35 794 31" stroke="#a0b8bc" stroke-opacity="0.23" stroke-width="1.2"/><path d="M748 43Q747 28 749 17" stroke="#7ca494" stroke-opacity="0.40" stroke-width="0.6"/><path d="M1372 42Q1375 37 1365 33" stroke="#a0b8cc" stroke-opacity="0.15" stroke-width="1.0"/><path d="M368 43Q363 31 355 24" stroke="#8fb0a4" stroke-opacity="0.24" stroke-width="0.7"/><path d="M1126 44Q1127 19 1139 3" stroke="#a0b8cc" stroke-opacity="0.21" stroke-width="1.4"/><path d="M826 42Q831 25 832 14" stroke="#8fb0a4" stroke-opacity="0.26" stroke-width="0.7"/><path d="M54 44Q55 36 60 30" stroke="#6e9890" stroke-opacity="0.31" stroke-width="1.1"/><path d="M536 42Q537 19 529 5" stroke="#acc8cc" stroke-opacity="0.18" stroke-width="1.2"/><path d="M930 44Q929 30 920 21" stroke="#8fb0a4" stroke-opacity="0.25" stroke-width="1.0"/><path d="M13 41Q12 29 11 20" stroke="#9cbcc4" stroke-opacity="0.34" stroke-width="0.8"/><path d="M122 41Q121 29 108 22" stroke="#a0b8bc" stroke-opacity="0.25" stroke-width="0.7"/><path d="M701 44Q701 37 693 33" stroke="#7ca494" stroke-opacity="0.17" stroke-width="1.0"/><path d="M910 44Q910 36 914 31" stroke="#7ca494" stroke-opacity="0.27" stroke-width="0.8"/><path d="M1219 42Q1217 17 1217 -0" stroke="#a0b8cc" stroke-opacity="0.27" stroke-width="1.1"/><path d="M748 42Q742 31 733 24" stroke="#9cbcc4" stroke-opacity="0.39" stroke-width="1.6"/><path d="M443 40Q444 16 443 -1" stroke="#7ca494" stroke-opacity="0.23" stroke-width="1.5"/><path d="M455 41Q455 15 437 -2" stroke="#6e9890" stroke-opacity="0.29" stroke-width="1.4"/><path d="M120 41Q122 32 123 26" stroke="#7ca494" stroke-opacity="0.36" stroke-width="0.7"/><path d="M1194 43Q1196 29 1196 19" stroke="#90a8c0" stroke-opacity="0.25" stroke-width="1.4"/><path d="M437 41Q437 29 426 22" stroke="#acc8cc" stroke-opacity="0.34" stroke-width="0.7"/><path d="M1026 43Q1023 29 1017 20" stroke="#8fb0a4" stroke-opacity="0.20" stroke-width="1.1"/><path d="M1058 42Q1057 22 1049 9" stroke="#7ca494" stroke-opacity="0.36" stroke-width="1.1"/><path d="M706 41Q708 32 695 25" stroke="#acc8cc" stroke-opacity="0.28" stroke-width="0.7"/><path d="M95 42Q100 30 108 22" stroke="#a0b8bc" stroke-opacity="0.16" stroke-width="1.1"/><path d="M916 43Q920 37 929 33" stroke="#7ca494" stroke-opacity="0.24" stroke-width="0.9"/><path d="M2 41Q4 23 3 11" stroke="#6e9890" stroke-opacity="0.26" stroke-width="0.8"/><path d="M995 41Q996 29 1009 21" stroke="#9cbcc4" stroke-opacity="0.33" stroke-width="0.7"/><path d="M615 40Q614 31 625 25" stroke="#8fb0a4" stroke-opacity="0.24" stroke-width="0.6"/><path d="M501 40Q498 18 493 4" stroke="#6e9890" stroke-opacity="0.35" stroke-width="1.1"/><path d="M850 41Q847 24 853 12" stroke="#7ca494" stroke-opacity="0.35" stroke-width="1.0"/><path d="M194 43Q193 23 193 10" stroke="#a0b8bc" stroke-opacity="0.21" stroke-width="1.4"/><path d="M970 41Q973 25 980 15" stroke="#8fb0a4" stroke-opacity="0.20" stroke-width="1.1"/><path d="M1327 40Q1326 25 1327 15" stroke="#8098b0" stroke-opacity="0.11" stroke-width="0.6"/><path d="M188 43Q188 25 204 13" stroke="#acc8cc" stroke-opacity="0.40" stroke-width="0.8"/><path d="M189 41Q193 23 202 11" stroke="#9cbcc4" stroke-opacity="0.32" stroke-width="1.1"/><path d="M590 41Q592 26 606 17" stroke="#7ca494" stroke-opacity="0.38" stroke-width="1.6"/><path d="M1357 44Q1354 25 1361 13" stroke="#a0b8cc" stroke-opacity="0.15" stroke-width="1.4"/><path d="M851 41Q850 24 863 12" stroke="#8fb0a4" stroke-opacity="0.33" stroke-width="1.6"/><path d="M523 43Q521 38 536 34" stroke="#7ca494" stroke-opacity="0.29" stroke-width="1.3"/><path d="M230 41Q236 16 246 -1" stroke="#9cbcc4" stroke-opacity="0.42" stroke-width="1.0"/><path d="M426 42Q429 34 438 28" stroke="#9cbcc4" stroke-opacity="0.31" stroke-width="0.9"/><path d="M769 43Q767 35 758 29" stroke="#7ca494" stroke-opacity="0.38" stroke-width="1.6"/><path d="M445 41Q451 22 462 9" stroke="#6e9890" stroke-opacity="0.24" stroke-width="0.7"/><path d="M145 43Q143 23 145 10" stroke="#a0b8bc" stroke-opacity="0.38" stroke-width="1.1"/><path d="M642 42Q638 32 630 24" stroke="#a0b8bc" stroke-opacity="0.25" stroke-width="0.9"/><path d="M452 43Q449 24 455 12" stroke="#9cbcc4" stroke-opacity="0.22" stroke-width="0.7"/><path d="M417 42Q415 28 402 18" stroke="#acc8cc" stroke-opacity="0.30" stroke-width="1.1"/><path d="M369 43Q374 33 381 27" stroke="#a0b8bc" stroke-opacity="0.42" stroke-width="0.9"/><path d="M925 42Q922 35 923 31" stroke="#7ca494" stroke-opacity="0.22" stroke-width="1.4"/><path d="M287 43Q290 38 299 35" stroke="#acc8cc" stroke-opacity="0.15" stroke-width="1.4"/><path d="M634 41Q632 35 648 31" stroke="#8fb0a4" stroke-opacity="0.35" stroke-width="1.6"/><path d="M1042 42Q1040 22 1043 8" stroke="#7ca494" stroke-opacity="0.23" stroke-width="1.0"/><path d="M765 44Q763 34 768 27" stroke="#8fb0a4" stroke-opacity="0.31" stroke-width="0.7"/><path d="M156 41Q153 15 159 -2" stroke="#a0b8bc" stroke-opacity="0.37" stroke-width="1.1"/><path d="M1120 41Q1118 15 1117 -2" stroke="#8098b0" stroke-opacity="0.10" stroke-width="0.7"/><path d="M1253 43Q1256 27 1257 17" stroke="#a0b8cc" stroke-opacity="0.12" stroke-width="1.0"/><path d="M1184 43Q1188 33 1188 26" stroke="#90a8c0" stroke-opacity="0.18" stroke-width="1.6"/><path d="M1316 44Q1321 24 1333 11" stroke="#a0b8cc" stroke-opacity="0.09" stroke-width="1.4"/><path d="M227 41Q225 34 241 29" stroke="#7ca494" stroke-opacity="0.25" stroke-width="1.5"/><path d="M1321 40Q1319 22 1306 9" stroke="#8098b0" stroke-opacity="0.26" stroke-width="0.6"/><path d="M779 43Q780 36 766 31" stroke="#8fb0a4" stroke-opacity="0.42" stroke-width="1.4"/><path d="M408 43Q410 38 410 34" stroke="#8fb0a4" stroke-opacity="0.25" stroke-width="0.7"/><path d="M28 42Q26 23 19 11" stroke="#6e9890" stroke-opacity="0.39" stroke-width="1.1"/><path d="M969 44Q971 37 986 32" stroke="#8fb0a4" stroke-opacity="0.28" stroke-width="0.6"/><path d="M364 43Q359 37 357 33" stroke="#8fb0a4" stroke-opacity="0.35" stroke-width="0.8"/><path d="M1108 43Q1106 35 1094 31" stroke="#90a8c0" stroke-opacity="0.25" stroke-width="1.2"/><path d="M187 40Q188 34 174 30" stroke="#7ca494" stroke-opacity="0.22" stroke-width="1.4"/><path d="M545 43Q542 30 536 22" stroke="#8fb0a4" stroke-opacity="0.34" stroke-width="1.2"/><path d="M257 43Q258 37 245 32" stroke="#acc8cc" stroke-opacity="0.36" stroke-width="0.8"/><path d="M863 44Q867 26 872 15" stroke="#a0b8bc" stroke-opacity="0.29" stroke-width="0.8"/><path d="M567 42Q566 36 554 31" stroke="#a0b8bc" stroke-opacity="0.23" stroke-width="0.8"/><path d="M1045 42Q1043 21 1058 7" stroke="#acc8cc" stroke-opacity="0.42" stroke-width="0.9"/><path d="M1219 40Q1219 27 1219 18" stroke="#a0b8cc" stroke-opacity="0.25" stroke-width="0.7"/><path d="M1311 41Q1313 31 1327 25" stroke="#8098b0" stroke-opacity="0.13" stroke-width="0.8"/><path d="M261 42Q266 16 274 -2" stroke="#acc8cc" stroke-opacity="0.34" stroke-width="1.3"/><path d="M1035 43Q1038 31 1047 22" stroke="#a0b8bc" stroke-opacity="0.39" stroke-width="1.4"/><path d="M295 43Q290 27 283 16" stroke="#9cbcc4" stroke-opacity="0.42" stroke-width="1.0"/><path d="M1253 44Q1250 29 1257 19" stroke="#a0b8cc" stroke-opacity="0.08" stroke-width="1.6"/><path d="M885 42Q886 38 892 34" stroke="#acc8cc" stroke-opacity="0.21" stroke-width="1.5"/><path d="M572 42Q568 33 560 28" stroke="#acc8cc" stroke-opacity="0.21" stroke-width="1.2"/><path d="M1071 40Q1071 35 1059 31" stroke="#8098b0" stroke-opacity="0.26" stroke-width="1.2"/><path d="M1318 42Q1320 32 1306 26" stroke="#8098b0" stroke-opacity="0.26" stroke-width="1.4"/><path d="M848 42Q850 31 859 23" stroke="#acc8cc" stroke-opacity="0.23" stroke-width="1.5"/><path d="M322 43Q323 22 329 7" stroke="#acc8cc" stroke-opacity="0.23" stroke-width="1.4"/><path d="M1339 40Q1340 35 1348 32" stroke="#a0b8cc" stroke-opacity="0.25" stroke-width="1.6"/><path d="M130 41Q131 18 145 2" stroke="#a0b8bc" stroke-opacity="0.18" stroke-width="1.4"/><path d="M845 43Q839 31 830 23" stroke="#acc8cc" stroke-opacity="0.28" stroke-width="0.7"/><path d="M196 42Q199 34 202 29" stroke="#a0b8bc" stroke-opacity="0.38" stroke-width="1.2"/><path d="M1248 42Q1253 26 1261 15" stroke="#a0b8cc" stroke-opacity="0.13" stroke-width="0.8"/><path d="M1137 44Q1134 19 1140 3" stroke="#a0b8cc" stroke-opacity="0.12" stroke-width="1.3"/><path d="M870 40Q876 23 885 11" stroke="#7ca494" stroke-opacity="0.17" stroke-width="0.8"/><path d="M1297 43Q1295 32 1284 25" stroke="#90a8c0" stroke-opacity="0.25" stroke-width="1.6"/><path d="M63 41Q65 34 51 29" stroke="#acc8cc" stroke-opacity="0.37" stroke-width="0.8"/><path d="M302 42Q299 30 290 23" stroke="#a0b8bc" stroke-opacity="0.19" stroke-width="1.5"/><path d="M544 43Q546 25 554 14" stroke="#9cbcc4" stroke-opacity="0.24" stroke-width="1.5"/><path d="M1271 42Q1273 36 1285 32" stroke="#90a8c0" stroke-opacity="0.27" stroke-width="1.6"/><path d="M697 42Q699 29 701 20" stroke="#acc8cc" stroke-opacity="0.28" stroke-width="1.6"/><path d="M497 40Q501 17 497 1" stroke="#acc8cc" stroke-opacity="0.19" stroke-width="0.7"/><path d="M309 44Q307 28 292 18" stroke="#8fb0a4" stroke-opacity="0.32" stroke-width="0.9"/><path d="M572 43Q573 26 587 14" stroke="#8fb0a4" stroke-opacity="0.39" stroke-width="1.5"/><path d="M363 41Q364 19 367 4" stroke="#a0b8bc" stroke-opacity="0.21" stroke-width="1.5"/><path d="M232 41Q234 18 227 3" stroke="#a0b8bc" stroke-opacity="0.21" stroke-width="0.7"/><path d="M73 41Q73 33 89 28" stroke="#8fb0a4" stroke-opacity="0.25" stroke-width="1.1"/><path d="M60 44Q61 38 46 34" stroke="#9cbcc4" stroke-opacity="0.28" stroke-width="1.0"/><path d="M1291 41Q1290 24 1275 13" stroke="#90a8c0" stroke-opacity="0.28" stroke-width="1.2"/><path d="M1358 41Q1353 21 1344 7" stroke="#90a8c0" stroke-opacity="0.23" stroke-width="1.0"/><path d="M793 41Q799 24 807 12" stroke="#7ca494" stroke-opacity="0.23" stroke-width="0.7"/><path d="M231 42Q229 34 241 30" stroke="#6e9890" stroke-opacity="0.22" stroke-width="1.3"/><path d="M1354 42Q1351 32 1360 26" stroke="#90a8c0" stroke-opacity="0.25" stroke-width="1.0"/><path d="M985 43Q984 29 994 20" stroke="#7ca494" stroke-opacity="0.33" stroke-width="1.1"/><path d="M1170 41Q1169 35 1184 31" stroke="#90a8c0" stroke-opacity="0.19" stroke-width="1.2"/><path d="M614 40Q613 35 600 31" stroke="#6e9890" stroke-opacity="0.23" stroke-width="1.0"/><path d="M1338 42Q1335 28 1323 19" stroke="#90a8c0" stroke-opacity="0.16" stroke-width="1.5"/><path d="M92 41Q88 29 87 21" stroke="#a0b8bc" stroke-opacity="0.25" stroke-width="1.2"/><path d="M884 42Q881 30 875 22" stroke="#acc8cc" stroke-opacity="0.32" stroke-width="0.6"/><path d="M620 43Q623 34 630 27" stroke="#8fb0a4" stroke-opacity="0.36" stroke-width="0.9"/><path d="M135 43Q135 21 151 7" stroke="#a0b8bc" stroke-opacity="0.16" stroke-width="1.2"/><path d="M407 43Q409 23 406 10" stroke="#6e9890" stroke-opacity="0.20" stroke-width="1.2"/><path d="M184 44Q183 23 183 10" stroke="#a0b8bc" stroke-opacity="0.35" stroke-width="1.1"/><path d="M180 42Q179 30 162 22" stroke="#8fb0a4" stroke-opacity="0.16" stroke-width="1.0"/><path d="M964 40Q964 32 956 26" stroke="#6e9890" stroke-opacity="0.27" stroke-width="1.6"/><path d="M28 42Q25 23 13 10" stroke="#a0b8bc" stroke-opacity="0.36" stroke-width="0.8"/><path d="M932 43Q936 36 934 32" stroke="#7ca494" stroke-opacity="0.28" stroke-width="0.6"/><path d="M380 44Q381 18 375 0" stroke="#7ca494" stroke-opacity="0.20" stroke-width="0.9"/><path d="M1279 42Q1277 27 1290 18" stroke="#90a8c0" stroke-opacity="0.20" stroke-width="1.0"/><path d="M1282 44Q1283 25 1285 13" stroke="#90a8c0" stroke-opacity="0.18" stroke-width="1.3"/><path d="M940 42Q937 36 943 32" stroke="#acc8cc" stroke-opacity="0.28" stroke-width="1.1"/><path d="M895 42Q890 35 885 30" stroke="#7ca494" stroke-opacity="0.31" stroke-width="1.5"/><path d="M862 42Q867 35 877 29" stroke="#8fb0a4" stroke-opacity="0.20" stroke-width="0.8"/><path d="M459 41Q460 23 463 11" stroke="#8fb0a4" stroke-opacity="0.18" stroke-width="0.6"/><path d="M1241 42Q1242 28 1225 18" stroke="#8098b0" stroke-opacity="0.09" stroke-width="1.4"/><path d="M232 44Q237 27 250 16" stroke="#7ca494" stroke-opacity="0.21" stroke-width="1.3"/><path d="M1151 41Q1151 36 1147 32" stroke="#8098b0" stroke-opacity="0.15" stroke-width="1.2"/><path d="M1162 43Q1162 17 1160 1" stroke="#8098b0" stroke-opacity="0.20" stroke-width="0.7"/><path d="M570 40Q568 34 572 29" stroke="#6e9890" stroke-opacity="0.37" stroke-width="1.2"/><path d="M426 42Q425 20 428 6" stroke="#9cbcc4" stroke-opacity="0.34" stroke-width="0.6"/><path d="M445 42Q447 36 432 32" stroke="#6e9890" stroke-opacity="0.24" stroke-width="0.8"/><path d="M335 40Q338 28 332 20" stroke="#6e9890" stroke-opacity="0.30" stroke-width="0.9"/><path d="M300 41Q301 32 304 26" stroke="#7ca494" stroke-opacity="0.20" stroke-width="1.1"/><path d="M1344 41Q1342 21 1347 8" stroke="#90a8c0" stroke-opacity="0.23" stroke-width="1.3"/><path d="M535 44Q533 26 536 14" stroke="#9cbcc4" stroke-opacity="0.38" stroke-width="1.5"/><path d="M609 44Q608 29 606 19" stroke="#a0b8bc" stroke-opacity="0.32" stroke-width="0.7"/><path d="M574 43Q578 35 582 31" stroke="#6e9890" stroke-opacity="0.29" stroke-width="1.6"/><path d="M1170 41Q1169 25 1152 13" stroke="#8098b0" stroke-opacity="0.16" stroke-width="1.0"/><path d="M989 42Q989 29 971 21" stroke="#7ca494" stroke-opacity="0.27" stroke-width="0.9"/><path d="M246 42Q243 28 246 19" stroke="#a0b8bc" stroke-opacity="0.19" stroke-width="1.4"/><path d="M1056 43Q1055 36 1043 31" stroke="#acc8cc" stroke-opacity="0.23" stroke-width="1.2"/><path d="M1018 42Q1018 28 1000 18" stroke="#9cbcc4" stroke-opacity="0.28" stroke-width="0.9"/><path d="M436 42Q434 15 451 -2" stroke="#8fb0a4" stroke-opacity="0.16" stroke-width="0.6"/><path d="M578 42Q577 25 563 14" stroke="#7ca494" stroke-opacity="0.29" stroke-width="1.0"/><path d="M1248 44Q1247 37 1243 33" stroke="#90a8c0" stroke-opacity="0.20" stroke-width="0.8"/><path d="M1056 40Q1053 33 1048 28" stroke="#a0b8bc" stroke-opacity="0.35" stroke-width="0.7"/><path d="M1282 42Q1282 18 1277 2" stroke="#90a8c0" stroke-opacity="0.19" stroke-width="1.2"/><path d="M771 43Q773 28 771 19" stroke="#acc8cc" stroke-opacity="0.21" stroke-width="1.5"/><path d="M114 43Q116 32 120 24" stroke="#9cbcc4" stroke-opacity="0.19" stroke-width="1.1"/><path d="M1036 43Q1036 38 1030 35" stroke="#acc8cc" stroke-opacity="0.41" stroke-width="0.9"/><path d="M206 42Q204 18 189 2" stroke="#6e9890" stroke-opacity="0.24" stroke-width="1.0"/><path d="M396 41Q397 29 385 21" stroke="#7ca494" stroke-opacity="0.32" stroke-width="1.3"/><path d="M1013 42Q1009 25 1009 13" stroke="#9cbcc4" stroke-opacity="0.26" stroke-width="0.8"/><path d="M151 44Q152 25 138 12" stroke="#a0b8bc" stroke-opacity="0.39" stroke-width="1.5"/><path d="M1204 40Q1198 30 1187 23" stroke="#a0b8cc" stroke-opacity="0.15" stroke-width="1.2"/><path d="M1014 43Q1017 26 1021 15" stroke="#a0b8bc" stroke-opacity="0.41" stroke-width="1.0"/><path d="M987 43Q989 36 982 31" stroke="#8fb0a4" stroke-opacity="0.23" stroke-width="1.4"/><path d="M161 41Q157 26 144 17" stroke="#7ca494" stroke-opacity="0.27" stroke-width="0.9"/><path d="M1046 43Q1045 34 1032 27" stroke="#6e9890" stroke-opacity="0.39" stroke-width="0.8"/><path d="M1099 42Q1096 37 1088 34" stroke="#90a8c0" stroke-opacity="0.23" stroke-width="1.4"/><path d="M660 42Q660 34 643 28" stroke="#7ca494" stroke-opacity="0.19" stroke-width="0.7"/><path d="M136 43Q135 26 143 14" stroke="#9cbcc4" stroke-opacity="0.39" stroke-width="0.8"/><path d="M182 42Q178 34 178 28" stroke="#9cbcc4" stroke-opacity="0.26" stroke-width="1.1"/><path d="M1375 43Q1372 30 1374 22" stroke="#a0b8cc" stroke-opacity="0.18" stroke-width="1.2"/><path d="M1148 43Q1143 33 1143 26" stroke="#90a8c0" stroke-opacity="0.22" stroke-width="0.9"/><path d="M484 41Q486 28 483 19" stroke="#9cbcc4" stroke-opacity="0.32" stroke-width="1.2"/><path d="M1282 41Q1280 18 1283 2" stroke="#90a8c0" stroke-opacity="0.27" stroke-width="0.6"/><path d="M606 41Q603 34 613 30" stroke="#8fb0a4" stroke-opacity="0.17" stroke-width="1.3"/><path d="M2 42Q5 19 15 4" stroke="#7ca494" stroke-opacity="0.21" stroke-width="1.5"/><path d="M868 41Q871 31 871 24" stroke="#6e9890" stroke-opacity="0.30" stroke-width="0.9"/><path d="M37 44Q32 30 23 21" stroke="#8fb0a4" stroke-opacity="0.22" stroke-width="0.8"/><path d="M1113 43Q1116 35 1129 30" stroke="#90a8c0" stroke-opacity="0.18" stroke-width="0.8"/><path d="M571 42Q573 32 565 25" stroke="#8fb0a4" stroke-opacity="0.30" stroke-width="0.9"/><path d="M254 43Q256 32 248 24" stroke="#acc8cc" stroke-opacity="0.27" stroke-width="0.9"/><path d="M416 41Q412 18 406 3" stroke="#9cbcc4" stroke-opacity="0.35" stroke-width="1.6"/><path d="M486 41Q483 18 487 2" stroke="#a0b8bc" stroke-opacity="0.28" stroke-width="1.5"/><path d="M607 43Q607 34 618 29" stroke="#8fb0a4" stroke-opacity="0.39" stroke-width="0.7"/><path d="M894 42Q900 33 911 27" stroke="#6e9890" stroke-opacity="0.37" stroke-width="1.1"/><path d="M1012 44Q1013 31 997 22" stroke="#7ca494" stroke-opacity="0.28" stroke-width="0.7"/><path d="M1302 41Q1306 28 1307 19" stroke="#a0b8cc" stroke-opacity="0.09" stroke-width="1.4"/><path d="M626 40Q623 27 628 18" stroke="#7ca494" stroke-opacity="0.30" stroke-width="1.5"/><path d="M1249 42Q1249 27 1247 17" stroke="#a0b8cc" stroke-opacity="0.24" stroke-width="1.2"/><path d="M432 43Q430 17 418 0" stroke="#6e9890" stroke-opacity="0.31" stroke-width="0.7"/><path d="M800 42Q795 30 785 22" stroke="#8fb0a4" stroke-opacity="0.41" stroke-width="0.8"/><path d="M895 43Q896 32 882 25" stroke="#8fb0a4" stroke-opacity="0.34" stroke-width="1.2"/><path d="M1066 41Q1066 33 1051 28" stroke="#90a8c0" stroke-opacity="0.26" stroke-width="1.0"/><path d="M276 41Q278 19 264 5" stroke="#6e9890" stroke-opacity="0.35" stroke-width="1.2"/><path d="M711 43Q714 31 713 22" stroke="#a0b8bc" stroke-opacity="0.18" stroke-width="1.1"/><path d="M1062 42Q1065 32 1057 26" stroke="#8098b0" stroke-opacity="0.27" stroke-width="1.5"/><path d="M1198 43Q1201 17 1199 1" stroke="#a0b8cc" stroke-opacity="0.24" stroke-width="0.6"/><path d="M477 41Q475 30 473 23" stroke="#8fb0a4" stroke-opacity="0.38" stroke-width="1.2"/><path d="M948 41Q944 29 943 22" stroke="#8fb0a4" stroke-opacity="0.28" stroke-width="0.9"/><path d="M587 42Q585 27 573 16" stroke="#9cbcc4" stroke-opacity="0.36" stroke-width="1.1"/><path d="M760 41Q760 35 778 31" stroke="#8fb0a4" stroke-opacity="0.40" stroke-width="1.4"/><path d="M561 44Q557 35 555 29" stroke="#a0b8bc" stroke-opacity="0.38" stroke-width="1.3"/><path d="M819 43Q820 36 835 32" stroke="#acc8cc" stroke-opacity="0.20" stroke-width="1.5"/><path d="M155 43Q156 29 143 19" stroke="#a0b8bc" stroke-opacity="0.19" stroke-width="1.1"/><path d="M1195 41Q1196 24 1204 13" stroke="#a0b8cc" stroke-opacity="0.16" stroke-width="0.9"/><path d="M1035 43Q1038 27 1050 16" stroke="#a0b8bc" stroke-opacity="0.16" stroke-width="1.3"/><path d="M457 44Q455 38 461 35" stroke="#7ca494" stroke-opacity="0.19" stroke-width="1.0"/><path d="M851 43Q848 34 845 28" stroke="#acc8cc" stroke-opacity="0.41" stroke-width="1.1"/><path d="M1199 42Q1203 34 1210 29" stroke="#90a8c0" stroke-opacity="0.26" stroke-width="1.1"/><path d="M1299 43Q1297 34 1297 28" stroke="#8098b0" stroke-opacity="0.21" stroke-width="1.0"/><path d="M1187 42Q1185 24 1198 11" stroke="#8098b0" stroke-opacity="0.25" stroke-width="1.3"/><path d="M1334 43Q1332 36 1330 31" stroke="#8098b0" stroke-opacity="0.25" stroke-width="0.7"/><path d="M1150 40Q1149 31 1135 25" stroke="#8098b0" stroke-opacity="0.18" stroke-width="1.5"/><path d="M25 42Q25 18 28 3" stroke="#8fb0a4" stroke-opacity="0.32" stroke-width="1.3"/><path d="M1288 40Q1289 34 1291 30" stroke="#90a8c0" stroke-opacity="0.19" stroke-width="0.7"/><path d="M585 42Q579 27 572 17" stroke="#acc8cc" stroke-opacity="0.29" stroke-width="0.8"/><path d="M701 40Q700 30 686 23" stroke="#6e9890" stroke-opacity="0.25" stroke-width="1.4"/><path d="M930 41Q932 34 941 30" stroke="#8fb0a4" stroke-opacity="0.21" stroke-width="0.6"/><path d="M529 41Q528 15 540 -3" stroke="#acc8cc" stroke-opacity="0.35" stroke-width="0.7"/><path d="M592 43Q591 38 604 35" stroke="#9cbcc4" stroke-opacity="0.27" stroke-width="1.0"/><path d="M737 40Q741 35 738 31" stroke="#acc8cc" stroke-opacity="0.39" stroke-width="0.9"/><path d="M1137 44Q1141 34 1147 27" stroke="#a0b8cc" stroke-opacity="0.08" stroke-width="1.3"/><path d="M359 42Q362 36 372 31" stroke="#a0b8bc" stroke-opacity="0.25" stroke-width="1.3"/><path d="M1297 43Q1299 30 1289 22" stroke="#8098b0" stroke-opacity="0.10" stroke-width="0.6"/><path d="M374 42Q372 28 364 19" stroke="#8fb0a4" stroke-opacity="0.16" stroke-width="1.6"/><path d="M343 41Q340 23 342 12" stroke="#6e9890" stroke-opacity="0.17" stroke-width="1.5"/><path d="M301 43Q303 22 307 8" stroke="#6e9890" stroke-opacity="0.27" stroke-width="1.4"/><path d="M65 44Q63 35 71 29" stroke="#6e9890" stroke-opacity="0.27" stroke-width="1.1"/><path d="M950 43Q950 35 968 29" stroke="#9cbcc4" stroke-opacity="0.33" stroke-width="0.6"/><path d="M861 43Q863 34 871 27" stroke="#7ca494" stroke-opacity="0.31" stroke-width="1.1"/><path d="M836 44Q835 36 839 31" stroke="#a0b8bc" stroke-opacity="0.23" stroke-width="1.2"/><path d="M587 42Q590 30 594 21" stroke="#9cbcc4" stroke-opacity="0.36" stroke-width="1.5"/><path d="M192 41Q189 20 176 6" stroke="#8fb0a4" stroke-opacity="0.29" stroke-width="1.3"/><path d="M1271 42Q1271 16 1258 -0" stroke="#a0b8cc" stroke-opacity="0.09" stroke-width="1.2"/><path d="M145 43Q146 25 158 14" stroke="#9cbcc4" stroke-opacity="0.17" stroke-width="1.3"/><path d="M519 44Q516 32 509 24" stroke="#a0b8bc" stroke-opacity="0.36" stroke-width="1.1"/><path d="M1281 44Q1279 33 1277 27" stroke="#8098b0" stroke-opacity="0.16" stroke-width="1.2"/><path d="M765 40Q771 31 783 26" stroke="#9cbcc4" stroke-opacity="0.23" stroke-width="1.1"/><path d="M35 40Q33 28 48 19" stroke="#a0b8bc" stroke-opacity="0.30" stroke-width="0.9"/><path d="M643 42Q646 32 648 25" stroke="#7ca494" stroke-opacity="0.18" stroke-width="0.7"/><path d="M1191 41Q1192 36 1204 33" stroke="#a0b8cc" stroke-opacity="0.22" stroke-width="1.1"/><path d="M1046 44Q1045 31 1060 22" stroke="#6e9890" stroke-opacity="0.37" stroke-width="1.3"/><path d="M848 41Q847 25 831 14" stroke="#7ca494" stroke-opacity="0.21" stroke-width="1.0"/><path d="M605 44Q601 30 605 21" stroke="#8fb0a4" stroke-opacity="0.27" stroke-width="0.9"/><path d="M118 42Q116 26 121 15" stroke="#a0b8bc" stroke-opacity="0.39" stroke-width="0.9"/><path d="M1230 41Q1231 24 1221 13" stroke="#90a8c0" stroke-opacity="0.26" stroke-width="1.4"/><path d="M921 41Q919 33 927 28" stroke="#6e9890" stroke-opacity="0.39" stroke-width="1.4"/><path d="M684 42Q684 28 693 18" stroke="#a0b8bc" stroke-opacity="0.31" stroke-width="1.5"/><path d="M246 43Q245 29 255 20" stroke="#a0b8bc" stroke-opacity="0.30" stroke-width="1.1"/><path d="M1221 40Q1219 21 1223 8" stroke="#a0b8cc" stroke-opacity="0.15" stroke-width="0.8"/><path d="M1076 42Q1078 29 1083 20" stroke="#90a8c0" stroke-opacity="0.14" stroke-width="0.7"/><path d="M111 40Q106 26 95 17" stroke="#a0b8bc" stroke-opacity="0.30" stroke-width="0.7"/><path d="M780 42Q781 36 767 31" stroke="#8fb0a4" stroke-opacity="0.31" stroke-width="1.2"/><path d="M1076 41Q1075 28 1071 19" stroke="#a0b8cc" stroke-opacity="0.23" stroke-width="1.6"/><path d="M1155 43Q1151 18 1138 1" stroke="#90a8c0" stroke-opacity="0.26" stroke-width="1.3"/><path d="M183 40Q188 34 201 29" stroke="#8fb0a4" stroke-opacity="0.39" stroke-width="1.3"/><path d="M59 43Q60 21 47 5" stroke="#7ca494" stroke-opacity="0.26" stroke-width="1.2"/><path d="M474 41Q473 24 463 13" stroke="#acc8cc" stroke-opacity="0.23" stroke-width="1.4"/><path d="M752 42Q753 33 761 26" stroke="#9cbcc4" stroke-opacity="0.34" stroke-width="1.1"/><path d="M941 41Q936 25 931 15" stroke="#a0b8bc" stroke-opacity="0.36" stroke-width="0.7"/><path d="M1080 41Q1079 23 1082 10" stroke="#90a8c0" stroke-opacity="0.28" stroke-width="0.7"/><path d="M1012 43Q1015 33 1024 27" stroke="#7ca494" stroke-opacity="0.42" stroke-width="0.9"/><path d="M493 40Q489 28 494 19" stroke="#acc8cc" stroke-opacity="0.41" stroke-width="1.0"/><path d="M424 41Q424 30 408 22" stroke="#9cbcc4" stroke-opacity="0.41" stroke-width="1.6"/><path d="M195 43Q196 35 211 30" stroke="#6e9890" stroke-opacity="0.22" stroke-width="0.7"/><path d="M1143 43Q1142 18 1152 1" stroke="#8098b0" stroke-opacity="0.27" stroke-width="1.6"/><path d="M949 44Q948 27 949 16" stroke="#a0b8bc" stroke-opacity="0.19" stroke-width="1.5"/><path d="M432 41Q430 32 433 26" stroke="#9cbcc4" stroke-opacity="0.38" stroke-width="1.6"/><path d="M1150 41Q1155 20 1165 6" stroke="#a0b8cc" stroke-opacity="0.25" stroke-width="1.4"/><path d="M1100 44Q1099 22 1099 7" stroke="#90a8c0" stroke-opacity="0.23" stroke-width="0.7"/><path d="M972 42Q973 29 980 20" stroke="#8fb0a4" stroke-opacity="0.33" stroke-width="1.1"/><path d="M1237 43Q1235 20 1223 5" stroke="#a0b8cc" stroke-opacity="0.09" stroke-width="1.0"/><path d="M1347 44Q1348 32 1364 25" stroke="#8098b0" stroke-opacity="0.25" stroke-width="0.6"/><path d="M620 43Q624 27 629 17" stroke="#7ca494" stroke-opacity="0.42" stroke-width="1.3"/><path d="M1034 44Q1037 27 1041 15" stroke="#acc8cc" stroke-opacity="0.36" stroke-width="1.6"/><path d="M555 41Q554 22 563 10" stroke="#8fb0a4" stroke-opacity="0.40" stroke-width="1.4"/><path d="M905 43Q905 30 912 22" stroke="#acc8cc" stroke-opacity="0.42" stroke-width="0.9"/><path d="M985 43Q979 26 970 14" stroke="#6e9890" stroke-opacity="0.19" stroke-width="1.3"/><path d="M669 42Q665 31 658 23" stroke="#acc8cc" stroke-opacity="0.26" stroke-width="0.8"/><path d="M991 42Q997 32 1003 26" stroke="#a0b8bc" stroke-opacity="0.34" stroke-width="1.4"/><path d="M812 43Q813 31 801 24" stroke="#7ca494" stroke-opacity="0.42" stroke-width="1.5"/><path d="M707 41Q702 30 697 22" stroke="#7ca494" stroke-opacity="0.36" stroke-width="0.6"/><path d="M282 42Q278 32 268 25" stroke="#6e9890" stroke-opacity="0.26" stroke-width="0.9"/><path d="M558 42Q557 18 560 2" stroke="#a0b8bc" stroke-opacity="0.37" stroke-width="0.9"/><path d="M205 44Q206 28 208 17" stroke="#acc8cc" stroke-opacity="0.24" stroke-width="1.1"/><path d="M403 42Q406 25 412 14" stroke="#acc8cc" stroke-opacity="0.36" stroke-width="0.8"/><path d="M451 43Q448 25 450 12" stroke="#8fb0a4" stroke-opacity="0.29" stroke-width="0.9"/><path d="M888 43Q889 26 894 15" stroke="#a0b8bc" stroke-opacity="0.26" stroke-width="1.4"/><path d="M1317 42Q1316 24 1321 12" stroke="#8098b0" stroke-opacity="0.22" stroke-width="1.3"/><path d="M732 43Q735 32 735 24" stroke="#acc8cc" stroke-opacity="0.25" stroke-width="1.0"/><path d="M19 40Q19 28 26 19" stroke="#9cbcc4" stroke-opacity="0.26" stroke-width="1.3"/><path d="M1018 44Q1019 38 1004 34" stroke="#6e9890" stroke-opacity="0.40" stroke-width="0.7"/><path d="M1125 44Q1125 36 1130 31" stroke="#a0b8cc" stroke-opacity="0.23" stroke-width="1.3"/><path d="M442 40Q443 18 454 3" stroke="#8fb0a4" stroke-opacity="0.30" stroke-width="1.5"/><path d="M656 44Q654 30 648 22" stroke="#9cbcc4" stroke-opacity="0.29" stroke-width="0.7"/><path d="M1169 43Q1169 36 1164 31" stroke="#90a8c0" stroke-opacity="0.11" stroke-width="0.8"/><path d="M312 43Q315 36 320 32" stroke="#7ca494" stroke-opacity="0.21" stroke-width="1.2"/><path d="M702 41Q703 29 711 21" stroke="#acc8cc" stroke-opacity="0.29" stroke-width="1.5"/><path d="M833 43Q834 33 822 27" stroke="#acc8cc" stroke-opacity="0.31" stroke-width="1.4"/><path d="M1081 43Q1078 38 1083 34" stroke="#a0b8cc" stroke-opacity="0.24" stroke-width="1.5"/><path d="M981 40Q978 24 970 13" stroke="#acc8cc" stroke-opacity="0.37" stroke-width="0.8"/><path d="M921 41Q925 31 935 25" stroke="#a0b8bc" stroke-opacity="0.16" stroke-width="0.8"/><path d="M102 40Q107 22 111 11" stroke="#8fb0a4" stroke-opacity="0.31" stroke-width="1.0"/><path d="M641 43Q641 28 657 18" stroke="#a0b8bc" stroke-opacity="0.35" stroke-width="1.3"/><path d="M175 42Q175 37 161 33" stroke="#9cbcc4" stroke-opacity="0.35" stroke-width="1.4"/><path d="M177 41Q183 16 191 -1" stroke="#a0b8bc" stroke-opacity="0.39" stroke-width="1.3"/><path d="M17 40Q13 25 11 15" stroke="#7ca494" stroke-opacity="0.33" stroke-width="0.8"/><path d="M1372 43Q1373 25 1358 12" stroke="#a0b8cc" stroke-opacity="0.27" stroke-width="1.1"/><path d="M171 44Q173 24 175 10" stroke="#8fb0a4" stroke-opacity="0.28" stroke-width="1.1"/></g>
</svg>
<!-- start -->
<svg class="abs" style="left:10px;top:733px" width="30" height="30" viewBox="0 0 30 30">
<path d="M1.6 4.9 L12.3 3.4 L12.3 13.6 L1.6 13.6 Z M13.4 3.2 L28.3 1.9 L28.3 13.6 L13.4 13.6 Z M1.6 14.8 L12.3 14.8 L12.3 25 L1.6 23.6 Z M13.4 14.8 L28.3 14.8 L28.3 27.1 L13.4 25.2 Z" fill="#fff"/>
</svg>
<!-- boxes -->
<div class="tbx" style="left:52px;width:50px"></div>
<div class="tbx thin" style="left:103px;width:3px"></div>
<div class="tbx thin" style="left:107px;width:3px"></div>
<div class="tbx" style="left:114px;width:58px"></div>
<div class="tbx" style="left:176px;width:58px"></div>
<div class="tbx" style="left:300px;width:58px"></div>
<div class="tbx act" style="left:362px;width:53px"></div>
<div class="tbx act thin" style="left:416px;width:4px"></div>
<!-- explorer -->
<svg class="abs" style="left:60px;top:734px" width="34" height="32" viewBox="0 0 34 32">
<path d="M1.5 2.5 H30 V28 H1.5 Z" fill="#e8c66c"/>
<rect x="3" y="1.5" width="13" height="4" fill="#f5f5ee"/><rect x="3.5" y="1.8" width="3.4" height="2.6" fill="#2aa52a"/>
<rect x="11" y="3.5" width="12" height="4" fill="#f5f5ee"/><rect x="11.5" y="3.8" width="3.2" height="2.6" fill="#c9442a"/>
<rect x="18.5" y="5.5" width="11" height="4" fill="#f5f5ee"/><rect x="19.5" y="5.8" width="3.2" height="2.6" fill="#2a8ac9"/>
<path d="M1.5 6 H17 L18 9 H31 V28 H1.5 Z" fill="#f4dc90"/>
<path d="M5.5 17 H28.5 V29 H23.5 V22 H10.5 V29 H5.5 Z" fill="#7cc4ea"/>
<path d="M5.5 17 H28.5 V18.5 H5.5 Z" fill="#5a8aa8"/>
<rect x="6" y="18.5" width="3" height="10" fill="#cdeefc"/>
</svg>
<!-- opera -->
<svg class="abs" style="left:128px;top:733px" width="30" height="32" viewBox="0 0 30 32">
<defs><linearGradient id="og" x1="0" y1="0" x2="0" y2="1"><stop offset="0" stop-color="#ff1b2d"/><stop offset="1" stop-color="#a70014"/></linearGradient></defs>
<ellipse cx="15" cy="16" rx="14.5" ry="15" fill="url(#og)"/>
<ellipse cx="15" cy="16" rx="6.3" ry="11" fill="#6e909a"/>
</svg>
<!-- viber -->
<svg class="abs" style="left:189px;top:731px" width="32" height="36" viewBox="0 0 32 36">
<path d="M16 1.5 C26 1.5 30.5 5.5 30.5 15.5 C30.5 25.5 26 28.8 17 28.8 L11.5 34.5 L11.5 28.5 C4.5 27 1.5 23 1.5 15.5 C1.5 5.5 6 1.5 16 1.5 Z" fill="#fff"/>
<path d="M16 4 C24.5 4 28 7.2 28 15.5 C28 24 24.5 26.5 16.5 26.5 L13.8 29.5 L13.8 26.2 C7 25 4 22 4 15.5 C4 7.2 7.5 4 16 4 Z" fill="#7360f2"/>
<path d="M10.5 9 C9.5 9.8 9 11 9.6 12.6 C11 16.5 13.8 19.8 17.8 21.5 C19.3 22.2 20.6 21.5 21.4 20.5 L21.6 19.8 L19 17.8 L17.6 18.8 C15.4 17.8 13.6 15.8 12.8 13.6 L13.8 12.4 L12 9.4 Z" fill="#fff"/>
<path d="M17 8.5 C19.8 8.7 22 11 22.2 14 M17 10.6 C18.8 10.8 20 12.1 20.1 14 M17 12.6 C17.8 12.8 18.2 13.3 18.2 14" stroke="#fff" stroke-width="1.2" fill="none" stroke-linecap="round"/>
</svg>
<!-- recorder -->
<svg class="abs" style="left:251px;top:732px" width="32" height="32" viewBox="0 0 32 32">
<rect x="0" y="0" width="32" height="32" rx="4" fill="#0f0f0f"/>
<path d="M2.5 7 V4 Q2.5 2.5 4 2.5 H7 M25 2.5 H28 Q29.5 2.5 29.5 4 V7 M29.5 25 V28 Q29.5 29.5 28 29.5 H25 M7 29.5 H4 Q2.5 29.5 2.5 28 V25" stroke="#e8202e" stroke-width="1.6" fill="none"/>
<rect x="5" y="9" width="18" height="14" rx="4" fill="#fff"/>
<rect x="6.3" y="10.3" width="15.4" height="11.4" rx="3" fill="#e41e2b"/>
<path d="M22 13.5 L27.5 10.5 V21.5 L22 18.5 Z" fill="#fff"/><path d="M22.8 14 L26.5 12 V20 L22.8 18 Z" fill="#e41e2b"/>
<path d="M9 16 C10 13.5 12.5 13.5 14 16 C15.5 18.5 18 18.5 19 16" stroke="#fff" stroke-width="1.4" fill="none"/>
</svg>
<!-- word -->
<svg class="abs" style="left:313px;top:733px" width="32" height="30" viewBox="0 0 32 30">
<rect x="8" y="1" width="23" height="28" rx="1.5" fill="#41a5ee"/>
<rect x="8" y="8" width="23" height="7" fill="#2b7cd3"/>
<rect x="8" y="15" width="23" height="7" fill="#185abd"/>
<path d="M8 22 H31 V27.5 Q31 29 29.5 29 H9.5 Q8 29 8 27.5 Z" fill="#103f91"/>
<rect x="0.5" y="7" width="16.5" height="16.5" rx="1.2" fill="#185abd"/>
<path d="M3.3 10.8 L5.3 19.5 H7.2 L8.7 13.8 L10.2 19.5 H12.1 L14.1 10.8 H12.4 L11.2 16.5 L9.6 10.8 H7.9 L6.2 16.5 L5 10.8 Z" fill="#fff"/>
</svg>
<!-- zoom -->
<svg class="abs" style="left:374px;top:733px" width="30" height="30" viewBox="0 0 30 30">
<rect x="0.5" y="0.5" width="29" height="29" rx="9" fill="#3d8df5"/>
<rect x="6.5" y="10" width="12" height="10" rx="2" fill="#fff"/>
<path d="M18.5 13.5 L23.5 9.8 V20.2 L18.5 16.5 Z" fill="#fff"/>
</svg>
<!-- tray -->
<svg class="abs" style="left:1056px;top:745px" width="12" height="8" viewBox="0 0 12 8"><path d="M2.5 6.5 L6 3 L9.5 6.5 Z" fill="#fff"/></svg>
<svg class="abs" style="left:1079px;top:740px" width="18" height="19" viewBox="0 0 18 19">
<rect x="1" y="1" width="10" height="12" fill="#0d3a6e"/><rect x="2.2" y="2.2" width="9" height="11" fill="#fff"/>
<path d="M5 5 H12 L16 9 V17.5 H5 Z" fill="#29b6d8"/><path d="M5 9.5 H9 V7.5 L13 11 L9 14.5 V12.5 H5 Z" fill="#fff"/>
</svg>
<svg class="abs" style="left:1102px;top:740px" width="18" height="18" viewBox="0 0 18 18">
<circle cx="9" cy="9" r="8" fill="#f0d229"/><path d="M2 11 Q6 15 13 16.5 Q9 18 5 16 Z" fill="#2e8a32"/><path d="M11 1.5 Q15.5 3 16.5 7 Q14 4 11 1.5Z" fill="#2e8a32"/>
<path d="M7.6 4.5 H10.4 V7.6 H13.5 V10.4 H10.4 V13.5 H7.6 V10.4 H4.5 V7.6 H7.6 Z" fill="#2a7d2c"/>
</svg>
<svg class="abs" style="left:1126px;top:740px" width="18" height="19" viewBox="0 0 18 19">
<path d="M9 1 C14.5 1 17 3.2 17 8.5 C17 14 14.5 15.5 9.5 15.5 L6.8 18.3 L6.8 15.2 C2.8 14.2 1 12 1 8.5 C1 3.2 3.5 1 9 1 Z" fill="#fff"/>
<path d="M9 2.3 C13.5 2.3 15.7 4 15.7 8.5 C15.7 13 13.5 14.3 9.2 14.3 L7.8 15.8 L7.8 14.1 C4.2 13.3 2.3 11.5 2.3 8.5 C2.3 4 4.5 2.3 9 2.3 Z" fill="#7360f2"/>
<path d="M6 5 C5.4 5.5 5.2 6.3 5.6 7.2 C6.4 9.2 7.8 10.8 9.8 11.7 C10.6 12 11.3 11.7 11.7 11.1 L10.4 9.9 L9.6 10.4 C8.5 9.9 7.6 8.9 7.2 7.8 L7.7 7.1 L6.7 5.2 Z" fill="#fff"/>
</svg>
<svg class="abs" style="left:1150px;top:740px" width="18" height="18" viewBox="0 0 18 18">
<rect x="3" y="1" width="5" height="5" fill="#c9c9c9"/><rect x="2" y="6" width="7" height="10" fill="#6f6f6f"/>
<circle cx="12" cy="12" r="5.5" fill="#2a9b3a"/><path d="M9.3 12 L11.3 14.2 L14.8 9.5" stroke="#fff" stroke-width="1.4" fill="none"/>
</svg>
<svg class="abs" style="left:1174px;top:740px" width="18" height="18" viewBox="0 0 18 18">
<path d="M2.3 1 V4 M5.2 1 V4 M1.2 4 H6.3 V8.5 Q6.3 9.8 4.8 9.8 L4.5 9.8 V17 H3 V9.8 Q1.2 9.8 1.2 8.5 Z" stroke="#111" stroke-width="0.6" fill="#fff"/>
<rect x="10.8" y="1" width="3.4" height="2" fill="#fff"/>
<rect x="8.6" y="2.6" width="7.8" height="14.2" rx="1" fill="none" stroke="#fff" stroke-width="1.6"/>
</svg>
<svg class="abs" style="left:1199px;top:742px" width="17" height="13" viewBox="0 0 17 13">
<rect x="1" y="9" width="2.4" height="3" fill="#fff"/><rect x="4.3" y="7" width="2.4" height="5" fill="#fff"/><rect x="7.6" y="5" width="2.4" height="7" fill="#fff"/><rect x="10.9" y="3" width="2.4" height="9" fill="#fff"/><rect x="14" y="1" width="2.4" height="11" fill="#fff"/>
</svg>
<svg class="abs" style="left:1222px;top:740px" width="16" height="17" viewBox="0 0 16 17">
<path d="M1 6 H4 L8.2 1.8 V15.2 L4 11 H1 Z" fill="#fff"/>
<path d="M10.3 5.6 Q11.8 8.5 10.3 11.4 M12.4 3.8 Q15.2 8.5 12.4 13.2" stroke="#fff" stroke-width="1.3" fill="none"/>
</svg>
<div class="abs tray" style="left:1254px;top:742px">РУС</div>
<div class="abs tray" style="left:1280px;top:734px;width:80px;text-align:center">11:24</div>
<div class="abs tray" style="left:1280px;top:751px;width:80px;text-align:center;letter-spacing:-0.5px">09.06.2022</div>

</body></html>
